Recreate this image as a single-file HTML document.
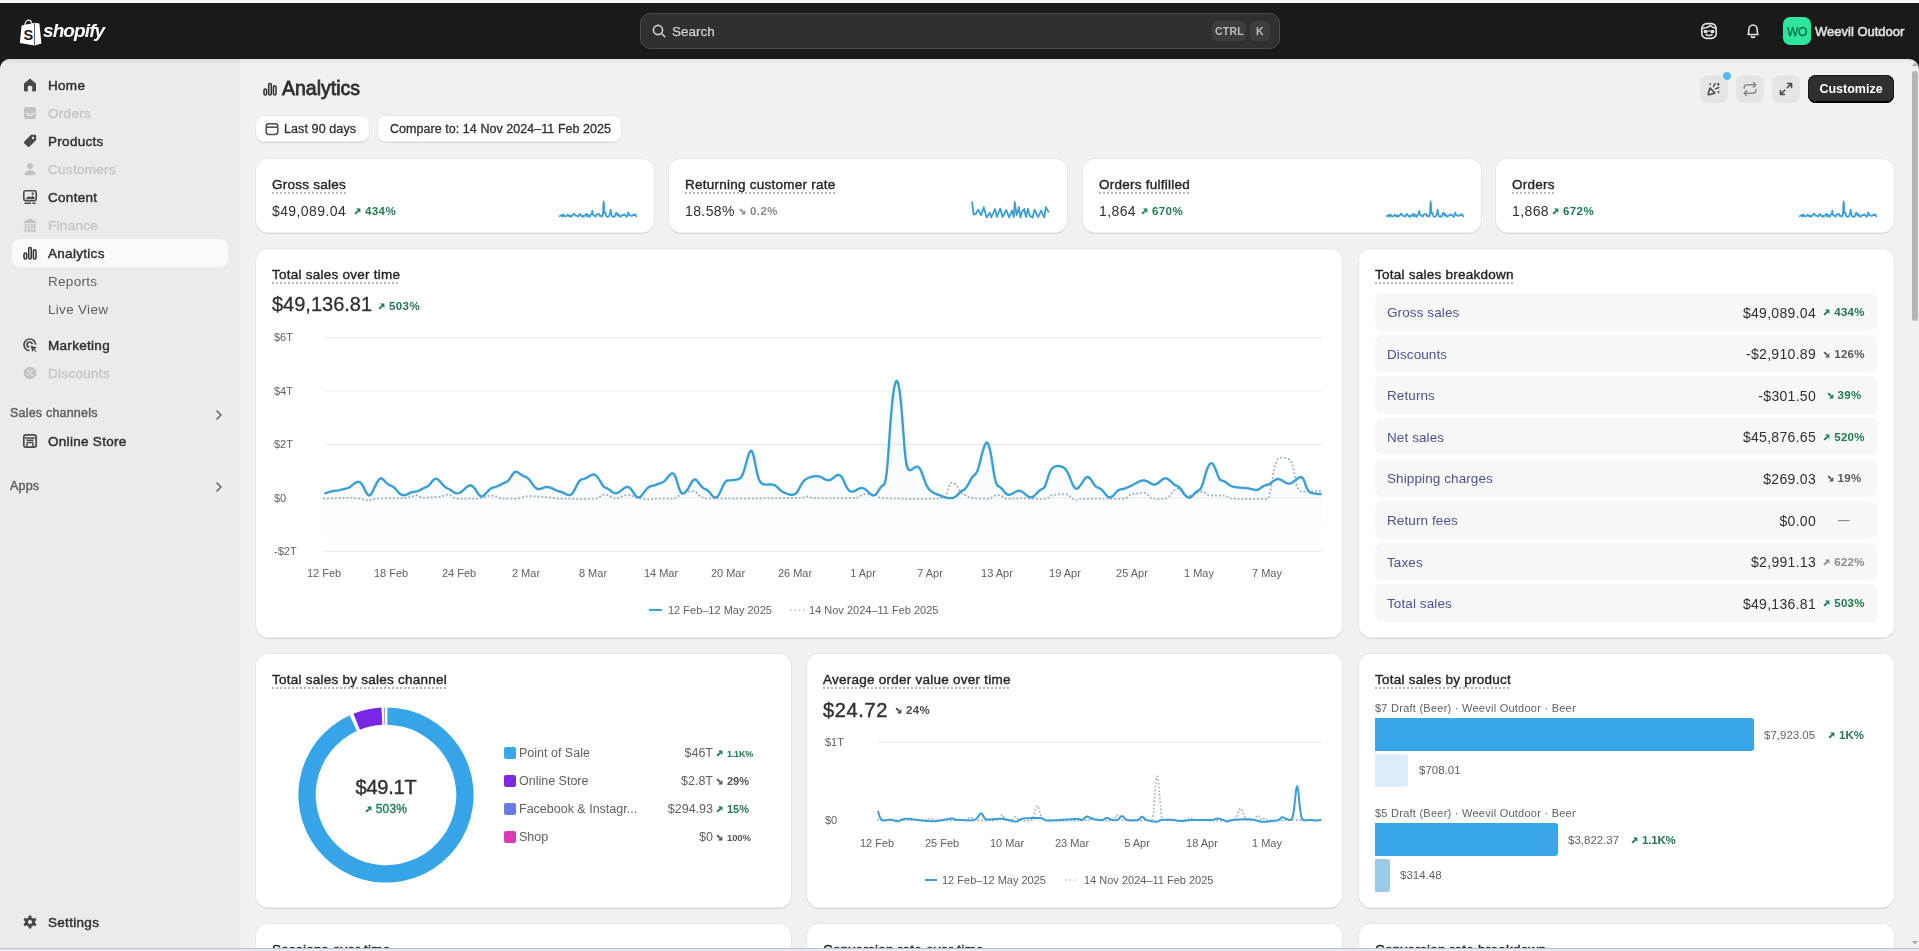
<!DOCTYPE html>
<html><head><meta charset="utf-8">
<style>
*{box-sizing:border-box;margin:0;padding:0}
html,body{width:1919px;height:951px;overflow:hidden;background:#f8f8fa;font-family:"Liberation Sans",sans-serif;color:#303030;-webkit-font-smoothing:antialiased}
.t,.ttl,.tx,.sect{will-change:transform}
.abs{position:absolute}
#hdr{position:absolute;left:0;top:3px;width:1919px;height:75px;background:#1a1a1a}
#app{position:absolute;left:0;top:59px;width:1919px;height:892px;background:#f1f1f1;border-radius:10px 10px 0 0;overflow:hidden}
#side{position:absolute;left:0;top:0;width:240px;height:892px;background:#ebebeb}
#app:before{content:"";position:absolute;left:0;top:0;width:100%;height:5px;background:linear-gradient(rgba(0,0,0,0.06),rgba(0,0,0,0));z-index:5}
.nav{position:absolute;left:12px;width:216px;height:28px;border-radius:8px}
.nav .ic{position:absolute;left:10px;top:6px;width:16px;height:16px}
.nav .tx{position:absolute;left:36px;top:1px;line-height:28px;font-size:13.5px;font-weight:normal;-webkit-text-stroke:0.45px currentColor;color:#303030;letter-spacing:0.3px}
.nav.dim .tx{color:#c6c6c6}
.nav.sub .tx{-webkit-text-stroke:0;color:#616161}
.sect{position:absolute;left:10px;font-size:12.5px;font-weight:normal;-webkit-text-stroke:0.45px currentColor;color:#616161}
.card{position:absolute;background:#fff;border-radius:12px;box-shadow:0 1px 0 rgba(26,26,26,.09),inset 0 -1px 0 rgba(0,0,0,.06),0 0 0 1px rgba(0,0,0,.035)}
.ttl{position:absolute;font-size:13.5px;font-weight:normal;-webkit-text-stroke:0.4px currentColor;letter-spacing:0.25px;margin-top:1px;color:#262626;line-height:16px;padding-bottom:0.5px;white-space:nowrap;background:linear-gradient(to right,#b9b9b9 50%,rgba(0,0,0,0) 50%) left bottom/4px 2px repeat-x}
.t{position:absolute;white-space:nowrap}
.g{color:#1f7a50}
.gr{color:#616161}
</style></head><body>
<div id="hdr">
  <!-- shopify logo -->
  <svg class="abs" style="left:19px;top:15px" width="24" height="28" viewBox="0 0 24 28">
    <path d="M2.6 7.6 L15.5 4.8 L20.4 5.6 L22.4 25.4 L15.6 27.4 L0.8 24.9 Z" fill="#fff"/>
    <path d="M15.5 5.2 L15.6 27.2" stroke="#1a1a1a" stroke-width="0.7"/>
    <path d="M5.8 7.8 C5.9 4.6 7.6 2.2 9.6 2.2 C11.3 2.2 12.3 3.6 12.6 5.6" stroke="#fff" stroke-width="1.3" fill="none"/>
    <path d="M9.8 3.2 C10.8 3.6 11.6 4.6 11.8 6" stroke="#1a1a1a" stroke-width="0.6" fill="none"/>
    <text x="4.6" y="22.4" font-family="Liberation Sans" font-weight="bold" font-size="14.5" fill="#1a1a1a">S</text>
  </svg>
  <div class="t" style="left:43px;top:17px;font-size:19px;font-weight:bold;font-style:italic;color:#fff;letter-spacing:-0.9px">shopify</div>
  <!-- search -->
  <div class="abs" style="left:640px;top:10px;width:640px;height:36px;border-radius:10px;background:#303030;border:1px solid #4a4a4a"></div>
  <svg class="abs" style="left:652px;top:21px" width="14" height="14" viewBox="0 0 14 14"><circle cx="6" cy="6" r="4.6" stroke="#cfcfcf" stroke-width="1.6" fill="none"/><path d="M9.5 9.5 L12.8 12.8" stroke="#cfcfcf" stroke-width="1.6" stroke-linecap="round"/></svg>
  <div class="t" style="left:672px;top:21px;font-size:13.5px;-webkit-text-stroke:0.25px currentColor;color:#cfcfcf">Search</div>
  <div class="abs" style="left:1212px;top:18px;width:34px;height:20px;border-radius:5px;background:#3d3d3d"></div>
  <div class="t" style="left:1215px;top:22px;font-size:10.5px;font-weight:bold;color:#bcbcbc;letter-spacing:0.2px">CTRL</div>
  <div class="abs" style="left:1250px;top:18px;width:20px;height:20px;border-radius:5px;background:#3d3d3d"></div>
  <div class="t" style="left:1256px;top:22px;font-size:10.5px;font-weight:bold;color:#bcbcbc">K</div>
  <!-- icons right -->
  <svg class="abs" style="left:1700px;top:19px" width="18" height="18" viewBox="0 0 18 18"><rect x="1.8" y="1.6" width="14.4" height="14.8" rx="5" stroke="#e3e3e3" stroke-width="1.6" fill="none"/><path d="M2.2 6.2 C5 6.4 8 5.6 10.5 3.6 C11.5 5 13.5 6 15.8 6.2" stroke="#e3e3e3" stroke-width="1.6" fill="none"/><rect x="3.6" y="8" width="4" height="3" rx="1.2" fill="#e3e3e3"/><rect x="10.4" y="8" width="4" height="3" rx="1.2" fill="#e3e3e3"/><path d="M7.6 9 H10.4" stroke="#e3e3e3" stroke-width="1.2"/><path d="M6 12.4 C7.5 13.9 10.5 13.9 12 12.4" stroke="#e3e3e3" stroke-width="1.6" fill="none" stroke-linecap="round"/></svg>
  <svg class="abs" style="left:1744px;top:19px" width="18" height="18" viewBox="0 0 18 18"><path d="M4 12.5 C4.8 11.5 4.8 10 4.8 7.8 C4.8 5 6.6 3 9 3 C11.4 3 13.2 5 13.2 7.8 C13.2 10 13.2 11.5 14 12.5 Z" stroke="#e3e3e3" stroke-width="1.6" fill="none" stroke-linejoin="round"/><path d="M7.4 14.6 C7.8 15.6 10.2 15.6 10.6 14.6" stroke="#e3e3e3" stroke-width="1.6" fill="none" stroke-linecap="round"/></svg>
  <div class="abs" style="left:1783px;top:14px;width:28px;height:28px;border-radius:7px;background:#2ee59d"></div>
  <div class="t" style="left:1785px;top:22px;width:24px;text-align:center;font-size:12px;-webkit-text-stroke:0.25px currentColor;color:#0b6a44;letter-spacing:-0.4px">WO</div>
  <div class="t" style="left:1815px;top:21px;font-size:13px;-webkit-text-stroke:0.55px currentColor;color:#e3e3e3;letter-spacing:0px">Weevil Outdoor</div>
</div>

<div id="app">
  <div id="side">
    <!-- nav items: top positions relative to app (y-58) -->
    <div class="nav" style="top:12px"><svg class="ic" viewBox="0 0 16 16"><path d="M8 1.6 L14 6.4 V13.2 C14 13.9 13.5 14.4 12.8 14.4 H10.2 V10.2 C10.2 9.2 9.4 8.8 8 8.8 C6.6 8.8 5.8 9.2 5.8 10.2 V14.4 H3.2 C2.5 14.4 2 13.9 2 13.2 V6.4 Z" fill="#4a4a4a"/></svg><div class="tx">Home</div></div>
    <div class="nav dim" style="top:40px"><svg class="ic" viewBox="0 0 16 16"><rect x="2" y="2" width="12" height="12" rx="2.5" fill="#c2c2c2"/><path d="M3.5 8.5 H6 C6.3 10 7 10.6 8 10.6 C9 10.6 9.7 10 10 8.5 H12.5" stroke="#ebebeb" stroke-width="1.4" fill="none"/></svg><div class="tx">Orders</div></div>
    <div class="nav" style="top:68px"><svg class="ic" viewBox="0 0 16 16"><path d="M9 1.8 H13 C13.7 1.8 14.2 2.3 14.2 3 V7 L7.6 13.6 C7 14.2 6.2 14.2 5.6 13.6 L2.4 10.4 C1.8 9.8 1.8 9 2.4 8.4 Z" fill="#4a4a4a"/><circle cx="11" cy="5" r="1.2" fill="#ebebeb"/></svg><div class="tx">Products</div></div>
    <div class="nav dim" style="top:96px"><svg class="ic" viewBox="0 0 16 16"><circle cx="8" cy="5" r="3" fill="#c2c2c2"/><path d="M2.5 14.2 C2.5 10.8 5 9.2 8 9.2 C11 9.2 13.5 10.8 13.5 14.2 Z" fill="#c2c2c2"/></svg><div class="tx">Customers</div></div>
    <div class="nav" style="top:124px"><svg class="ic" viewBox="0 0 16 16"><rect x="1.8" y="1.8" width="12.4" height="9.8" rx="1.6" stroke="#4a4a4a" stroke-width="1.6" fill="none"/><path d="M3.5 10 L6.5 7 L8.5 8.6 L10.5 6.6 L12.5 8.8 V10 Z" fill="#4a4a4a"/><circle cx="10.8" cy="4.6" r="1.2" fill="#4a4a4a"/><path d="M2.5 14.2 H9 M10.5 14.2 H13.5" stroke="#4a4a4a" stroke-width="1.5"/></svg><div class="tx">Content</div></div>
    <div class="nav dim" style="top:152px"><svg class="ic" viewBox="0 0 16 16"><path d="M8 1.5 L14.2 4.8 V6.2 H1.8 V4.8 Z" fill="#c2c2c2"/><rect x="2.8" y="7" width="1.8" height="5.2" fill="#c2c2c2"/><rect x="5.9" y="7" width="1.8" height="5.2" fill="#c2c2c2"/><rect x="8.9" y="7" width="1.8" height="5.2" fill="#c2c2c2"/><rect x="11.6" y="7" width="1.8" height="5.2" fill="#c2c2c2"/><rect x="1.8" y="12.8" width="12.4" height="1.8" fill="#c2c2c2"/></svg><div class="tx">Finance</div></div>
    <div class="nav" style="top:180px;background:#fafafa"><svg class="ic" viewBox="0 0 16 16"><rect x="2" y="8" width="2.6" height="6" rx="1.3" stroke="#303030" stroke-width="1.5" fill="none"/><rect x="6.7" y="2.5" width="2.6" height="11.5" rx="1.3" stroke="#303030" stroke-width="1.5" fill="none"/><rect x="11.4" y="4.8" width="2.6" height="9.2" rx="1.3" stroke="#303030" stroke-width="1.5" fill="none"/></svg><div class="tx">Analytics</div></div>
    <div class="nav sub" style="top:208px"><div class="tx">Reports</div></div>
    <div class="nav sub" style="top:236px"><div class="tx">Live View</div></div>
    <div class="nav" style="top:272px"><svg class="ic" viewBox="0 0 16 16"><path d="M13.6 7.6 A5.8 5.8 0 1 0 7.4 13.6" stroke="#4a4a4a" stroke-width="1.7" fill="none"/><path d="M10.2 7.2 A2.6 2.6 0 1 0 7.2 10.2" stroke="#4a4a4a" stroke-width="1.7" fill="none"/><path d="M8.4 8.4 L15 10.6 L12.4 11.8 L14.6 14.2 L13.8 15 L11.6 12.6 L10.4 15 Z" fill="#4a4a4a"/></svg><div class="tx">Marketing</div></div>
    <div class="nav dim" style="top:300px"><svg class="ic" viewBox="0 0 16 16"><path d="M8 1.2 L9.8 2.6 L12 2.4 L12.6 4.6 L14.6 5.8 L13.8 8 L14.6 10.2 L12.6 11.4 L12 13.6 L9.8 13.4 L8 14.8 L6.2 13.4 L4 13.6 L3.4 11.4 L1.4 10.2 L2.2 8 L1.4 5.8 L3.4 4.6 L4 2.4 L6.2 2.6 Z" fill="#c2c2c2"/><path d="M5.6 10.4 L10.4 5.6" stroke="#ebebeb" stroke-width="1.3"/><circle cx="6" cy="6" r="1" fill="#ebebeb"/><circle cx="10" cy="10" r="1" fill="#ebebeb"/></svg><div class="tx">Discounts</div></div>
    <div class="sect" style="top:347px;letter-spacing:0.2px">Sales channels</div>
    <svg class="abs" style="left:214px;top:350px" width="10" height="12" viewBox="0 0 10 12"><path d="M3 2 L7 6 L3 10" stroke="#616161" stroke-width="1.5" fill="none" stroke-linecap="round" stroke-linejoin="round"/></svg>
    <div class="nav" style="top:368px"><svg class="ic" viewBox="0 0 16 16"><rect x="1.8" y="1.8" width="12.4" height="12.4" rx="2.2" stroke="#4a4a4a" stroke-width="1.7" fill="none"/><path d="M3 5 H13 M4.5 7.3 H11.5 M5 9.5 V13.5 M11 9.5 V13.5 M5 9.5 H11" stroke="#4a4a4a" stroke-width="1.5"/></svg><div class="tx">Online Store</div></div>
    <div class="sect" style="top:419.5px;letter-spacing:0.2px">Apps</div>
    <svg class="abs" style="left:214px;top:422px" width="10" height="12" viewBox="0 0 10 12"><path d="M3 2 L7 6 L3 10" stroke="#616161" stroke-width="1.5" fill="none" stroke-linecap="round" stroke-linejoin="round"/></svg>
    <div class="nav" style="top:849px"><svg class="ic" viewBox="0 0 16 16"><path d="M6.8 1.5 H9.2 L9.7 3.5 L11.3 4.4 L13.3 3.8 L14.5 5.9 L13 7.3 V8.7 L14.5 10.1 L13.3 12.2 L11.3 11.6 L9.7 12.5 L9.2 14.5 H6.8 L6.3 12.5 L4.7 11.6 L2.7 12.2 L1.5 10.1 L3 8.7 V7.3 L1.5 5.9 L2.7 3.8 L4.7 4.4 L6.3 3.5 Z" fill="#4a4a4a"/><circle cx="8" cy="8" r="2" fill="#ebebeb"/></svg><div class="tx">Settings</div></div>
  </div>
</div>
<!-- MAIN -->
<!-- page header -->
<svg class="abs" style="left:262px;top:81px" width="16" height="16" viewBox="0 0 16 16"><rect x="2" y="8" width="2.6" height="6" rx="1.3" stroke="#303030" stroke-width="1.5" fill="none"/><rect x="6.7" y="2.5" width="2.6" height="11.5" rx="1.3" stroke="#303030" stroke-width="1.5" fill="none"/><rect x="11.4" y="4.8" width="2.6" height="9.2" rx="1.3" stroke="#303030" stroke-width="1.5" fill="none"/></svg>
<div class="t" style="left:282px;top:77px;font-size:19.5px;-webkit-text-stroke:0.8px currentColor;color:#303030">Analytics</div>

<div class="card" style="left:256px;top:116px;width:113px;height:26px;border-radius:8px"></div>
<svg class="abs" style="left:264px;top:121px" width="16" height="16" viewBox="0 0 16 16"><rect x="2.2" y="2.8" width="11.6" height="10.6" rx="2.6" stroke="#4a4a4a" stroke-width="1.5" fill="none"/><path d="M2.5 6.2 H13.5" stroke="#4a4a4a" stroke-width="1.5"/></svg>
<div class="t" style="left:284px;top:122px;font-size:12.5px;-webkit-text-stroke:0.3px currentColor;letter-spacing:0.1px;color:#303030">Last 90 days</div>
<div class="card" style="left:378px;top:116px;width:243px;height:26px;border-radius:8px"></div>
<div class="t" style="left:390px;top:122px;font-size:12.5px;-webkit-text-stroke:0.3px currentColor;letter-spacing:0.05px;color:#303030">Compare to: 14 Nov 2024–11 Feb 2025</div>

<div class="abs" style="left:1700px;top:75px;width:28px;height:28px;border-radius:8px;background:#e5e5e5"></div>
<svg class="abs" style="left:1705px;top:80px" width="18" height="18" viewBox="0 0 18 18"><path d="M5 8 L3.2 13.8 C3 14.5 3.5 15 4.2 14.8 L10 13 Z" stroke="#4a4a4a" stroke-width="1.5" fill="none" stroke-linejoin="round"/><circle cx="5.2" cy="4.2" r="0.9" fill="#4a4a4a"/><path d="M8.5 6.5 L10 3.5 M10.5 8.8 L13.8 7.5" stroke="#4a4a4a" stroke-width="1.4" stroke-linecap="round"/><path d="M13.2 2.2 L13.8 3.6 L15.2 4.2 L13.8 4.8 L13.2 6.2 L12.6 4.8 L11.2 4.2 L12.6 3.6 Z" fill="#4a4a4a"/><path d="M13.5 10.5 L14 11.6 L15.1 12.1 L14 12.6 L13.5 13.7 L13 12.6 L11.9 12.1 L13 11.6 Z" fill="#4a4a4a"/></svg>
<div class="abs" style="left:1722px;top:71px;width:10px;height:10px;border-radius:50%;background:#55b8f2;border:1px solid #f1f1f1"></div>
<div class="abs" style="left:1736px;top:75px;width:28px;height:28px;border-radius:8px;background:#e5e5e5"></div>
<svg class="abs" style="left:1741px;top:80px" width="18" height="18" viewBox="0 0 18 18"><path d="M12.5 2.5 L14.8 4.8 L12.5 7.1 M14.5 4.8 H6 C4.3 4.8 3.2 5.9 3.2 7.6 V8.2" stroke="#8a8a8a" stroke-width="1.5" fill="none" stroke-linecap="round" stroke-linejoin="round"/><path d="M5.5 15.5 L3.2 13.2 L5.5 10.9 M3.5 13.2 H12 C13.7 13.2 14.8 12.1 14.8 10.4 V9.8" stroke="#8a8a8a" stroke-width="1.5" fill="none" stroke-linecap="round" stroke-linejoin="round"/></svg>
<div class="abs" style="left:1772px;top:75px;width:28px;height:28px;border-radius:8px;background:#e5e5e5"></div>
<svg class="abs" style="left:1777px;top:80px" width="18" height="18" viewBox="0 0 18 18"><path d="M10.5 3.5 H14.5 V7.5 M14.2 3.8 L10.2 7.8 M7.5 14.5 H3.5 V10.5 M3.8 14.2 L7.8 10.2" stroke="#4a4a4a" stroke-width="1.6" fill="none" stroke-linecap="round" stroke-linejoin="round"/></svg>
<div class="abs" style="left:1808px;top:75px;width:86px;height:28px;border-radius:8px;background:#303030;box-shadow:inset 0 -2px 0 #000, inset 0 0 0 1px #1a1a1a, inset 0 1px 0 #4a4a4a"></div>
<div class="t" style="left:1808px;top:81.5px;width:86px;text-align:center;font-size:12.5px;font-weight:bold;color:#fff">Customize</div>

<!-- metric cards -->
<div class="card" style="left:256px;top:159px;width:398px;height:74px"></div>
<div class="ttl" style="left:272px;top:176px">Gross sales</div>
<div class="t" style="left:272px;top:203px;font-size:14px;letter-spacing:0.4px;color:#303030">$49,089.04</div>
<div class="t g" style="left:354px;top:205px;font-size:11.5px;font-weight:bold;letter-spacing:0.4px"><svg width="7" height="7" viewBox="0 0 7 7" style="display:inline-block;vertical-align:0px;margin-right:4px"><path d="M1.1 5.9 L4.2 2.8" stroke="currentColor" stroke-width="1.9"/><path d="M2.0 0.6 H6.4 V5.0 Z" fill="currentColor"/></svg>434%</div>

<div class="card" style="left:669px;top:159px;width:398px;height:74px"></div>
<div class="ttl" style="left:685px;top:176px">Returning customer rate</div>
<div class="t" style="left:685px;top:203px;font-size:14px;letter-spacing:0.4px;color:#303030">18.58%</div>
<div class="t gr" style="left:739px;top:205px;font-size:11.5px;font-weight:bold;letter-spacing:0.4px;color:#8a8a8a"><svg width="7" height="7" viewBox="0 0 7 7" style="display:inline-block;vertical-align:0px;margin-right:4px"><path d="M1.1 1.1 L4.2 4.2" stroke="currentColor" stroke-width="1.9"/><path d="M2.0 6.4 H6.4 V2.0 Z" fill="currentColor"/></svg>0.2%</div>

<div class="card" style="left:1083px;top:159px;width:398px;height:74px"></div>
<div class="ttl" style="left:1099px;top:176px">Orders fulfilled</div>
<div class="t" style="left:1099px;top:203px;font-size:14px;letter-spacing:0.4px;color:#303030">1,864</div>
<div class="t g" style="left:1141px;top:205px;font-size:11.5px;font-weight:bold;letter-spacing:0.4px"><svg width="7" height="7" viewBox="0 0 7 7" style="display:inline-block;vertical-align:0px;margin-right:4px"><path d="M1.1 5.9 L4.2 2.8" stroke="currentColor" stroke-width="1.9"/><path d="M2.0 0.6 H6.4 V5.0 Z" fill="currentColor"/></svg>670%</div>

<div class="card" style="left:1496px;top:159px;width:398px;height:74px"></div>
<div class="ttl" style="left:1512px;top:176px">Orders</div>
<div class="t" style="left:1512px;top:203px;font-size:14px;letter-spacing:0.4px;color:#303030">1,868</div>
<div class="t g" style="left:1552px;top:205px;font-size:11.5px;font-weight:bold;letter-spacing:0.4px"><svg width="7" height="7" viewBox="0 0 7 7" style="display:inline-block;vertical-align:0px;margin-right:4px"><path d="M1.1 5.9 L4.2 2.8" stroke="currentColor" stroke-width="1.9"/><path d="M2.0 0.6 H6.4 V5.0 Z" fill="currentColor"/></svg>672%</div>

<svg class="abs" style="left:0;top:0" width="1919" height="240"><path d="M324.2 493.40 L324.7 493.31 L325.7 493.07 L326.7 492.78 L327.7 492.46 L328.7 492.14 L329.7 491.83 L330.7 491.53 L331.7 491.25 L332.7 491.02 L333.7 490.84 L334.7 490.72 L335.7 490.66 L336.7 490.61 L337.7 490.51 L338.7 490.35 L339.7 490.13 L340.7 489.87 L341.7 489.59 L342.7 489.31 L343.7 489.05 L344.7 488.82 L345.7 488.63 L346.7 488.43 L347.7 488.15 L348.7 487.72 L349.7 487.15 L350.7 486.45 L351.7 485.67 L352.7 484.87 L353.7 484.08 L354.7 483.33 L355.7 482.67 L356.7 482.15 L357.7 481.83 L358.7 481.80 L359.7 482.12 L360.7 482.84 L361.7 483.99 L362.7 485.51 L363.7 487.35 L364.7 489.37 L365.7 491.38 L366.7 493.19 L367.7 494.56 L368.7 495.29 L369.7 495.26 L370.7 494.46 L371.7 493.03 L372.7 491.20 L373.7 489.19 L374.7 487.15 L375.7 485.12 L376.7 483.16 L377.7 481.34 L378.7 479.85 L379.7 478.83 L380.7 478.39 L381.7 478.53 L382.7 479.14 L383.7 480.06 L384.7 481.15 L385.7 482.23 L386.7 483.19 L387.7 483.98 L388.7 484.60 L389.7 485.11 L390.7 485.56 L391.7 486.03 L392.7 486.57 L393.7 487.25 L394.7 488.09 L395.7 489.10 L396.7 490.23 L397.7 491.41 L398.7 492.53 L399.7 493.53 L400.7 494.32 L401.7 494.87 L402.7 495.17 L403.7 495.24 L404.7 495.12 L405.7 494.86 L406.7 494.50 L407.7 494.08 L408.7 493.62 L409.7 493.15 L410.7 492.70 L411.7 492.31 L412.7 492.01 L413.7 491.82 L414.7 491.68 L415.7 491.55 L416.7 491.34 L417.7 491.03 L418.7 490.62 L419.7 490.14 L420.7 489.63 L421.7 489.10 L422.7 488.57 L423.7 488.07 L424.7 487.62 L425.7 487.23 L426.7 486.83 L427.7 486.31 L428.7 485.55 L429.7 484.52 L430.7 483.31 L431.7 482.03 L432.7 480.83 L433.7 479.83 L434.7 479.13 L435.7 478.80 L436.7 478.88 L437.7 479.34 L438.7 480.10 L439.7 481.09 L440.7 482.21 L441.7 483.40 L442.7 484.58 L443.7 485.67 L444.7 486.61 L445.7 487.38 L446.7 487.98 L447.7 488.49 L448.7 488.99 L449.7 489.54 L450.7 490.16 L451.7 490.84 L452.7 491.52 L453.7 492.16 L454.7 492.70 L455.7 493.11 L456.7 493.34 L457.7 493.37 L458.7 493.19 L459.7 492.79 L460.7 492.21 L461.7 491.49 L462.7 490.67 L463.7 489.79 L464.7 488.88 L465.7 487.98 L466.7 487.13 L467.7 486.37 L468.7 485.79 L469.7 485.44 L470.7 485.39 L471.7 485.70 L472.7 486.37 L473.7 487.36 L474.7 488.57 L475.7 489.95 L476.7 491.47 L477.7 493.03 L478.7 494.49 L479.7 495.61 L480.7 496.27 L481.7 496.41 L482.7 496.09 L483.7 495.43 L484.7 494.55 L485.7 493.53 L486.7 492.44 L487.7 491.35 L488.7 490.32 L489.7 489.40 L490.7 488.64 L491.7 488.07 L492.7 487.66 L493.7 487.38 L494.7 487.13 L495.7 486.84 L496.7 486.49 L497.7 486.08 L498.7 485.61 L499.7 485.12 L500.7 484.61 L501.7 484.09 L502.7 483.59 L503.7 483.11 L504.7 482.66 L505.7 482.22 L506.7 481.72 L507.7 481.05 L508.7 480.10 L509.7 478.84 L510.7 477.34 L511.7 475.74 L512.7 474.23 L513.7 473.00 L514.7 472.17 L515.7 471.80 L516.7 471.86 L517.7 472.25 L518.7 472.87 L519.7 473.62 L520.7 474.40 L521.7 475.11 L522.7 475.70 L523.7 476.16 L524.7 476.53 L525.7 476.90 L526.7 477.37 L527.7 478.05 L528.7 478.97 L529.7 480.12 L530.7 481.46 L531.7 482.89 L532.7 484.33 L533.7 485.68 L534.7 486.87 L535.7 487.84 L536.7 488.54 L537.7 488.95 L538.7 489.09 L539.7 489.01 L540.7 488.76 L541.7 488.40 L542.7 488.00 L543.7 487.61 L544.7 487.29 L545.7 487.07 L546.7 486.98 L547.7 487.03 L548.7 487.21 L549.7 487.48 L550.7 487.82 L551.7 488.21 L552.7 488.64 L553.7 489.10 L554.7 489.57 L555.7 490.04 L556.7 490.50 L557.7 490.91 L558.7 491.26 L559.7 491.53 L560.7 491.76 L561.7 492.01 L562.7 492.36 L563.7 492.83 L564.7 493.38 L565.7 493.95 L566.7 494.47 L567.7 494.90 L568.7 495.15 L569.7 495.17 L570.7 494.86 L571.7 494.16 L572.7 493.03 L573.7 491.50 L574.7 489.66 L575.7 487.63 L576.7 485.56 L577.7 483.61 L578.7 481.95 L579.7 480.67 L580.7 479.81 L581.7 479.32 L582.7 479.05 L583.7 478.84 L584.7 478.57 L585.7 478.18 L586.7 477.66 L587.7 477.07 L588.7 476.45 L589.7 475.85 L590.7 475.30 L591.7 474.85 L592.7 474.57 L593.7 474.51 L594.7 474.74 L595.7 475.28 L596.7 476.16 L597.7 477.35 L598.7 478.81 L599.7 480.46 L600.7 482.21 L601.7 483.89 L602.7 485.37 L603.7 486.52 L604.7 487.30 L605.7 487.81 L606.7 488.20 L607.7 488.64 L608.7 489.21 L609.7 489.92 L610.7 490.72 L611.7 491.51 L612.7 492.22 L613.7 492.78 L614.7 493.14 L615.7 493.27 L616.7 493.15 L617.7 492.80 L618.7 492.28 L619.7 491.63 L620.7 490.90 L621.7 490.12 L622.7 489.32 L623.7 488.56 L624.7 487.88 L625.7 487.33 L626.7 486.98 L627.7 486.89 L628.7 487.13 L629.7 487.73 L630.7 488.66 L631.7 489.89 L632.7 491.36 L633.7 492.94 L634.7 494.49 L635.7 495.83 L636.7 496.84 L637.7 497.41 L638.7 497.51 L639.7 497.16 L640.7 496.44 L641.7 495.43 L642.7 494.23 L643.7 492.92 L644.7 491.58 L645.7 490.26 L646.7 489.04 L647.7 488.00 L648.7 487.17 L649.7 486.58 L650.7 486.20 L651.7 485.95 L652.7 485.74 L653.7 485.52 L654.7 485.23 L655.7 484.88 L656.7 484.49 L657.7 484.09 L658.7 483.71 L659.7 483.37 L660.7 483.05 L661.7 482.72 L662.7 482.28 L663.7 481.66 L664.7 480.82 L665.7 479.78 L666.7 478.60 L667.7 477.35 L668.7 476.12 L669.7 475.00 L670.7 474.08 L671.7 473.50 L672.7 473.38 L673.7 473.92 L674.7 475.25 L675.7 477.46 L676.7 480.45 L677.7 483.89 L678.7 487.26 L679.7 490.05 L680.7 492.00 L681.7 493.09 L682.7 493.47 L683.7 493.31 L684.7 492.74 L685.7 491.84 L686.7 490.64 L687.7 489.18 L688.7 487.51 L689.7 485.71 L690.7 483.91 L691.7 482.21 L692.7 480.78 L693.7 479.78 L694.7 479.35 L695.7 479.57 L696.7 480.36 L697.7 481.51 L698.7 482.83 L699.7 484.16 L700.7 485.45 L701.7 486.64 L702.7 487.65 L703.7 488.41 L704.7 488.95 L705.7 489.38 L706.7 489.86 L707.7 490.53 L708.7 491.42 L709.7 492.53 L710.7 493.76 L711.7 494.99 L712.7 496.11 L713.7 497.00 L714.7 497.54 L715.7 497.65 L716.7 497.23 L717.7 496.27 L718.7 494.83 L719.7 492.99 L720.7 490.90 L721.7 488.67 L722.7 486.46 L723.7 484.43 L724.7 482.74 L725.7 481.53 L726.7 480.82 L727.7 480.51 L728.7 480.42 L729.7 480.37 L730.7 480.30 L731.7 480.20 L732.7 480.08 L733.7 479.97 L734.7 479.84 L735.7 479.70 L736.7 479.53 L737.7 479.31 L738.7 479.00 L739.7 478.53 L740.7 477.73 L741.7 476.40 L742.7 474.37 L743.7 471.65 L744.7 468.38 L745.7 464.79 L746.7 461.09 L747.7 457.52 L748.7 454.37 L749.7 451.99 L750.7 450.80 L751.7 451.13 L752.7 453.08 L753.7 456.52 L754.7 461.07 L755.7 466.18 L756.7 471.16 L757.7 475.42 L758.7 478.66 L759.7 480.92 L760.7 482.40 L761.7 483.32 L762.7 483.90 L763.7 484.25 L764.7 484.45 L765.7 484.56 L766.7 484.59 L767.7 484.59 L768.7 484.56 L769.7 484.53 L770.7 484.51 L771.7 484.53 L772.7 484.64 L773.7 484.87 L774.7 485.26 L775.7 485.86 L776.7 486.67 L777.7 487.65 L778.7 488.70 L779.7 489.71 L780.7 490.58 L781.7 491.28 L782.7 491.86 L783.7 492.35 L784.7 492.80 L785.7 493.22 L786.7 493.61 L787.7 493.96 L788.7 494.27 L789.7 494.52 L790.7 494.70 L791.7 494.79 L792.7 494.78 L793.7 494.60 L794.7 494.21 L795.7 493.53 L796.7 492.49 L797.7 491.08 L798.7 489.36 L799.7 487.45 L800.7 485.53 L801.7 483.76 L802.7 482.25 L803.7 481.04 L804.7 480.10 L805.7 479.35 L806.7 478.74 L807.7 478.22 L808.7 477.77 L809.7 477.39 L810.7 477.06 L811.7 476.78 L812.7 476.54 L813.7 476.36 L814.7 476.22 L815.7 476.13 L816.7 476.11 L817.7 476.18 L818.7 476.36 L819.7 476.65 L820.7 477.04 L821.7 477.51 L822.7 478.04 L823.7 478.58 L824.7 479.11 L825.7 479.57 L826.7 479.94 L827.7 480.17 L828.7 480.22 L829.7 480.06 L830.7 479.69 L831.7 479.13 L832.7 478.41 L833.7 477.61 L834.7 476.78 L835.7 476.01 L836.7 475.37 L837.7 474.95 L838.7 474.83 L839.7 475.10 L840.7 475.85 L841.7 477.08 L842.7 478.76 L843.7 480.79 L844.7 482.98 L845.7 485.17 L846.7 487.18 L847.7 488.87 L848.7 490.16 L849.7 491.02 L850.7 491.49 L851.7 491.63 L852.7 491.53 L853.7 491.26 L854.7 490.86 L855.7 490.38 L856.7 489.87 L857.7 489.35 L858.7 488.87 L859.7 488.46 L860.7 488.17 L861.7 488.03 L862.7 488.10 L863.7 488.38 L864.7 488.87 L865.7 489.56 L866.7 490.40 L867.7 491.34 L868.7 492.32 L869.7 493.28 L870.7 494.15 L871.7 494.84 L872.7 495.28 L873.7 495.37 L874.7 495.09 L875.7 494.41 L876.7 493.37 L877.7 492.02 L878.7 490.47 L879.7 488.85 L880.7 487.36 L881.7 486.22 L882.7 485.53 L883.7 484.90 L884.7 483.36 L885.7 479.52 L886.7 472.30 L887.7 461.53 L888.7 448.11 L889.7 433.69 L890.7 419.94 L891.7 407.98 L892.7 398.22 L893.7 390.65 L894.7 385.17 L895.7 381.84 L896.7 380.81 L897.7 382.14 L898.7 385.78 L899.7 391.66 L900.7 399.86 L901.7 410.59 L902.7 423.61 L903.7 437.49 L904.7 449.97 L905.7 459.31 L906.7 465.20 L907.7 468.37 L908.7 469.78 L909.7 470.19 L910.7 470.02 L911.7 469.54 L912.7 468.88 L913.7 468.15 L914.7 467.45 L915.7 466.89 L916.7 466.58 L917.7 466.66 L918.7 467.25 L919.7 468.43 L920.7 470.20 L921.7 472.50 L922.7 475.18 L923.7 478.05 L924.7 480.88 L925.7 483.46 L926.7 485.66 L927.7 487.44 L928.7 488.85 L929.7 489.97 L930.7 490.87 L931.7 491.62 L932.7 492.26 L933.7 492.81 L934.7 493.29 L935.7 493.73 L936.7 494.14 L937.7 494.54 L938.7 494.93 L939.7 495.32 L940.7 495.71 L941.7 496.08 L942.7 496.44 L943.7 496.78 L944.7 497.10 L945.7 497.38 L946.7 497.63 L947.7 497.85 L948.7 498.01 L949.7 498.11 L950.7 498.15 L951.7 498.08 L952.7 497.90 L953.7 497.56 L954.7 497.05 L955.7 496.38 L956.7 495.56 L957.7 494.62 L958.7 493.62 L959.7 492.63 L960.7 491.74 L961.7 491.01 L962.7 490.43 L963.7 489.90 L964.7 489.22 L965.7 488.22 L966.7 486.86 L967.7 485.21 L968.7 483.38 L969.7 481.49 L970.7 479.67 L971.7 478.03 L972.7 476.69 L973.7 475.68 L974.7 474.86 L975.7 473.89 L976.7 472.38 L977.7 470.05 L978.7 466.88 L979.7 463.12 L980.7 459.10 L981.7 455.13 L982.7 451.38 L983.7 447.99 L984.7 445.19 L985.7 443.25 L986.7 442.46 L987.7 443.01 L988.7 444.99 L989.7 448.39 L990.7 453.13 L991.7 458.97 L992.7 465.45 L993.7 471.88 L994.7 477.50 L995.7 481.74 L996.7 484.39 L997.7 485.74 L998.7 486.37 L999.7 486.88 L1000.7 487.61 L1001.7 488.63 L1002.7 489.84 L1003.7 491.10 L1004.7 492.28 L1005.7 493.28 L1006.7 494.06 L1007.7 494.56 L1008.7 494.78 L1009.7 494.73 L1010.7 494.45 L1011.7 494.01 L1012.7 493.47 L1013.7 492.88 L1014.7 492.28 L1015.7 491.73 L1016.7 491.27 L1017.7 490.94 L1018.7 490.78 L1019.7 490.82 L1020.7 491.07 L1021.7 491.52 L1022.7 492.15 L1023.7 492.89 L1024.7 493.71 L1025.7 494.56 L1026.7 495.39 L1027.7 496.14 L1028.7 496.77 L1029.7 497.20 L1030.7 497.40 L1031.7 497.32 L1032.7 496.96 L1033.7 496.35 L1034.7 495.52 L1035.7 494.52 L1036.7 493.42 L1037.7 492.28 L1038.7 491.21 L1039.7 490.31 L1040.7 489.66 L1041.7 489.23 L1042.7 488.83 L1043.7 488.10 L1044.7 486.69 L1045.7 484.45 L1046.7 481.51 L1047.7 478.25 L1048.7 475.10 L1049.7 472.40 L1050.7 470.31 L1051.7 468.81 L1052.7 467.78 L1053.7 467.09 L1054.7 466.63 L1055.7 466.32 L1056.7 466.14 L1057.7 466.06 L1058.7 466.07 L1059.7 466.17 L1060.7 466.37 L1061.7 466.67 L1062.7 467.08 L1063.7 467.63 L1064.7 468.37 L1065.7 469.38 L1066.7 470.74 L1067.7 472.50 L1068.7 474.63 L1069.7 477.05 L1070.7 479.61 L1071.7 482.14 L1072.7 484.44 L1073.7 486.35 L1074.7 487.73 L1075.7 488.51 L1076.7 488.68 L1077.7 488.31 L1078.7 487.48 L1079.7 486.32 L1080.7 484.92 L1081.7 483.38 L1082.7 481.80 L1083.7 480.27 L1084.7 478.90 L1085.7 477.81 L1086.7 477.11 L1087.7 476.89 L1088.7 477.19 L1089.7 477.98 L1090.7 479.18 L1091.7 480.67 L1092.7 482.31 L1093.7 483.90 L1094.7 485.27 L1095.7 486.33 L1096.7 487.05 L1097.7 487.52 L1098.7 487.88 L1099.7 488.29 L1100.7 488.88 L1101.7 489.71 L1102.7 490.77 L1103.7 491.99 L1104.7 493.27 L1105.7 494.52 L1106.7 495.65 L1107.7 496.57 L1108.7 497.19 L1109.7 497.45 L1110.7 497.32 L1111.7 496.84 L1112.7 496.06 L1113.7 495.07 L1114.7 493.96 L1115.7 492.81 L1116.7 491.73 L1117.7 490.80 L1118.7 490.09 L1119.7 489.60 L1120.7 489.30 L1121.7 489.12 L1122.7 488.96 L1123.7 488.75 L1124.7 488.47 L1125.7 488.12 L1126.7 487.73 L1127.7 487.31 L1128.7 486.87 L1129.7 486.42 L1130.7 485.97 L1131.7 485.50 L1132.7 485.01 L1133.7 484.48 L1134.7 483.93 L1135.7 483.37 L1136.7 482.80 L1137.7 482.25 L1138.7 481.75 L1139.7 481.29 L1140.7 480.91 L1141.7 480.62 L1142.7 480.45 L1143.7 480.42 L1144.7 480.54 L1145.7 480.80 L1146.7 481.20 L1147.7 481.69 L1148.7 482.24 L1149.7 482.82 L1150.7 483.37 L1151.7 483.86 L1152.7 484.24 L1153.7 484.47 L1154.7 484.51 L1155.7 484.34 L1156.7 483.94 L1157.7 483.34 L1158.7 482.58 L1159.7 481.72 L1160.7 480.83 L1161.7 479.98 L1162.7 479.24 L1163.7 478.68 L1164.7 478.36 L1165.7 478.31 L1166.7 478.53 L1167.7 478.99 L1168.7 479.65 L1169.7 480.45 L1170.7 481.35 L1171.7 482.30 L1172.7 483.23 L1173.7 484.08 L1174.7 484.79 L1175.7 485.35 L1176.7 485.81 L1177.7 486.29 L1178.7 486.92 L1179.7 487.79 L1180.7 488.91 L1181.7 490.23 L1182.7 491.65 L1183.7 493.09 L1184.7 494.45 L1185.7 495.65 L1186.7 496.62 L1187.7 497.28 L1188.7 497.59 L1189.7 497.52 L1190.7 497.11 L1191.7 496.42 L1192.7 495.53 L1193.7 494.50 L1194.7 493.42 L1195.7 492.38 L1196.7 491.50 L1197.7 490.84 L1198.7 490.35 L1199.7 489.72 L1200.7 488.56 L1201.7 486.59 L1202.7 483.83 L1203.7 480.53 L1204.7 477.01 L1205.7 473.57 L1206.7 470.44 L1207.7 467.77 L1208.7 465.65 L1209.7 464.15 L1210.7 463.36 L1211.7 463.32 L1212.7 464.02 L1213.7 465.39 L1214.7 467.32 L1215.7 469.72 L1216.7 472.42 L1217.7 475.12 L1218.7 477.43 L1219.7 479.07 L1220.7 480.04 L1221.7 480.52 L1222.7 480.83 L1223.7 481.17 L1224.7 481.66 L1225.7 482.30 L1226.7 483.04 L1227.7 483.80 L1228.7 484.54 L1229.7 485.21 L1230.7 485.77 L1231.7 486.23 L1232.7 486.58 L1233.7 486.85 L1234.7 487.04 L1235.7 487.20 L1236.7 487.31 L1237.7 487.41 L1238.7 487.50 L1239.7 487.58 L1240.7 487.67 L1241.7 487.75 L1242.7 487.83 L1243.7 487.89 L1244.7 487.95 L1245.7 488.03 L1246.7 488.13 L1247.7 488.27 L1248.7 488.46 L1249.7 488.67 L1250.7 488.91 L1251.7 489.16 L1252.7 489.41 L1253.7 489.64 L1254.7 489.85 L1255.7 489.97 L1256.7 489.95 L1257.7 489.73 L1258.7 489.30 L1259.7 488.71 L1260.7 488.03 L1261.7 487.32 L1262.7 486.64 L1263.7 486.03 L1264.7 485.54 L1265.7 485.20 L1266.7 484.96 L1267.7 484.73 L1268.7 484.42 L1269.7 483.95 L1270.7 483.30 L1271.7 482.53 L1272.7 481.70 L1273.7 480.89 L1274.7 480.17 L1275.7 479.59 L1276.7 479.20 L1277.7 479.03 L1278.7 479.07 L1279.7 479.33 L1280.7 479.75 L1281.7 480.29 L1282.7 480.90 L1283.7 481.53 L1284.7 482.15 L1285.7 482.70 L1286.7 483.16 L1287.7 483.48 L1288.7 483.62 L1289.7 483.56 L1290.7 483.31 L1291.7 482.87 L1292.7 482.29 L1293.7 481.59 L1294.7 480.82 L1295.7 480.01 L1296.7 479.19 L1297.7 478.42 L1298.7 477.76 L1299.7 477.28 L1300.7 477.07 L1301.7 477.27 L1302.7 478.06 L1303.7 479.65 L1304.7 482.05 L1305.7 484.95 L1306.7 487.72 L1307.7 489.86 L1308.7 491.25 L1309.7 492.08 L1310.7 492.58 L1311.7 492.91 L1312.7 493.16 L1313.7 493.35 L1314.7 493.51 L1315.7 493.64 L1316.7 493.75 L1317.7 493.85 L1318.7 493.94 L1319.7 494.02 L1320.7 494.10 L1321.7 494.17" transform="translate(559.0 217) scale(0.0781 0.1300) translate(-324.2 -498)" stroke="#3a9fd6" stroke-width="1.7" fill="none" vector-effect="non-scaling-stroke"/><path d="M324.2 493.40 L324.7 493.31 L325.7 493.07 L326.7 492.78 L327.7 492.46 L328.7 492.14 L329.7 491.83 L330.7 491.53 L331.7 491.25 L332.7 491.02 L333.7 490.84 L334.7 490.72 L335.7 490.66 L336.7 490.61 L337.7 490.51 L338.7 490.35 L339.7 490.13 L340.7 489.87 L341.7 489.59 L342.7 489.31 L343.7 489.05 L344.7 488.82 L345.7 488.63 L346.7 488.43 L347.7 488.15 L348.7 487.72 L349.7 487.15 L350.7 486.45 L351.7 485.67 L352.7 484.87 L353.7 484.08 L354.7 483.33 L355.7 482.67 L356.7 482.15 L357.7 481.83 L358.7 481.80 L359.7 482.12 L360.7 482.84 L361.7 483.99 L362.7 485.51 L363.7 487.35 L364.7 489.37 L365.7 491.38 L366.7 493.19 L367.7 494.56 L368.7 495.29 L369.7 495.26 L370.7 494.46 L371.7 493.03 L372.7 491.20 L373.7 489.19 L374.7 487.15 L375.7 485.12 L376.7 483.16 L377.7 481.34 L378.7 479.85 L379.7 478.83 L380.7 478.39 L381.7 478.53 L382.7 479.14 L383.7 480.06 L384.7 481.15 L385.7 482.23 L386.7 483.19 L387.7 483.98 L388.7 484.60 L389.7 485.11 L390.7 485.56 L391.7 486.03 L392.7 486.57 L393.7 487.25 L394.7 488.09 L395.7 489.10 L396.7 490.23 L397.7 491.41 L398.7 492.53 L399.7 493.53 L400.7 494.32 L401.7 494.87 L402.7 495.17 L403.7 495.24 L404.7 495.12 L405.7 494.86 L406.7 494.50 L407.7 494.08 L408.7 493.62 L409.7 493.15 L410.7 492.70 L411.7 492.31 L412.7 492.01 L413.7 491.82 L414.7 491.68 L415.7 491.55 L416.7 491.34 L417.7 491.03 L418.7 490.62 L419.7 490.14 L420.7 489.63 L421.7 489.10 L422.7 488.57 L423.7 488.07 L424.7 487.62 L425.7 487.23 L426.7 486.83 L427.7 486.31 L428.7 485.55 L429.7 484.52 L430.7 483.31 L431.7 482.03 L432.7 480.83 L433.7 479.83 L434.7 479.13 L435.7 478.80 L436.7 478.88 L437.7 479.34 L438.7 480.10 L439.7 481.09 L440.7 482.21 L441.7 483.40 L442.7 484.58 L443.7 485.67 L444.7 486.61 L445.7 487.38 L446.7 487.98 L447.7 488.49 L448.7 488.99 L449.7 489.54 L450.7 490.16 L451.7 490.84 L452.7 491.52 L453.7 492.16 L454.7 492.70 L455.7 493.11 L456.7 493.34 L457.7 493.37 L458.7 493.19 L459.7 492.79 L460.7 492.21 L461.7 491.49 L462.7 490.67 L463.7 489.79 L464.7 488.88 L465.7 487.98 L466.7 487.13 L467.7 486.37 L468.7 485.79 L469.7 485.44 L470.7 485.39 L471.7 485.70 L472.7 486.37 L473.7 487.36 L474.7 488.57 L475.7 489.95 L476.7 491.47 L477.7 493.03 L478.7 494.49 L479.7 495.61 L480.7 496.27 L481.7 496.41 L482.7 496.09 L483.7 495.43 L484.7 494.55 L485.7 493.53 L486.7 492.44 L487.7 491.35 L488.7 490.32 L489.7 489.40 L490.7 488.64 L491.7 488.07 L492.7 487.66 L493.7 487.38 L494.7 487.13 L495.7 486.84 L496.7 486.49 L497.7 486.08 L498.7 485.61 L499.7 485.12 L500.7 484.61 L501.7 484.09 L502.7 483.59 L503.7 483.11 L504.7 482.66 L505.7 482.22 L506.7 481.72 L507.7 481.05 L508.7 480.10 L509.7 478.84 L510.7 477.34 L511.7 475.74 L512.7 474.23 L513.7 473.00 L514.7 472.17 L515.7 471.80 L516.7 471.86 L517.7 472.25 L518.7 472.87 L519.7 473.62 L520.7 474.40 L521.7 475.11 L522.7 475.70 L523.7 476.16 L524.7 476.53 L525.7 476.90 L526.7 477.37 L527.7 478.05 L528.7 478.97 L529.7 480.12 L530.7 481.46 L531.7 482.89 L532.7 484.33 L533.7 485.68 L534.7 486.87 L535.7 487.84 L536.7 488.54 L537.7 488.95 L538.7 489.09 L539.7 489.01 L540.7 488.76 L541.7 488.40 L542.7 488.00 L543.7 487.61 L544.7 487.29 L545.7 487.07 L546.7 486.98 L547.7 487.03 L548.7 487.21 L549.7 487.48 L550.7 487.82 L551.7 488.21 L552.7 488.64 L553.7 489.10 L554.7 489.57 L555.7 490.04 L556.7 490.50 L557.7 490.91 L558.7 491.26 L559.7 491.53 L560.7 491.76 L561.7 492.01 L562.7 492.36 L563.7 492.83 L564.7 493.38 L565.7 493.95 L566.7 494.47 L567.7 494.90 L568.7 495.15 L569.7 495.17 L570.7 494.86 L571.7 494.16 L572.7 493.03 L573.7 491.50 L574.7 489.66 L575.7 487.63 L576.7 485.56 L577.7 483.61 L578.7 481.95 L579.7 480.67 L580.7 479.81 L581.7 479.32 L582.7 479.05 L583.7 478.84 L584.7 478.57 L585.7 478.18 L586.7 477.66 L587.7 477.07 L588.7 476.45 L589.7 475.85 L590.7 475.30 L591.7 474.85 L592.7 474.57 L593.7 474.51 L594.7 474.74 L595.7 475.28 L596.7 476.16 L597.7 477.35 L598.7 478.81 L599.7 480.46 L600.7 482.21 L601.7 483.89 L602.7 485.37 L603.7 486.52 L604.7 487.30 L605.7 487.81 L606.7 488.20 L607.7 488.64 L608.7 489.21 L609.7 489.92 L610.7 490.72 L611.7 491.51 L612.7 492.22 L613.7 492.78 L614.7 493.14 L615.7 493.27 L616.7 493.15 L617.7 492.80 L618.7 492.28 L619.7 491.63 L620.7 490.90 L621.7 490.12 L622.7 489.32 L623.7 488.56 L624.7 487.88 L625.7 487.33 L626.7 486.98 L627.7 486.89 L628.7 487.13 L629.7 487.73 L630.7 488.66 L631.7 489.89 L632.7 491.36 L633.7 492.94 L634.7 494.49 L635.7 495.83 L636.7 496.84 L637.7 497.41 L638.7 497.51 L639.7 497.16 L640.7 496.44 L641.7 495.43 L642.7 494.23 L643.7 492.92 L644.7 491.58 L645.7 490.26 L646.7 489.04 L647.7 488.00 L648.7 487.17 L649.7 486.58 L650.7 486.20 L651.7 485.95 L652.7 485.74 L653.7 485.52 L654.7 485.23 L655.7 484.88 L656.7 484.49 L657.7 484.09 L658.7 483.71 L659.7 483.37 L660.7 483.05 L661.7 482.72 L662.7 482.28 L663.7 481.66 L664.7 480.82 L665.7 479.78 L666.7 478.60 L667.7 477.35 L668.7 476.12 L669.7 475.00 L670.7 474.08 L671.7 473.50 L672.7 473.38 L673.7 473.92 L674.7 475.25 L675.7 477.46 L676.7 480.45 L677.7 483.89 L678.7 487.26 L679.7 490.05 L680.7 492.00 L681.7 493.09 L682.7 493.47 L683.7 493.31 L684.7 492.74 L685.7 491.84 L686.7 490.64 L687.7 489.18 L688.7 487.51 L689.7 485.71 L690.7 483.91 L691.7 482.21 L692.7 480.78 L693.7 479.78 L694.7 479.35 L695.7 479.57 L696.7 480.36 L697.7 481.51 L698.7 482.83 L699.7 484.16 L700.7 485.45 L701.7 486.64 L702.7 487.65 L703.7 488.41 L704.7 488.95 L705.7 489.38 L706.7 489.86 L707.7 490.53 L708.7 491.42 L709.7 492.53 L710.7 493.76 L711.7 494.99 L712.7 496.11 L713.7 497.00 L714.7 497.54 L715.7 497.65 L716.7 497.23 L717.7 496.27 L718.7 494.83 L719.7 492.99 L720.7 490.90 L721.7 488.67 L722.7 486.46 L723.7 484.43 L724.7 482.74 L725.7 481.53 L726.7 480.82 L727.7 480.51 L728.7 480.42 L729.7 480.37 L730.7 480.30 L731.7 480.20 L732.7 480.08 L733.7 479.97 L734.7 479.84 L735.7 479.70 L736.7 479.53 L737.7 479.31 L738.7 479.00 L739.7 478.53 L740.7 477.73 L741.7 476.40 L742.7 474.37 L743.7 471.65 L744.7 468.38 L745.7 464.79 L746.7 461.09 L747.7 457.52 L748.7 454.37 L749.7 451.99 L750.7 450.80 L751.7 451.13 L752.7 453.08 L753.7 456.52 L754.7 461.07 L755.7 466.18 L756.7 471.16 L757.7 475.42 L758.7 478.66 L759.7 480.92 L760.7 482.40 L761.7 483.32 L762.7 483.90 L763.7 484.25 L764.7 484.45 L765.7 484.56 L766.7 484.59 L767.7 484.59 L768.7 484.56 L769.7 484.53 L770.7 484.51 L771.7 484.53 L772.7 484.64 L773.7 484.87 L774.7 485.26 L775.7 485.86 L776.7 486.67 L777.7 487.65 L778.7 488.70 L779.7 489.71 L780.7 490.58 L781.7 491.28 L782.7 491.86 L783.7 492.35 L784.7 492.80 L785.7 493.22 L786.7 493.61 L787.7 493.96 L788.7 494.27 L789.7 494.52 L790.7 494.70 L791.7 494.79 L792.7 494.78 L793.7 494.60 L794.7 494.21 L795.7 493.53 L796.7 492.49 L797.7 491.08 L798.7 489.36 L799.7 487.45 L800.7 485.53 L801.7 483.76 L802.7 482.25 L803.7 481.04 L804.7 480.10 L805.7 479.35 L806.7 478.74 L807.7 478.22 L808.7 477.77 L809.7 477.39 L810.7 477.06 L811.7 476.78 L812.7 476.54 L813.7 476.36 L814.7 476.22 L815.7 476.13 L816.7 476.11 L817.7 476.18 L818.7 476.36 L819.7 476.65 L820.7 477.04 L821.7 477.51 L822.7 478.04 L823.7 478.58 L824.7 479.11 L825.7 479.57 L826.7 479.94 L827.7 480.17 L828.7 480.22 L829.7 480.06 L830.7 479.69 L831.7 479.13 L832.7 478.41 L833.7 477.61 L834.7 476.78 L835.7 476.01 L836.7 475.37 L837.7 474.95 L838.7 474.83 L839.7 475.10 L840.7 475.85 L841.7 477.08 L842.7 478.76 L843.7 480.79 L844.7 482.98 L845.7 485.17 L846.7 487.18 L847.7 488.87 L848.7 490.16 L849.7 491.02 L850.7 491.49 L851.7 491.63 L852.7 491.53 L853.7 491.26 L854.7 490.86 L855.7 490.38 L856.7 489.87 L857.7 489.35 L858.7 488.87 L859.7 488.46 L860.7 488.17 L861.7 488.03 L862.7 488.10 L863.7 488.38 L864.7 488.87 L865.7 489.56 L866.7 490.40 L867.7 491.34 L868.7 492.32 L869.7 493.28 L870.7 494.15 L871.7 494.84 L872.7 495.28 L873.7 495.37 L874.7 495.09 L875.7 494.41 L876.7 493.37 L877.7 492.02 L878.7 490.47 L879.7 488.85 L880.7 487.36 L881.7 486.22 L882.7 485.53 L883.7 484.90 L884.7 483.36 L885.7 479.52 L886.7 472.30 L887.7 461.53 L888.7 448.11 L889.7 433.69 L890.7 419.94 L891.7 407.98 L892.7 398.22 L893.7 390.65 L894.7 385.17 L895.7 381.84 L896.7 380.81 L897.7 382.14 L898.7 385.78 L899.7 391.66 L900.7 399.86 L901.7 410.59 L902.7 423.61 L903.7 437.49 L904.7 449.97 L905.7 459.31 L906.7 465.20 L907.7 468.37 L908.7 469.78 L909.7 470.19 L910.7 470.02 L911.7 469.54 L912.7 468.88 L913.7 468.15 L914.7 467.45 L915.7 466.89 L916.7 466.58 L917.7 466.66 L918.7 467.25 L919.7 468.43 L920.7 470.20 L921.7 472.50 L922.7 475.18 L923.7 478.05 L924.7 480.88 L925.7 483.46 L926.7 485.66 L927.7 487.44 L928.7 488.85 L929.7 489.97 L930.7 490.87 L931.7 491.62 L932.7 492.26 L933.7 492.81 L934.7 493.29 L935.7 493.73 L936.7 494.14 L937.7 494.54 L938.7 494.93 L939.7 495.32 L940.7 495.71 L941.7 496.08 L942.7 496.44 L943.7 496.78 L944.7 497.10 L945.7 497.38 L946.7 497.63 L947.7 497.85 L948.7 498.01 L949.7 498.11 L950.7 498.15 L951.7 498.08 L952.7 497.90 L953.7 497.56 L954.7 497.05 L955.7 496.38 L956.7 495.56 L957.7 494.62 L958.7 493.62 L959.7 492.63 L960.7 491.74 L961.7 491.01 L962.7 490.43 L963.7 489.90 L964.7 489.22 L965.7 488.22 L966.7 486.86 L967.7 485.21 L968.7 483.38 L969.7 481.49 L970.7 479.67 L971.7 478.03 L972.7 476.69 L973.7 475.68 L974.7 474.86 L975.7 473.89 L976.7 472.38 L977.7 470.05 L978.7 466.88 L979.7 463.12 L980.7 459.10 L981.7 455.13 L982.7 451.38 L983.7 447.99 L984.7 445.19 L985.7 443.25 L986.7 442.46 L987.7 443.01 L988.7 444.99 L989.7 448.39 L990.7 453.13 L991.7 458.97 L992.7 465.45 L993.7 471.88 L994.7 477.50 L995.7 481.74 L996.7 484.39 L997.7 485.74 L998.7 486.37 L999.7 486.88 L1000.7 487.61 L1001.7 488.63 L1002.7 489.84 L1003.7 491.10 L1004.7 492.28 L1005.7 493.28 L1006.7 494.06 L1007.7 494.56 L1008.7 494.78 L1009.7 494.73 L1010.7 494.45 L1011.7 494.01 L1012.7 493.47 L1013.7 492.88 L1014.7 492.28 L1015.7 491.73 L1016.7 491.27 L1017.7 490.94 L1018.7 490.78 L1019.7 490.82 L1020.7 491.07 L1021.7 491.52 L1022.7 492.15 L1023.7 492.89 L1024.7 493.71 L1025.7 494.56 L1026.7 495.39 L1027.7 496.14 L1028.7 496.77 L1029.7 497.20 L1030.7 497.40 L1031.7 497.32 L1032.7 496.96 L1033.7 496.35 L1034.7 495.52 L1035.7 494.52 L1036.7 493.42 L1037.7 492.28 L1038.7 491.21 L1039.7 490.31 L1040.7 489.66 L1041.7 489.23 L1042.7 488.83 L1043.7 488.10 L1044.7 486.69 L1045.7 484.45 L1046.7 481.51 L1047.7 478.25 L1048.7 475.10 L1049.7 472.40 L1050.7 470.31 L1051.7 468.81 L1052.7 467.78 L1053.7 467.09 L1054.7 466.63 L1055.7 466.32 L1056.7 466.14 L1057.7 466.06 L1058.7 466.07 L1059.7 466.17 L1060.7 466.37 L1061.7 466.67 L1062.7 467.08 L1063.7 467.63 L1064.7 468.37 L1065.7 469.38 L1066.7 470.74 L1067.7 472.50 L1068.7 474.63 L1069.7 477.05 L1070.7 479.61 L1071.7 482.14 L1072.7 484.44 L1073.7 486.35 L1074.7 487.73 L1075.7 488.51 L1076.7 488.68 L1077.7 488.31 L1078.7 487.48 L1079.7 486.32 L1080.7 484.92 L1081.7 483.38 L1082.7 481.80 L1083.7 480.27 L1084.7 478.90 L1085.7 477.81 L1086.7 477.11 L1087.7 476.89 L1088.7 477.19 L1089.7 477.98 L1090.7 479.18 L1091.7 480.67 L1092.7 482.31 L1093.7 483.90 L1094.7 485.27 L1095.7 486.33 L1096.7 487.05 L1097.7 487.52 L1098.7 487.88 L1099.7 488.29 L1100.7 488.88 L1101.7 489.71 L1102.7 490.77 L1103.7 491.99 L1104.7 493.27 L1105.7 494.52 L1106.7 495.65 L1107.7 496.57 L1108.7 497.19 L1109.7 497.45 L1110.7 497.32 L1111.7 496.84 L1112.7 496.06 L1113.7 495.07 L1114.7 493.96 L1115.7 492.81 L1116.7 491.73 L1117.7 490.80 L1118.7 490.09 L1119.7 489.60 L1120.7 489.30 L1121.7 489.12 L1122.7 488.96 L1123.7 488.75 L1124.7 488.47 L1125.7 488.12 L1126.7 487.73 L1127.7 487.31 L1128.7 486.87 L1129.7 486.42 L1130.7 485.97 L1131.7 485.50 L1132.7 485.01 L1133.7 484.48 L1134.7 483.93 L1135.7 483.37 L1136.7 482.80 L1137.7 482.25 L1138.7 481.75 L1139.7 481.29 L1140.7 480.91 L1141.7 480.62 L1142.7 480.45 L1143.7 480.42 L1144.7 480.54 L1145.7 480.80 L1146.7 481.20 L1147.7 481.69 L1148.7 482.24 L1149.7 482.82 L1150.7 483.37 L1151.7 483.86 L1152.7 484.24 L1153.7 484.47 L1154.7 484.51 L1155.7 484.34 L1156.7 483.94 L1157.7 483.34 L1158.7 482.58 L1159.7 481.72 L1160.7 480.83 L1161.7 479.98 L1162.7 479.24 L1163.7 478.68 L1164.7 478.36 L1165.7 478.31 L1166.7 478.53 L1167.7 478.99 L1168.7 479.65 L1169.7 480.45 L1170.7 481.35 L1171.7 482.30 L1172.7 483.23 L1173.7 484.08 L1174.7 484.79 L1175.7 485.35 L1176.7 485.81 L1177.7 486.29 L1178.7 486.92 L1179.7 487.79 L1180.7 488.91 L1181.7 490.23 L1182.7 491.65 L1183.7 493.09 L1184.7 494.45 L1185.7 495.65 L1186.7 496.62 L1187.7 497.28 L1188.7 497.59 L1189.7 497.52 L1190.7 497.11 L1191.7 496.42 L1192.7 495.53 L1193.7 494.50 L1194.7 493.42 L1195.7 492.38 L1196.7 491.50 L1197.7 490.84 L1198.7 490.35 L1199.7 489.72 L1200.7 488.56 L1201.7 486.59 L1202.7 483.83 L1203.7 480.53 L1204.7 477.01 L1205.7 473.57 L1206.7 470.44 L1207.7 467.77 L1208.7 465.65 L1209.7 464.15 L1210.7 463.36 L1211.7 463.32 L1212.7 464.02 L1213.7 465.39 L1214.7 467.32 L1215.7 469.72 L1216.7 472.42 L1217.7 475.12 L1218.7 477.43 L1219.7 479.07 L1220.7 480.04 L1221.7 480.52 L1222.7 480.83 L1223.7 481.17 L1224.7 481.66 L1225.7 482.30 L1226.7 483.04 L1227.7 483.80 L1228.7 484.54 L1229.7 485.21 L1230.7 485.77 L1231.7 486.23 L1232.7 486.58 L1233.7 486.85 L1234.7 487.04 L1235.7 487.20 L1236.7 487.31 L1237.7 487.41 L1238.7 487.50 L1239.7 487.58 L1240.7 487.67 L1241.7 487.75 L1242.7 487.83 L1243.7 487.89 L1244.7 487.95 L1245.7 488.03 L1246.7 488.13 L1247.7 488.27 L1248.7 488.46 L1249.7 488.67 L1250.7 488.91 L1251.7 489.16 L1252.7 489.41 L1253.7 489.64 L1254.7 489.85 L1255.7 489.97 L1256.7 489.95 L1257.7 489.73 L1258.7 489.30 L1259.7 488.71 L1260.7 488.03 L1261.7 487.32 L1262.7 486.64 L1263.7 486.03 L1264.7 485.54 L1265.7 485.20 L1266.7 484.96 L1267.7 484.73 L1268.7 484.42 L1269.7 483.95 L1270.7 483.30 L1271.7 482.53 L1272.7 481.70 L1273.7 480.89 L1274.7 480.17 L1275.7 479.59 L1276.7 479.20 L1277.7 479.03 L1278.7 479.07 L1279.7 479.33 L1280.7 479.75 L1281.7 480.29 L1282.7 480.90 L1283.7 481.53 L1284.7 482.15 L1285.7 482.70 L1286.7 483.16 L1287.7 483.48 L1288.7 483.62 L1289.7 483.56 L1290.7 483.31 L1291.7 482.87 L1292.7 482.29 L1293.7 481.59 L1294.7 480.82 L1295.7 480.01 L1296.7 479.19 L1297.7 478.42 L1298.7 477.76 L1299.7 477.28 L1300.7 477.07 L1301.7 477.27 L1302.7 478.06 L1303.7 479.65 L1304.7 482.05 L1305.7 484.95 L1306.7 487.72 L1307.7 489.86 L1308.7 491.25 L1309.7 492.08 L1310.7 492.58 L1311.7 492.91 L1312.7 493.16 L1313.7 493.35 L1314.7 493.51 L1315.7 493.64 L1316.7 493.75 L1317.7 493.85 L1318.7 493.94 L1319.7 494.02 L1320.7 494.10 L1321.7 494.17" transform="translate(1386.0 217) scale(0.0781 0.1300) translate(-324.2 -498)" stroke="#3a9fd6" stroke-width="1.7" fill="none" vector-effect="non-scaling-stroke"/><path d="M324.2 493.40 L324.7 493.31 L325.7 493.07 L326.7 492.78 L327.7 492.46 L328.7 492.14 L329.7 491.83 L330.7 491.53 L331.7 491.25 L332.7 491.02 L333.7 490.84 L334.7 490.72 L335.7 490.66 L336.7 490.61 L337.7 490.51 L338.7 490.35 L339.7 490.13 L340.7 489.87 L341.7 489.59 L342.7 489.31 L343.7 489.05 L344.7 488.82 L345.7 488.63 L346.7 488.43 L347.7 488.15 L348.7 487.72 L349.7 487.15 L350.7 486.45 L351.7 485.67 L352.7 484.87 L353.7 484.08 L354.7 483.33 L355.7 482.67 L356.7 482.15 L357.7 481.83 L358.7 481.80 L359.7 482.12 L360.7 482.84 L361.7 483.99 L362.7 485.51 L363.7 487.35 L364.7 489.37 L365.7 491.38 L366.7 493.19 L367.7 494.56 L368.7 495.29 L369.7 495.26 L370.7 494.46 L371.7 493.03 L372.7 491.20 L373.7 489.19 L374.7 487.15 L375.7 485.12 L376.7 483.16 L377.7 481.34 L378.7 479.85 L379.7 478.83 L380.7 478.39 L381.7 478.53 L382.7 479.14 L383.7 480.06 L384.7 481.15 L385.7 482.23 L386.7 483.19 L387.7 483.98 L388.7 484.60 L389.7 485.11 L390.7 485.56 L391.7 486.03 L392.7 486.57 L393.7 487.25 L394.7 488.09 L395.7 489.10 L396.7 490.23 L397.7 491.41 L398.7 492.53 L399.7 493.53 L400.7 494.32 L401.7 494.87 L402.7 495.17 L403.7 495.24 L404.7 495.12 L405.7 494.86 L406.7 494.50 L407.7 494.08 L408.7 493.62 L409.7 493.15 L410.7 492.70 L411.7 492.31 L412.7 492.01 L413.7 491.82 L414.7 491.68 L415.7 491.55 L416.7 491.34 L417.7 491.03 L418.7 490.62 L419.7 490.14 L420.7 489.63 L421.7 489.10 L422.7 488.57 L423.7 488.07 L424.7 487.62 L425.7 487.23 L426.7 486.83 L427.7 486.31 L428.7 485.55 L429.7 484.52 L430.7 483.31 L431.7 482.03 L432.7 480.83 L433.7 479.83 L434.7 479.13 L435.7 478.80 L436.7 478.88 L437.7 479.34 L438.7 480.10 L439.7 481.09 L440.7 482.21 L441.7 483.40 L442.7 484.58 L443.7 485.67 L444.7 486.61 L445.7 487.38 L446.7 487.98 L447.7 488.49 L448.7 488.99 L449.7 489.54 L450.7 490.16 L451.7 490.84 L452.7 491.52 L453.7 492.16 L454.7 492.70 L455.7 493.11 L456.7 493.34 L457.7 493.37 L458.7 493.19 L459.7 492.79 L460.7 492.21 L461.7 491.49 L462.7 490.67 L463.7 489.79 L464.7 488.88 L465.7 487.98 L466.7 487.13 L467.7 486.37 L468.7 485.79 L469.7 485.44 L470.7 485.39 L471.7 485.70 L472.7 486.37 L473.7 487.36 L474.7 488.57 L475.7 489.95 L476.7 491.47 L477.7 493.03 L478.7 494.49 L479.7 495.61 L480.7 496.27 L481.7 496.41 L482.7 496.09 L483.7 495.43 L484.7 494.55 L485.7 493.53 L486.7 492.44 L487.7 491.35 L488.7 490.32 L489.7 489.40 L490.7 488.64 L491.7 488.07 L492.7 487.66 L493.7 487.38 L494.7 487.13 L495.7 486.84 L496.7 486.49 L497.7 486.08 L498.7 485.61 L499.7 485.12 L500.7 484.61 L501.7 484.09 L502.7 483.59 L503.7 483.11 L504.7 482.66 L505.7 482.22 L506.7 481.72 L507.7 481.05 L508.7 480.10 L509.7 478.84 L510.7 477.34 L511.7 475.74 L512.7 474.23 L513.7 473.00 L514.7 472.17 L515.7 471.80 L516.7 471.86 L517.7 472.25 L518.7 472.87 L519.7 473.62 L520.7 474.40 L521.7 475.11 L522.7 475.70 L523.7 476.16 L524.7 476.53 L525.7 476.90 L526.7 477.37 L527.7 478.05 L528.7 478.97 L529.7 480.12 L530.7 481.46 L531.7 482.89 L532.7 484.33 L533.7 485.68 L534.7 486.87 L535.7 487.84 L536.7 488.54 L537.7 488.95 L538.7 489.09 L539.7 489.01 L540.7 488.76 L541.7 488.40 L542.7 488.00 L543.7 487.61 L544.7 487.29 L545.7 487.07 L546.7 486.98 L547.7 487.03 L548.7 487.21 L549.7 487.48 L550.7 487.82 L551.7 488.21 L552.7 488.64 L553.7 489.10 L554.7 489.57 L555.7 490.04 L556.7 490.50 L557.7 490.91 L558.7 491.26 L559.7 491.53 L560.7 491.76 L561.7 492.01 L562.7 492.36 L563.7 492.83 L564.7 493.38 L565.7 493.95 L566.7 494.47 L567.7 494.90 L568.7 495.15 L569.7 495.17 L570.7 494.86 L571.7 494.16 L572.7 493.03 L573.7 491.50 L574.7 489.66 L575.7 487.63 L576.7 485.56 L577.7 483.61 L578.7 481.95 L579.7 480.67 L580.7 479.81 L581.7 479.32 L582.7 479.05 L583.7 478.84 L584.7 478.57 L585.7 478.18 L586.7 477.66 L587.7 477.07 L588.7 476.45 L589.7 475.85 L590.7 475.30 L591.7 474.85 L592.7 474.57 L593.7 474.51 L594.7 474.74 L595.7 475.28 L596.7 476.16 L597.7 477.35 L598.7 478.81 L599.7 480.46 L600.7 482.21 L601.7 483.89 L602.7 485.37 L603.7 486.52 L604.7 487.30 L605.7 487.81 L606.7 488.20 L607.7 488.64 L608.7 489.21 L609.7 489.92 L610.7 490.72 L611.7 491.51 L612.7 492.22 L613.7 492.78 L614.7 493.14 L615.7 493.27 L616.7 493.15 L617.7 492.80 L618.7 492.28 L619.7 491.63 L620.7 490.90 L621.7 490.12 L622.7 489.32 L623.7 488.56 L624.7 487.88 L625.7 487.33 L626.7 486.98 L627.7 486.89 L628.7 487.13 L629.7 487.73 L630.7 488.66 L631.7 489.89 L632.7 491.36 L633.7 492.94 L634.7 494.49 L635.7 495.83 L636.7 496.84 L637.7 497.41 L638.7 497.51 L639.7 497.16 L640.7 496.44 L641.7 495.43 L642.7 494.23 L643.7 492.92 L644.7 491.58 L645.7 490.26 L646.7 489.04 L647.7 488.00 L648.7 487.17 L649.7 486.58 L650.7 486.20 L651.7 485.95 L652.7 485.74 L653.7 485.52 L654.7 485.23 L655.7 484.88 L656.7 484.49 L657.7 484.09 L658.7 483.71 L659.7 483.37 L660.7 483.05 L661.7 482.72 L662.7 482.28 L663.7 481.66 L664.7 480.82 L665.7 479.78 L666.7 478.60 L667.7 477.35 L668.7 476.12 L669.7 475.00 L670.7 474.08 L671.7 473.50 L672.7 473.38 L673.7 473.92 L674.7 475.25 L675.7 477.46 L676.7 480.45 L677.7 483.89 L678.7 487.26 L679.7 490.05 L680.7 492.00 L681.7 493.09 L682.7 493.47 L683.7 493.31 L684.7 492.74 L685.7 491.84 L686.7 490.64 L687.7 489.18 L688.7 487.51 L689.7 485.71 L690.7 483.91 L691.7 482.21 L692.7 480.78 L693.7 479.78 L694.7 479.35 L695.7 479.57 L696.7 480.36 L697.7 481.51 L698.7 482.83 L699.7 484.16 L700.7 485.45 L701.7 486.64 L702.7 487.65 L703.7 488.41 L704.7 488.95 L705.7 489.38 L706.7 489.86 L707.7 490.53 L708.7 491.42 L709.7 492.53 L710.7 493.76 L711.7 494.99 L712.7 496.11 L713.7 497.00 L714.7 497.54 L715.7 497.65 L716.7 497.23 L717.7 496.27 L718.7 494.83 L719.7 492.99 L720.7 490.90 L721.7 488.67 L722.7 486.46 L723.7 484.43 L724.7 482.74 L725.7 481.53 L726.7 480.82 L727.7 480.51 L728.7 480.42 L729.7 480.37 L730.7 480.30 L731.7 480.20 L732.7 480.08 L733.7 479.97 L734.7 479.84 L735.7 479.70 L736.7 479.53 L737.7 479.31 L738.7 479.00 L739.7 478.53 L740.7 477.73 L741.7 476.40 L742.7 474.37 L743.7 471.65 L744.7 468.38 L745.7 464.79 L746.7 461.09 L747.7 457.52 L748.7 454.37 L749.7 451.99 L750.7 450.80 L751.7 451.13 L752.7 453.08 L753.7 456.52 L754.7 461.07 L755.7 466.18 L756.7 471.16 L757.7 475.42 L758.7 478.66 L759.7 480.92 L760.7 482.40 L761.7 483.32 L762.7 483.90 L763.7 484.25 L764.7 484.45 L765.7 484.56 L766.7 484.59 L767.7 484.59 L768.7 484.56 L769.7 484.53 L770.7 484.51 L771.7 484.53 L772.7 484.64 L773.7 484.87 L774.7 485.26 L775.7 485.86 L776.7 486.67 L777.7 487.65 L778.7 488.70 L779.7 489.71 L780.7 490.58 L781.7 491.28 L782.7 491.86 L783.7 492.35 L784.7 492.80 L785.7 493.22 L786.7 493.61 L787.7 493.96 L788.7 494.27 L789.7 494.52 L790.7 494.70 L791.7 494.79 L792.7 494.78 L793.7 494.60 L794.7 494.21 L795.7 493.53 L796.7 492.49 L797.7 491.08 L798.7 489.36 L799.7 487.45 L800.7 485.53 L801.7 483.76 L802.7 482.25 L803.7 481.04 L804.7 480.10 L805.7 479.35 L806.7 478.74 L807.7 478.22 L808.7 477.77 L809.7 477.39 L810.7 477.06 L811.7 476.78 L812.7 476.54 L813.7 476.36 L814.7 476.22 L815.7 476.13 L816.7 476.11 L817.7 476.18 L818.7 476.36 L819.7 476.65 L820.7 477.04 L821.7 477.51 L822.7 478.04 L823.7 478.58 L824.7 479.11 L825.7 479.57 L826.7 479.94 L827.7 480.17 L828.7 480.22 L829.7 480.06 L830.7 479.69 L831.7 479.13 L832.7 478.41 L833.7 477.61 L834.7 476.78 L835.7 476.01 L836.7 475.37 L837.7 474.95 L838.7 474.83 L839.7 475.10 L840.7 475.85 L841.7 477.08 L842.7 478.76 L843.7 480.79 L844.7 482.98 L845.7 485.17 L846.7 487.18 L847.7 488.87 L848.7 490.16 L849.7 491.02 L850.7 491.49 L851.7 491.63 L852.7 491.53 L853.7 491.26 L854.7 490.86 L855.7 490.38 L856.7 489.87 L857.7 489.35 L858.7 488.87 L859.7 488.46 L860.7 488.17 L861.7 488.03 L862.7 488.10 L863.7 488.38 L864.7 488.87 L865.7 489.56 L866.7 490.40 L867.7 491.34 L868.7 492.32 L869.7 493.28 L870.7 494.15 L871.7 494.84 L872.7 495.28 L873.7 495.37 L874.7 495.09 L875.7 494.41 L876.7 493.37 L877.7 492.02 L878.7 490.47 L879.7 488.85 L880.7 487.36 L881.7 486.22 L882.7 485.53 L883.7 484.90 L884.7 483.36 L885.7 479.52 L886.7 472.30 L887.7 461.53 L888.7 448.11 L889.7 433.69 L890.7 419.94 L891.7 407.98 L892.7 398.22 L893.7 390.65 L894.7 385.17 L895.7 381.84 L896.7 380.81 L897.7 382.14 L898.7 385.78 L899.7 391.66 L900.7 399.86 L901.7 410.59 L902.7 423.61 L903.7 437.49 L904.7 449.97 L905.7 459.31 L906.7 465.20 L907.7 468.37 L908.7 469.78 L909.7 470.19 L910.7 470.02 L911.7 469.54 L912.7 468.88 L913.7 468.15 L914.7 467.45 L915.7 466.89 L916.7 466.58 L917.7 466.66 L918.7 467.25 L919.7 468.43 L920.7 470.20 L921.7 472.50 L922.7 475.18 L923.7 478.05 L924.7 480.88 L925.7 483.46 L926.7 485.66 L927.7 487.44 L928.7 488.85 L929.7 489.97 L930.7 490.87 L931.7 491.62 L932.7 492.26 L933.7 492.81 L934.7 493.29 L935.7 493.73 L936.7 494.14 L937.7 494.54 L938.7 494.93 L939.7 495.32 L940.7 495.71 L941.7 496.08 L942.7 496.44 L943.7 496.78 L944.7 497.10 L945.7 497.38 L946.7 497.63 L947.7 497.85 L948.7 498.01 L949.7 498.11 L950.7 498.15 L951.7 498.08 L952.7 497.90 L953.7 497.56 L954.7 497.05 L955.7 496.38 L956.7 495.56 L957.7 494.62 L958.7 493.62 L959.7 492.63 L960.7 491.74 L961.7 491.01 L962.7 490.43 L963.7 489.90 L964.7 489.22 L965.7 488.22 L966.7 486.86 L967.7 485.21 L968.7 483.38 L969.7 481.49 L970.7 479.67 L971.7 478.03 L972.7 476.69 L973.7 475.68 L974.7 474.86 L975.7 473.89 L976.7 472.38 L977.7 470.05 L978.7 466.88 L979.7 463.12 L980.7 459.10 L981.7 455.13 L982.7 451.38 L983.7 447.99 L984.7 445.19 L985.7 443.25 L986.7 442.46 L987.7 443.01 L988.7 444.99 L989.7 448.39 L990.7 453.13 L991.7 458.97 L992.7 465.45 L993.7 471.88 L994.7 477.50 L995.7 481.74 L996.7 484.39 L997.7 485.74 L998.7 486.37 L999.7 486.88 L1000.7 487.61 L1001.7 488.63 L1002.7 489.84 L1003.7 491.10 L1004.7 492.28 L1005.7 493.28 L1006.7 494.06 L1007.7 494.56 L1008.7 494.78 L1009.7 494.73 L1010.7 494.45 L1011.7 494.01 L1012.7 493.47 L1013.7 492.88 L1014.7 492.28 L1015.7 491.73 L1016.7 491.27 L1017.7 490.94 L1018.7 490.78 L1019.7 490.82 L1020.7 491.07 L1021.7 491.52 L1022.7 492.15 L1023.7 492.89 L1024.7 493.71 L1025.7 494.56 L1026.7 495.39 L1027.7 496.14 L1028.7 496.77 L1029.7 497.20 L1030.7 497.40 L1031.7 497.32 L1032.7 496.96 L1033.7 496.35 L1034.7 495.52 L1035.7 494.52 L1036.7 493.42 L1037.7 492.28 L1038.7 491.21 L1039.7 490.31 L1040.7 489.66 L1041.7 489.23 L1042.7 488.83 L1043.7 488.10 L1044.7 486.69 L1045.7 484.45 L1046.7 481.51 L1047.7 478.25 L1048.7 475.10 L1049.7 472.40 L1050.7 470.31 L1051.7 468.81 L1052.7 467.78 L1053.7 467.09 L1054.7 466.63 L1055.7 466.32 L1056.7 466.14 L1057.7 466.06 L1058.7 466.07 L1059.7 466.17 L1060.7 466.37 L1061.7 466.67 L1062.7 467.08 L1063.7 467.63 L1064.7 468.37 L1065.7 469.38 L1066.7 470.74 L1067.7 472.50 L1068.7 474.63 L1069.7 477.05 L1070.7 479.61 L1071.7 482.14 L1072.7 484.44 L1073.7 486.35 L1074.7 487.73 L1075.7 488.51 L1076.7 488.68 L1077.7 488.31 L1078.7 487.48 L1079.7 486.32 L1080.7 484.92 L1081.7 483.38 L1082.7 481.80 L1083.7 480.27 L1084.7 478.90 L1085.7 477.81 L1086.7 477.11 L1087.7 476.89 L1088.7 477.19 L1089.7 477.98 L1090.7 479.18 L1091.7 480.67 L1092.7 482.31 L1093.7 483.90 L1094.7 485.27 L1095.7 486.33 L1096.7 487.05 L1097.7 487.52 L1098.7 487.88 L1099.7 488.29 L1100.7 488.88 L1101.7 489.71 L1102.7 490.77 L1103.7 491.99 L1104.7 493.27 L1105.7 494.52 L1106.7 495.65 L1107.7 496.57 L1108.7 497.19 L1109.7 497.45 L1110.7 497.32 L1111.7 496.84 L1112.7 496.06 L1113.7 495.07 L1114.7 493.96 L1115.7 492.81 L1116.7 491.73 L1117.7 490.80 L1118.7 490.09 L1119.7 489.60 L1120.7 489.30 L1121.7 489.12 L1122.7 488.96 L1123.7 488.75 L1124.7 488.47 L1125.7 488.12 L1126.7 487.73 L1127.7 487.31 L1128.7 486.87 L1129.7 486.42 L1130.7 485.97 L1131.7 485.50 L1132.7 485.01 L1133.7 484.48 L1134.7 483.93 L1135.7 483.37 L1136.7 482.80 L1137.7 482.25 L1138.7 481.75 L1139.7 481.29 L1140.7 480.91 L1141.7 480.62 L1142.7 480.45 L1143.7 480.42 L1144.7 480.54 L1145.7 480.80 L1146.7 481.20 L1147.7 481.69 L1148.7 482.24 L1149.7 482.82 L1150.7 483.37 L1151.7 483.86 L1152.7 484.24 L1153.7 484.47 L1154.7 484.51 L1155.7 484.34 L1156.7 483.94 L1157.7 483.34 L1158.7 482.58 L1159.7 481.72 L1160.7 480.83 L1161.7 479.98 L1162.7 479.24 L1163.7 478.68 L1164.7 478.36 L1165.7 478.31 L1166.7 478.53 L1167.7 478.99 L1168.7 479.65 L1169.7 480.45 L1170.7 481.35 L1171.7 482.30 L1172.7 483.23 L1173.7 484.08 L1174.7 484.79 L1175.7 485.35 L1176.7 485.81 L1177.7 486.29 L1178.7 486.92 L1179.7 487.79 L1180.7 488.91 L1181.7 490.23 L1182.7 491.65 L1183.7 493.09 L1184.7 494.45 L1185.7 495.65 L1186.7 496.62 L1187.7 497.28 L1188.7 497.59 L1189.7 497.52 L1190.7 497.11 L1191.7 496.42 L1192.7 495.53 L1193.7 494.50 L1194.7 493.42 L1195.7 492.38 L1196.7 491.50 L1197.7 490.84 L1198.7 490.35 L1199.7 489.72 L1200.7 488.56 L1201.7 486.59 L1202.7 483.83 L1203.7 480.53 L1204.7 477.01 L1205.7 473.57 L1206.7 470.44 L1207.7 467.77 L1208.7 465.65 L1209.7 464.15 L1210.7 463.36 L1211.7 463.32 L1212.7 464.02 L1213.7 465.39 L1214.7 467.32 L1215.7 469.72 L1216.7 472.42 L1217.7 475.12 L1218.7 477.43 L1219.7 479.07 L1220.7 480.04 L1221.7 480.52 L1222.7 480.83 L1223.7 481.17 L1224.7 481.66 L1225.7 482.30 L1226.7 483.04 L1227.7 483.80 L1228.7 484.54 L1229.7 485.21 L1230.7 485.77 L1231.7 486.23 L1232.7 486.58 L1233.7 486.85 L1234.7 487.04 L1235.7 487.20 L1236.7 487.31 L1237.7 487.41 L1238.7 487.50 L1239.7 487.58 L1240.7 487.67 L1241.7 487.75 L1242.7 487.83 L1243.7 487.89 L1244.7 487.95 L1245.7 488.03 L1246.7 488.13 L1247.7 488.27 L1248.7 488.46 L1249.7 488.67 L1250.7 488.91 L1251.7 489.16 L1252.7 489.41 L1253.7 489.64 L1254.7 489.85 L1255.7 489.97 L1256.7 489.95 L1257.7 489.73 L1258.7 489.30 L1259.7 488.71 L1260.7 488.03 L1261.7 487.32 L1262.7 486.64 L1263.7 486.03 L1264.7 485.54 L1265.7 485.20 L1266.7 484.96 L1267.7 484.73 L1268.7 484.42 L1269.7 483.95 L1270.7 483.30 L1271.7 482.53 L1272.7 481.70 L1273.7 480.89 L1274.7 480.17 L1275.7 479.59 L1276.7 479.20 L1277.7 479.03 L1278.7 479.07 L1279.7 479.33 L1280.7 479.75 L1281.7 480.29 L1282.7 480.90 L1283.7 481.53 L1284.7 482.15 L1285.7 482.70 L1286.7 483.16 L1287.7 483.48 L1288.7 483.62 L1289.7 483.56 L1290.7 483.31 L1291.7 482.87 L1292.7 482.29 L1293.7 481.59 L1294.7 480.82 L1295.7 480.01 L1296.7 479.19 L1297.7 478.42 L1298.7 477.76 L1299.7 477.28 L1300.7 477.07 L1301.7 477.27 L1302.7 478.06 L1303.7 479.65 L1304.7 482.05 L1305.7 484.95 L1306.7 487.72 L1307.7 489.86 L1308.7 491.25 L1309.7 492.08 L1310.7 492.58 L1311.7 492.91 L1312.7 493.16 L1313.7 493.35 L1314.7 493.51 L1315.7 493.64 L1316.7 493.75 L1317.7 493.85 L1318.7 493.94 L1319.7 494.02 L1320.7 494.10 L1321.7 494.17" transform="translate(1799.0 217) scale(0.0781 0.1300) translate(-324.2 -498)" stroke="#3a9fd6" stroke-width="1.7" fill="none" vector-effect="non-scaling-stroke"/><path d="M972.0 201.6 L973.7 214.7 L975.8 213.8 L978.1 209.6 L981.0 215.2 L983.8 207.2 L986.6 217.5 L989.9 212.8 L991.3 217.5 L995.0 209.0 L996.9 217.0 L1000.2 208.6 L1002.6 217.0 L1006.3 210.0 L1009.1 217.5 L1011.9 210.5 L1013.8 217.0 L1014.8 202.0 L1016.6 215.2 L1019.0 207.2 L1020.4 217.5 L1022.3 211.4 L1024.2 209.0 L1026.0 217.0 L1027.9 209.0 L1029.8 215.7 L1032.6 217.5 L1034.5 209.6 L1038.2 217.0 L1041.1 210.5 L1044.3 217.5 L1045.8 207.2 L1049.0 212.4" stroke="#3a9fd6" stroke-width="1.8" fill="none" stroke-linejoin="round"/></svg>

<!-- total sales over time -->
<div class="card" style="left:256px;top:249px;width:1086px;height:389px"></div>
<div class="ttl" style="left:272px;top:266px">Total sales over time</div>
<div class="t" style="left:272px;top:293px;font-size:20px;-webkit-text-stroke:0.3px currentColor;color:#303030">$49,136.81</div>
<div class="t g" style="left:378px;top:300px;font-size:11.5px;font-weight:bold;letter-spacing:0.4px"><svg width="7" height="7" viewBox="0 0 7 7" style="display:inline-block;vertical-align:0px;margin-right:4px"><path d="M1.1 5.9 L4.2 2.8" stroke="currentColor" stroke-width="1.9"/><path d="M2.0 0.6 H6.4 V5.0 Z" fill="currentColor"/></svg>503%</div>
<svg class="abs" style="left:0;top:0" width="1919" height="951">
  <defs><linearGradient id="ga" gradientUnits="userSpaceOnUse" x1="0" y1="380" x2="0" y2="551"><stop offset="0" stop-color="#3a9fd6" stop-opacity="0.07"/><stop offset="0.69" stop-color="#3a9fd6" stop-opacity="0.025"/><stop offset="1" stop-color="#3a9fd6" stop-opacity="0.0"/></linearGradient></defs>
  <g stroke="#ebebeb" stroke-width="1">
    <path d="M324 337.5 H1323 M324 391 H1323 M324 444.5 H1323 M324 498 H1323 M324 551.5 H1323"/>
  </g>
  <path d="M324.2 493.40 L324.7 493.31 L325.7 493.07 L326.7 492.78 L327.7 492.46 L328.7 492.14 L329.7 491.83 L330.7 491.53 L331.7 491.25 L332.7 491.02 L333.7 490.84 L334.7 490.72 L335.7 490.66 L336.7 490.61 L337.7 490.51 L338.7 490.35 L339.7 490.13 L340.7 489.87 L341.7 489.59 L342.7 489.31 L343.7 489.05 L344.7 488.82 L345.7 488.63 L346.7 488.43 L347.7 488.15 L348.7 487.72 L349.7 487.15 L350.7 486.45 L351.7 485.67 L352.7 484.87 L353.7 484.08 L354.7 483.33 L355.7 482.67 L356.7 482.15 L357.7 481.83 L358.7 481.80 L359.7 482.12 L360.7 482.84 L361.7 483.99 L362.7 485.51 L363.7 487.35 L364.7 489.37 L365.7 491.38 L366.7 493.19 L367.7 494.56 L368.7 495.29 L369.7 495.26 L370.7 494.46 L371.7 493.03 L372.7 491.20 L373.7 489.19 L374.7 487.15 L375.7 485.12 L376.7 483.16 L377.7 481.34 L378.7 479.85 L379.7 478.83 L380.7 478.39 L381.7 478.53 L382.7 479.14 L383.7 480.06 L384.7 481.15 L385.7 482.23 L386.7 483.19 L387.7 483.98 L388.7 484.60 L389.7 485.11 L390.7 485.56 L391.7 486.03 L392.7 486.57 L393.7 487.25 L394.7 488.09 L395.7 489.10 L396.7 490.23 L397.7 491.41 L398.7 492.53 L399.7 493.53 L400.7 494.32 L401.7 494.87 L402.7 495.17 L403.7 495.24 L404.7 495.12 L405.7 494.86 L406.7 494.50 L407.7 494.08 L408.7 493.62 L409.7 493.15 L410.7 492.70 L411.7 492.31 L412.7 492.01 L413.7 491.82 L414.7 491.68 L415.7 491.55 L416.7 491.34 L417.7 491.03 L418.7 490.62 L419.7 490.14 L420.7 489.63 L421.7 489.10 L422.7 488.57 L423.7 488.07 L424.7 487.62 L425.7 487.23 L426.7 486.83 L427.7 486.31 L428.7 485.55 L429.7 484.52 L430.7 483.31 L431.7 482.03 L432.7 480.83 L433.7 479.83 L434.7 479.13 L435.7 478.80 L436.7 478.88 L437.7 479.34 L438.7 480.10 L439.7 481.09 L440.7 482.21 L441.7 483.40 L442.7 484.58 L443.7 485.67 L444.7 486.61 L445.7 487.38 L446.7 487.98 L447.7 488.49 L448.7 488.99 L449.7 489.54 L450.7 490.16 L451.7 490.84 L452.7 491.52 L453.7 492.16 L454.7 492.70 L455.7 493.11 L456.7 493.34 L457.7 493.37 L458.7 493.19 L459.7 492.79 L460.7 492.21 L461.7 491.49 L462.7 490.67 L463.7 489.79 L464.7 488.88 L465.7 487.98 L466.7 487.13 L467.7 486.37 L468.7 485.79 L469.7 485.44 L470.7 485.39 L471.7 485.70 L472.7 486.37 L473.7 487.36 L474.7 488.57 L475.7 489.95 L476.7 491.47 L477.7 493.03 L478.7 494.49 L479.7 495.61 L480.7 496.27 L481.7 496.41 L482.7 496.09 L483.7 495.43 L484.7 494.55 L485.7 493.53 L486.7 492.44 L487.7 491.35 L488.7 490.32 L489.7 489.40 L490.7 488.64 L491.7 488.07 L492.7 487.66 L493.7 487.38 L494.7 487.13 L495.7 486.84 L496.7 486.49 L497.7 486.08 L498.7 485.61 L499.7 485.12 L500.7 484.61 L501.7 484.09 L502.7 483.59 L503.7 483.11 L504.7 482.66 L505.7 482.22 L506.7 481.72 L507.7 481.05 L508.7 480.10 L509.7 478.84 L510.7 477.34 L511.7 475.74 L512.7 474.23 L513.7 473.00 L514.7 472.17 L515.7 471.80 L516.7 471.86 L517.7 472.25 L518.7 472.87 L519.7 473.62 L520.7 474.40 L521.7 475.11 L522.7 475.70 L523.7 476.16 L524.7 476.53 L525.7 476.90 L526.7 477.37 L527.7 478.05 L528.7 478.97 L529.7 480.12 L530.7 481.46 L531.7 482.89 L532.7 484.33 L533.7 485.68 L534.7 486.87 L535.7 487.84 L536.7 488.54 L537.7 488.95 L538.7 489.09 L539.7 489.01 L540.7 488.76 L541.7 488.40 L542.7 488.00 L543.7 487.61 L544.7 487.29 L545.7 487.07 L546.7 486.98 L547.7 487.03 L548.7 487.21 L549.7 487.48 L550.7 487.82 L551.7 488.21 L552.7 488.64 L553.7 489.10 L554.7 489.57 L555.7 490.04 L556.7 490.50 L557.7 490.91 L558.7 491.26 L559.7 491.53 L560.7 491.76 L561.7 492.01 L562.7 492.36 L563.7 492.83 L564.7 493.38 L565.7 493.95 L566.7 494.47 L567.7 494.90 L568.7 495.15 L569.7 495.17 L570.7 494.86 L571.7 494.16 L572.7 493.03 L573.7 491.50 L574.7 489.66 L575.7 487.63 L576.7 485.56 L577.7 483.61 L578.7 481.95 L579.7 480.67 L580.7 479.81 L581.7 479.32 L582.7 479.05 L583.7 478.84 L584.7 478.57 L585.7 478.18 L586.7 477.66 L587.7 477.07 L588.7 476.45 L589.7 475.85 L590.7 475.30 L591.7 474.85 L592.7 474.57 L593.7 474.51 L594.7 474.74 L595.7 475.28 L596.7 476.16 L597.7 477.35 L598.7 478.81 L599.7 480.46 L600.7 482.21 L601.7 483.89 L602.7 485.37 L603.7 486.52 L604.7 487.30 L605.7 487.81 L606.7 488.20 L607.7 488.64 L608.7 489.21 L609.7 489.92 L610.7 490.72 L611.7 491.51 L612.7 492.22 L613.7 492.78 L614.7 493.14 L615.7 493.27 L616.7 493.15 L617.7 492.80 L618.7 492.28 L619.7 491.63 L620.7 490.90 L621.7 490.12 L622.7 489.32 L623.7 488.56 L624.7 487.88 L625.7 487.33 L626.7 486.98 L627.7 486.89 L628.7 487.13 L629.7 487.73 L630.7 488.66 L631.7 489.89 L632.7 491.36 L633.7 492.94 L634.7 494.49 L635.7 495.83 L636.7 496.84 L637.7 497.41 L638.7 497.51 L639.7 497.16 L640.7 496.44 L641.7 495.43 L642.7 494.23 L643.7 492.92 L644.7 491.58 L645.7 490.26 L646.7 489.04 L647.7 488.00 L648.7 487.17 L649.7 486.58 L650.7 486.20 L651.7 485.95 L652.7 485.74 L653.7 485.52 L654.7 485.23 L655.7 484.88 L656.7 484.49 L657.7 484.09 L658.7 483.71 L659.7 483.37 L660.7 483.05 L661.7 482.72 L662.7 482.28 L663.7 481.66 L664.7 480.82 L665.7 479.78 L666.7 478.60 L667.7 477.35 L668.7 476.12 L669.7 475.00 L670.7 474.08 L671.7 473.50 L672.7 473.38 L673.7 473.92 L674.7 475.25 L675.7 477.46 L676.7 480.45 L677.7 483.89 L678.7 487.26 L679.7 490.05 L680.7 492.00 L681.7 493.09 L682.7 493.47 L683.7 493.31 L684.7 492.74 L685.7 491.84 L686.7 490.64 L687.7 489.18 L688.7 487.51 L689.7 485.71 L690.7 483.91 L691.7 482.21 L692.7 480.78 L693.7 479.78 L694.7 479.35 L695.7 479.57 L696.7 480.36 L697.7 481.51 L698.7 482.83 L699.7 484.16 L700.7 485.45 L701.7 486.64 L702.7 487.65 L703.7 488.41 L704.7 488.95 L705.7 489.38 L706.7 489.86 L707.7 490.53 L708.7 491.42 L709.7 492.53 L710.7 493.76 L711.7 494.99 L712.7 496.11 L713.7 497.00 L714.7 497.54 L715.7 497.65 L716.7 497.23 L717.7 496.27 L718.7 494.83 L719.7 492.99 L720.7 490.90 L721.7 488.67 L722.7 486.46 L723.7 484.43 L724.7 482.74 L725.7 481.53 L726.7 480.82 L727.7 480.51 L728.7 480.42 L729.7 480.37 L730.7 480.30 L731.7 480.20 L732.7 480.08 L733.7 479.97 L734.7 479.84 L735.7 479.70 L736.7 479.53 L737.7 479.31 L738.7 479.00 L739.7 478.53 L740.7 477.73 L741.7 476.40 L742.7 474.37 L743.7 471.65 L744.7 468.38 L745.7 464.79 L746.7 461.09 L747.7 457.52 L748.7 454.37 L749.7 451.99 L750.7 450.80 L751.7 451.13 L752.7 453.08 L753.7 456.52 L754.7 461.07 L755.7 466.18 L756.7 471.16 L757.7 475.42 L758.7 478.66 L759.7 480.92 L760.7 482.40 L761.7 483.32 L762.7 483.90 L763.7 484.25 L764.7 484.45 L765.7 484.56 L766.7 484.59 L767.7 484.59 L768.7 484.56 L769.7 484.53 L770.7 484.51 L771.7 484.53 L772.7 484.64 L773.7 484.87 L774.7 485.26 L775.7 485.86 L776.7 486.67 L777.7 487.65 L778.7 488.70 L779.7 489.71 L780.7 490.58 L781.7 491.28 L782.7 491.86 L783.7 492.35 L784.7 492.80 L785.7 493.22 L786.7 493.61 L787.7 493.96 L788.7 494.27 L789.7 494.52 L790.7 494.70 L791.7 494.79 L792.7 494.78 L793.7 494.60 L794.7 494.21 L795.7 493.53 L796.7 492.49 L797.7 491.08 L798.7 489.36 L799.7 487.45 L800.7 485.53 L801.7 483.76 L802.7 482.25 L803.7 481.04 L804.7 480.10 L805.7 479.35 L806.7 478.74 L807.7 478.22 L808.7 477.77 L809.7 477.39 L810.7 477.06 L811.7 476.78 L812.7 476.54 L813.7 476.36 L814.7 476.22 L815.7 476.13 L816.7 476.11 L817.7 476.18 L818.7 476.36 L819.7 476.65 L820.7 477.04 L821.7 477.51 L822.7 478.04 L823.7 478.58 L824.7 479.11 L825.7 479.57 L826.7 479.94 L827.7 480.17 L828.7 480.22 L829.7 480.06 L830.7 479.69 L831.7 479.13 L832.7 478.41 L833.7 477.61 L834.7 476.78 L835.7 476.01 L836.7 475.37 L837.7 474.95 L838.7 474.83 L839.7 475.10 L840.7 475.85 L841.7 477.08 L842.7 478.76 L843.7 480.79 L844.7 482.98 L845.7 485.17 L846.7 487.18 L847.7 488.87 L848.7 490.16 L849.7 491.02 L850.7 491.49 L851.7 491.63 L852.7 491.53 L853.7 491.26 L854.7 490.86 L855.7 490.38 L856.7 489.87 L857.7 489.35 L858.7 488.87 L859.7 488.46 L860.7 488.17 L861.7 488.03 L862.7 488.10 L863.7 488.38 L864.7 488.87 L865.7 489.56 L866.7 490.40 L867.7 491.34 L868.7 492.32 L869.7 493.28 L870.7 494.15 L871.7 494.84 L872.7 495.28 L873.7 495.37 L874.7 495.09 L875.7 494.41 L876.7 493.37 L877.7 492.02 L878.7 490.47 L879.7 488.85 L880.7 487.36 L881.7 486.22 L882.7 485.53 L883.7 484.90 L884.7 483.36 L885.7 479.52 L886.7 472.30 L887.7 461.53 L888.7 448.11 L889.7 433.69 L890.7 419.94 L891.7 407.98 L892.7 398.22 L893.7 390.65 L894.7 385.17 L895.7 381.84 L896.7 380.81 L897.7 382.14 L898.7 385.78 L899.7 391.66 L900.7 399.86 L901.7 410.59 L902.7 423.61 L903.7 437.49 L904.7 449.97 L905.7 459.31 L906.7 465.20 L907.7 468.37 L908.7 469.78 L909.7 470.19 L910.7 470.02 L911.7 469.54 L912.7 468.88 L913.7 468.15 L914.7 467.45 L915.7 466.89 L916.7 466.58 L917.7 466.66 L918.7 467.25 L919.7 468.43 L920.7 470.20 L921.7 472.50 L922.7 475.18 L923.7 478.05 L924.7 480.88 L925.7 483.46 L926.7 485.66 L927.7 487.44 L928.7 488.85 L929.7 489.97 L930.7 490.87 L931.7 491.62 L932.7 492.26 L933.7 492.81 L934.7 493.29 L935.7 493.73 L936.7 494.14 L937.7 494.54 L938.7 494.93 L939.7 495.32 L940.7 495.71 L941.7 496.08 L942.7 496.44 L943.7 496.78 L944.7 497.10 L945.7 497.38 L946.7 497.63 L947.7 497.85 L948.7 498.01 L949.7 498.11 L950.7 498.15 L951.7 498.08 L952.7 497.90 L953.7 497.56 L954.7 497.05 L955.7 496.38 L956.7 495.56 L957.7 494.62 L958.7 493.62 L959.7 492.63 L960.7 491.74 L961.7 491.01 L962.7 490.43 L963.7 489.90 L964.7 489.22 L965.7 488.22 L966.7 486.86 L967.7 485.21 L968.7 483.38 L969.7 481.49 L970.7 479.67 L971.7 478.03 L972.7 476.69 L973.7 475.68 L974.7 474.86 L975.7 473.89 L976.7 472.38 L977.7 470.05 L978.7 466.88 L979.7 463.12 L980.7 459.10 L981.7 455.13 L982.7 451.38 L983.7 447.99 L984.7 445.19 L985.7 443.25 L986.7 442.46 L987.7 443.01 L988.7 444.99 L989.7 448.39 L990.7 453.13 L991.7 458.97 L992.7 465.45 L993.7 471.88 L994.7 477.50 L995.7 481.74 L996.7 484.39 L997.7 485.74 L998.7 486.37 L999.7 486.88 L1000.7 487.61 L1001.7 488.63 L1002.7 489.84 L1003.7 491.10 L1004.7 492.28 L1005.7 493.28 L1006.7 494.06 L1007.7 494.56 L1008.7 494.78 L1009.7 494.73 L1010.7 494.45 L1011.7 494.01 L1012.7 493.47 L1013.7 492.88 L1014.7 492.28 L1015.7 491.73 L1016.7 491.27 L1017.7 490.94 L1018.7 490.78 L1019.7 490.82 L1020.7 491.07 L1021.7 491.52 L1022.7 492.15 L1023.7 492.89 L1024.7 493.71 L1025.7 494.56 L1026.7 495.39 L1027.7 496.14 L1028.7 496.77 L1029.7 497.20 L1030.7 497.40 L1031.7 497.32 L1032.7 496.96 L1033.7 496.35 L1034.7 495.52 L1035.7 494.52 L1036.7 493.42 L1037.7 492.28 L1038.7 491.21 L1039.7 490.31 L1040.7 489.66 L1041.7 489.23 L1042.7 488.83 L1043.7 488.10 L1044.7 486.69 L1045.7 484.45 L1046.7 481.51 L1047.7 478.25 L1048.7 475.10 L1049.7 472.40 L1050.7 470.31 L1051.7 468.81 L1052.7 467.78 L1053.7 467.09 L1054.7 466.63 L1055.7 466.32 L1056.7 466.14 L1057.7 466.06 L1058.7 466.07 L1059.7 466.17 L1060.7 466.37 L1061.7 466.67 L1062.7 467.08 L1063.7 467.63 L1064.7 468.37 L1065.7 469.38 L1066.7 470.74 L1067.7 472.50 L1068.7 474.63 L1069.7 477.05 L1070.7 479.61 L1071.7 482.14 L1072.7 484.44 L1073.7 486.35 L1074.7 487.73 L1075.7 488.51 L1076.7 488.68 L1077.7 488.31 L1078.7 487.48 L1079.7 486.32 L1080.7 484.92 L1081.7 483.38 L1082.7 481.80 L1083.7 480.27 L1084.7 478.90 L1085.7 477.81 L1086.7 477.11 L1087.7 476.89 L1088.7 477.19 L1089.7 477.98 L1090.7 479.18 L1091.7 480.67 L1092.7 482.31 L1093.7 483.90 L1094.7 485.27 L1095.7 486.33 L1096.7 487.05 L1097.7 487.52 L1098.7 487.88 L1099.7 488.29 L1100.7 488.88 L1101.7 489.71 L1102.7 490.77 L1103.7 491.99 L1104.7 493.27 L1105.7 494.52 L1106.7 495.65 L1107.7 496.57 L1108.7 497.19 L1109.7 497.45 L1110.7 497.32 L1111.7 496.84 L1112.7 496.06 L1113.7 495.07 L1114.7 493.96 L1115.7 492.81 L1116.7 491.73 L1117.7 490.80 L1118.7 490.09 L1119.7 489.60 L1120.7 489.30 L1121.7 489.12 L1122.7 488.96 L1123.7 488.75 L1124.7 488.47 L1125.7 488.12 L1126.7 487.73 L1127.7 487.31 L1128.7 486.87 L1129.7 486.42 L1130.7 485.97 L1131.7 485.50 L1132.7 485.01 L1133.7 484.48 L1134.7 483.93 L1135.7 483.37 L1136.7 482.80 L1137.7 482.25 L1138.7 481.75 L1139.7 481.29 L1140.7 480.91 L1141.7 480.62 L1142.7 480.45 L1143.7 480.42 L1144.7 480.54 L1145.7 480.80 L1146.7 481.20 L1147.7 481.69 L1148.7 482.24 L1149.7 482.82 L1150.7 483.37 L1151.7 483.86 L1152.7 484.24 L1153.7 484.47 L1154.7 484.51 L1155.7 484.34 L1156.7 483.94 L1157.7 483.34 L1158.7 482.58 L1159.7 481.72 L1160.7 480.83 L1161.7 479.98 L1162.7 479.24 L1163.7 478.68 L1164.7 478.36 L1165.7 478.31 L1166.7 478.53 L1167.7 478.99 L1168.7 479.65 L1169.7 480.45 L1170.7 481.35 L1171.7 482.30 L1172.7 483.23 L1173.7 484.08 L1174.7 484.79 L1175.7 485.35 L1176.7 485.81 L1177.7 486.29 L1178.7 486.92 L1179.7 487.79 L1180.7 488.91 L1181.7 490.23 L1182.7 491.65 L1183.7 493.09 L1184.7 494.45 L1185.7 495.65 L1186.7 496.62 L1187.7 497.28 L1188.7 497.59 L1189.7 497.52 L1190.7 497.11 L1191.7 496.42 L1192.7 495.53 L1193.7 494.50 L1194.7 493.42 L1195.7 492.38 L1196.7 491.50 L1197.7 490.84 L1198.7 490.35 L1199.7 489.72 L1200.7 488.56 L1201.7 486.59 L1202.7 483.83 L1203.7 480.53 L1204.7 477.01 L1205.7 473.57 L1206.7 470.44 L1207.7 467.77 L1208.7 465.65 L1209.7 464.15 L1210.7 463.36 L1211.7 463.32 L1212.7 464.02 L1213.7 465.39 L1214.7 467.32 L1215.7 469.72 L1216.7 472.42 L1217.7 475.12 L1218.7 477.43 L1219.7 479.07 L1220.7 480.04 L1221.7 480.52 L1222.7 480.83 L1223.7 481.17 L1224.7 481.66 L1225.7 482.30 L1226.7 483.04 L1227.7 483.80 L1228.7 484.54 L1229.7 485.21 L1230.7 485.77 L1231.7 486.23 L1232.7 486.58 L1233.7 486.85 L1234.7 487.04 L1235.7 487.20 L1236.7 487.31 L1237.7 487.41 L1238.7 487.50 L1239.7 487.58 L1240.7 487.67 L1241.7 487.75 L1242.7 487.83 L1243.7 487.89 L1244.7 487.95 L1245.7 488.03 L1246.7 488.13 L1247.7 488.27 L1248.7 488.46 L1249.7 488.67 L1250.7 488.91 L1251.7 489.16 L1252.7 489.41 L1253.7 489.64 L1254.7 489.85 L1255.7 489.97 L1256.7 489.95 L1257.7 489.73 L1258.7 489.30 L1259.7 488.71 L1260.7 488.03 L1261.7 487.32 L1262.7 486.64 L1263.7 486.03 L1264.7 485.54 L1265.7 485.20 L1266.7 484.96 L1267.7 484.73 L1268.7 484.42 L1269.7 483.95 L1270.7 483.30 L1271.7 482.53 L1272.7 481.70 L1273.7 480.89 L1274.7 480.17 L1275.7 479.59 L1276.7 479.20 L1277.7 479.03 L1278.7 479.07 L1279.7 479.33 L1280.7 479.75 L1281.7 480.29 L1282.7 480.90 L1283.7 481.53 L1284.7 482.15 L1285.7 482.70 L1286.7 483.16 L1287.7 483.48 L1288.7 483.62 L1289.7 483.56 L1290.7 483.31 L1291.7 482.87 L1292.7 482.29 L1293.7 481.59 L1294.7 480.82 L1295.7 480.01 L1296.7 479.19 L1297.7 478.42 L1298.7 477.76 L1299.7 477.28 L1300.7 477.07 L1301.7 477.27 L1302.7 478.06 L1303.7 479.65 L1304.7 482.05 L1305.7 484.95 L1306.7 487.72 L1307.7 489.86 L1308.7 491.25 L1309.7 492.08 L1310.7 492.58 L1311.7 492.91 L1312.7 493.16 L1313.7 493.35 L1314.7 493.51 L1315.7 493.64 L1316.7 493.75 L1317.7 493.85 L1318.7 493.94 L1319.7 494.02 L1320.7 494.10 L1321.7 494.17 L1322.4 551 L324.2 551 Z" fill="url(#ga)"/>
  <path d="M324.0 498.59 L324.5 498.58 L325.5 498.55 L326.5 498.52 L327.5 498.48 L328.5 498.45 L329.5 498.42 L330.5 498.38 L331.5 498.35 L332.5 498.31 L333.5 498.28 L334.5 498.24 L335.5 498.21 L336.5 498.18 L337.5 498.15 L338.5 498.12 L339.5 498.09 L340.5 498.06 L341.5 498.03 L342.5 498.00 L343.5 497.98 L344.5 497.96 L345.5 497.94 L346.5 497.92 L347.5 497.91 L348.5 497.91 L349.5 497.91 L350.5 497.92 L351.5 497.94 L352.5 497.97 L353.5 498.01 L354.5 498.07 L355.5 498.15 L356.5 498.24 L357.5 498.35 L358.5 498.47 L359.5 498.61 L360.5 498.76 L361.5 498.92 L362.5 499.13 L363.5 499.37 L364.5 499.64 L365.5 499.91 L366.5 500.15 L367.5 500.33 L368.5 500.40 L369.5 500.33 L370.5 500.10 L371.5 499.76 L372.5 499.41 L373.5 499.12 L374.5 498.91 L375.5 498.76 L376.5 498.65 L377.5 498.58 L378.5 498.52 L379.5 498.48 L380.5 498.45 L381.5 498.43 L382.5 498.41 L383.5 498.39 L384.5 498.38 L385.5 498.37 L386.5 498.36 L387.5 498.35 L388.5 498.34 L389.5 498.34 L390.5 498.33 L391.5 498.32 L392.5 498.31 L393.5 498.30 L394.5 498.29 L395.5 498.28 L396.5 498.26 L397.5 498.25 L398.5 498.23 L399.5 498.20 L400.5 498.17 L401.5 498.14 L402.5 498.09 L403.5 498.04 L404.5 497.97 L405.5 497.89 L406.5 497.78 L407.5 497.64 L408.5 497.47 L409.5 497.27 L410.5 497.03 L411.5 496.76 L412.5 496.45 L413.5 496.12 L414.5 495.78 L415.5 495.45 L416.5 495.19 L417.5 495.17 L418.5 495.61 L419.5 496.46 L420.5 497.23 L421.5 497.61 L422.5 497.72 L423.5 497.73 L424.5 497.72 L425.5 497.69 L426.5 497.65 L427.5 497.60 L428.5 497.55 L429.5 497.49 L430.5 497.43 L431.5 497.36 L432.5 497.29 L433.5 497.21 L434.5 497.13 L435.5 497.05 L436.5 496.96 L437.5 496.87 L438.5 496.78 L439.5 496.67 L440.5 496.55 L441.5 496.39 L442.5 496.13 L443.5 495.72 L444.5 495.24 L445.5 494.87 L446.5 494.72 L447.5 494.77 L448.5 494.91 L449.5 495.12 L450.5 495.38 L451.5 495.76 L452.5 496.37 L453.5 497.18 L454.5 497.90 L455.5 498.32 L456.5 498.51 L457.5 498.61 L458.5 498.67 L459.5 498.72 L460.5 498.76 L461.5 498.79 L462.5 498.82 L463.5 498.84 L464.5 498.85 L465.5 498.86 L466.5 498.87 L467.5 498.88 L468.5 498.87 L469.5 498.87 L470.5 498.86 L471.5 498.85 L472.5 498.83 L473.5 498.80 L474.5 498.77 L475.5 498.73 L476.5 498.67 L477.5 498.60 L478.5 498.51 L479.5 498.38 L480.5 498.22 L481.5 498.02 L482.5 497.78 L483.5 497.51 L484.5 497.21 L485.5 496.90 L486.5 496.59 L487.5 496.31 L488.5 496.09 L489.5 495.92 L490.5 495.82 L491.5 495.78 L492.5 495.79 L493.5 495.87 L494.5 496.00 L495.5 496.23 L496.5 496.60 L497.5 497.13 L498.5 497.70 L499.5 498.13 L500.5 498.39 L501.5 498.53 L502.5 498.61 L503.5 498.66 L504.5 498.70 L505.5 498.72 L506.5 498.74 L507.5 498.75 L508.5 498.76 L509.5 498.76 L510.5 498.75 L511.5 498.74 L512.5 498.73 L513.5 498.70 L514.5 498.67 L515.5 498.64 L516.5 498.59 L517.5 498.52 L518.5 498.41 L519.5 498.24 L520.5 497.98 L521.5 497.64 L522.5 497.26 L523.5 496.91 L524.5 496.64 L525.5 496.45 L526.5 496.33 L527.5 496.24 L528.5 496.18 L529.5 496.14 L530.5 496.12 L531.5 496.12 L532.5 496.13 L533.5 496.15 L534.5 496.19 L535.5 496.23 L536.5 496.28 L537.5 496.35 L538.5 496.41 L539.5 496.48 L540.5 496.56 L541.5 496.64 L542.5 496.72 L543.5 496.81 L544.5 496.89 L545.5 496.98 L546.5 497.07 L547.5 497.17 L548.5 497.26 L549.5 497.36 L550.5 497.46 L551.5 497.57 L552.5 497.71 L553.5 497.94 L554.5 498.22 L555.5 498.44 L556.5 498.55 L557.5 498.59 L558.5 498.62 L559.5 498.64 L560.5 498.66 L561.5 498.68 L562.5 498.70 L563.5 498.71 L564.5 498.73 L565.5 498.75 L566.5 498.76 L567.5 498.78 L568.5 498.79 L569.5 498.80 L570.5 498.82 L571.5 498.83 L572.5 498.84 L573.5 498.85 L574.5 498.86 L575.5 498.87 L576.5 498.87 L577.5 498.88 L578.5 498.89 L579.5 498.89 L580.5 498.89 L581.5 498.89 L582.5 498.89 L583.5 498.89 L584.5 498.89 L585.5 498.88 L586.5 498.87 L587.5 498.86 L588.5 498.85 L589.5 498.83 L590.5 498.81 L591.5 498.78 L592.5 498.75 L593.5 498.70 L594.5 498.65 L595.5 498.56 L596.5 498.45 L597.5 498.24 L598.5 497.85 L599.5 497.13 L600.5 496.17 L601.5 495.36 L602.5 494.94 L603.5 494.77 L604.5 494.73 L605.5 494.77 L606.5 494.87 L607.5 495.07 L608.5 495.37 L609.5 495.81 L610.5 496.36 L611.5 496.97 L612.5 497.54 L613.5 498.00 L614.5 498.31 L615.5 498.46 L616.5 498.46 L617.5 498.32 L618.5 498.05 L619.5 497.68 L620.5 497.23 L621.5 496.73 L622.5 496.23 L623.5 495.77 L624.5 495.39 L625.5 495.13 L626.5 494.98 L627.5 494.95 L628.5 495.01 L629.5 495.15 L630.5 495.35 L631.5 495.60 L632.5 495.91 L633.5 496.26 L634.5 496.63 L635.5 496.99 L636.5 497.32 L637.5 497.60 L638.5 497.85 L639.5 498.08 L640.5 498.30 L641.5 498.50 L642.5 498.70 L643.5 498.89 L644.5 499.07 L645.5 499.24 L646.5 499.39 L647.5 499.52 L648.5 499.61 L649.5 499.65 L650.5 499.60 L651.5 499.45 L652.5 499.22 L653.5 498.99 L654.5 498.80 L655.5 498.68 L656.5 498.61 L657.5 498.58 L658.5 498.57 L659.5 498.58 L660.5 498.59 L661.5 498.61 L662.5 498.62 L663.5 498.65 L664.5 498.67 L665.5 498.69 L666.5 498.70 L667.5 498.72 L668.5 498.73 L669.5 498.73 L670.5 498.72 L671.5 498.69 L672.5 498.63 L673.5 498.52 L674.5 498.31 L675.5 497.93 L676.5 497.34 L677.5 496.65 L678.5 495.95 L679.5 495.27 L680.5 494.60 L681.5 493.95 L682.5 493.32 L683.5 492.76 L684.5 492.29 L685.5 491.93 L686.5 491.69 L687.5 491.54 L688.5 491.46 L689.5 491.43 L690.5 491.41 L691.5 491.38 L692.5 491.34 L693.5 491.29 L694.5 491.32 L695.5 491.63 L696.5 492.51 L697.5 493.85 L698.5 495.03 L699.5 495.67 L700.5 496.03 L701.5 496.64 L702.5 497.49 L703.5 498.15 L704.5 498.48 L705.5 498.58 L706.5 498.60 L707.5 498.61 L708.5 498.61 L709.5 498.62 L710.5 498.62 L711.5 498.62 L712.5 498.62 L713.5 498.62 L714.5 498.62 L715.5 498.62 L716.5 498.62 L717.5 498.62 L718.5 498.62 L719.5 498.62 L720.5 498.61 L721.5 498.61 L722.5 498.61 L723.5 498.61 L724.5 498.60 L725.5 498.60 L726.5 498.60 L727.5 498.59 L728.5 498.59 L729.5 498.59 L730.5 498.58 L731.5 498.58 L732.5 498.57 L733.5 498.57 L734.5 498.56 L735.5 498.56 L736.5 498.55 L737.5 498.55 L738.5 498.54 L739.5 498.54 L740.5 498.53 L741.5 498.53 L742.5 498.52 L743.5 498.52 L744.5 498.51 L745.5 498.50 L746.5 498.50 L747.5 498.49 L748.5 498.48 L749.5 498.48 L750.5 498.47 L751.5 498.46 L752.5 498.45 L753.5 498.45 L754.5 498.44 L755.5 498.43 L756.5 498.42 L757.5 498.41 L758.5 498.41 L759.5 498.40 L760.5 498.39 L761.5 498.38 L762.5 498.37 L763.5 498.36 L764.5 498.35 L765.5 498.34 L766.5 498.33 L767.5 498.32 L768.5 498.31 L769.5 498.30 L770.5 498.29 L771.5 498.28 L772.5 498.27 L773.5 498.26 L774.5 498.25 L775.5 498.24 L776.5 498.22 L777.5 498.21 L778.5 498.20 L779.5 498.19 L780.5 498.17 L781.5 498.16 L782.5 498.14 L783.5 498.13 L784.5 498.12 L785.5 498.10 L786.5 498.08 L787.5 498.07 L788.5 498.05 L789.5 498.03 L790.5 498.01 L791.5 498.00 L792.5 497.98 L793.5 497.95 L794.5 497.93 L795.5 497.91 L796.5 497.88 L797.5 497.86 L798.5 497.83 L799.5 497.79 L800.5 497.76 L801.5 497.71 L802.5 497.66 L803.5 497.59 L804.5 497.46 L805.5 497.17 L806.5 496.68 L807.5 496.37 L808.5 496.59 L809.5 497.09 L810.5 497.51 L811.5 497.77 L812.5 497.93 L813.5 498.03 L814.5 498.10 L815.5 498.15 L816.5 498.19 L817.5 498.22 L818.5 498.25 L819.5 498.27 L820.5 498.29 L821.5 498.31 L822.5 498.32 L823.5 498.33 L824.5 498.34 L825.5 498.35 L826.5 498.36 L827.5 498.36 L828.5 498.36 L829.5 498.37 L830.5 498.37 L831.5 498.37 L832.5 498.36 L833.5 498.36 L834.5 498.36 L835.5 498.35 L836.5 498.34 L837.5 498.33 L838.5 498.32 L839.5 498.31 L840.5 498.30 L841.5 498.29 L842.5 498.27 L843.5 498.25 L844.5 498.23 L845.5 498.21 L846.5 498.19 L847.5 498.16 L848.5 498.13 L849.5 498.10 L850.5 498.06 L851.5 498.02 L852.5 497.98 L853.5 497.92 L854.5 497.86 L855.5 497.78 L856.5 497.67 L857.5 497.51 L858.5 497.24 L859.5 496.76 L860.5 496.00 L861.5 495.14 L862.5 494.52 L863.5 494.22 L864.5 494.12 L865.5 494.10 L866.5 494.10 L867.5 494.13 L868.5 494.18 L869.5 494.24 L870.5 494.32 L871.5 494.40 L872.5 494.50 L873.5 494.62 L874.5 494.77 L875.5 495.00 L876.5 495.38 L877.5 496.01 L878.5 496.88 L879.5 497.60 L880.5 497.94 L881.5 498.06 L882.5 498.12 L883.5 498.16 L884.5 498.20 L885.5 498.24 L886.5 498.27 L887.5 498.31 L888.5 498.35 L889.5 498.38 L890.5 498.42 L891.5 498.45 L892.5 498.48 L893.5 498.51 L894.5 498.55 L895.5 498.58 L896.5 498.61 L897.5 498.63 L898.5 498.66 L899.5 498.69 L900.5 498.72 L901.5 498.74 L902.5 498.76 L903.5 498.79 L904.5 498.81 L905.5 498.83 L906.5 498.85 L907.5 498.87 L908.5 498.88 L909.5 498.90 L910.5 498.91 L911.5 498.93 L912.5 498.94 L913.5 498.95 L914.5 498.96 L915.5 498.97 L916.5 498.97 L917.5 498.98 L918.5 498.98 L919.5 498.98 L920.5 498.97 L921.5 498.97 L922.5 498.96 L923.5 498.95 L924.5 498.94 L925.5 498.93 L926.5 498.91 L927.5 498.89 L928.5 498.87 L929.5 498.84 L930.5 498.80 L931.5 498.77 L932.5 498.72 L933.5 498.68 L934.5 498.62 L935.5 498.56 L936.5 498.49 L937.5 498.40 L938.5 498.31 L939.5 498.20 L940.5 498.07 L941.5 497.91 L942.5 497.71 L943.5 497.45 L944.5 497.09 L945.5 496.40 L946.5 494.73 L947.5 491.49 L948.5 487.57 L949.5 484.68 L950.5 483.30 L951.5 482.83 L952.5 482.80 L953.5 483.01 L954.5 483.45 L955.5 484.14 L956.5 485.14 L957.5 486.47 L958.5 488.14 L959.5 490.00 L960.5 491.77 L961.5 493.15 L962.5 493.96 L963.5 494.36 L964.5 494.68 L965.5 495.15 L966.5 495.76 L967.5 496.40 L968.5 496.96 L969.5 497.39 L970.5 497.72 L971.5 497.95 L972.5 498.13 L973.5 498.26 L974.5 498.36 L975.5 498.46 L976.5 498.53 L977.5 498.60 L978.5 498.66 L979.5 498.71 L980.5 498.74 L981.5 498.77 L982.5 498.79 L983.5 498.80 L984.5 498.80 L985.5 498.78 L986.5 498.75 L987.5 498.68 L988.5 498.57 L989.5 498.38 L990.5 498.07 L991.5 497.61 L992.5 497.00 L993.5 496.32 L994.5 495.71 L995.5 495.27 L996.5 495.05 L997.5 494.99 L998.5 495.07 L999.5 495.25 L1000.5 495.56 L1001.5 496.08 L1002.5 496.81 L1003.5 497.57 L1004.5 498.13 L1005.5 498.45 L1006.5 498.61 L1007.5 498.68 L1008.5 498.71 L1009.5 498.72 L1010.5 498.71 L1011.5 498.69 L1012.5 498.66 L1013.5 498.63 L1014.5 498.59 L1015.5 498.55 L1016.5 498.51 L1017.5 498.47 L1018.5 498.43 L1019.5 498.39 L1020.5 498.36 L1021.5 498.33 L1022.5 498.32 L1023.5 498.31 L1024.5 498.31 L1025.5 498.33 L1026.5 498.35 L1027.5 498.39 L1028.5 498.43 L1029.5 498.48 L1030.5 498.53 L1031.5 498.59 L1032.5 498.65 L1033.5 498.71 L1034.5 498.76 L1035.5 498.81 L1036.5 498.85 L1037.5 498.88 L1038.5 498.91 L1039.5 498.93 L1040.5 498.96 L1041.5 498.98 L1042.5 498.99 L1043.5 498.98 L1044.5 498.94 L1045.5 498.85 L1046.5 498.64 L1047.5 498.20 L1048.5 497.47 L1049.5 496.57 L1050.5 495.79 L1051.5 495.29 L1052.5 495.00 L1053.5 494.83 L1054.5 494.71 L1055.5 494.61 L1056.5 494.53 L1057.5 494.46 L1058.5 494.40 L1059.5 494.35 L1060.5 494.31 L1061.5 494.28 L1062.5 494.26 L1063.5 494.25 L1064.5 494.25 L1065.5 494.28 L1066.5 494.35 L1067.5 494.56 L1068.5 495.02 L1069.5 495.75 L1070.5 496.64 L1071.5 497.58 L1072.5 498.51 L1073.5 499.36 L1074.5 500.03 L1075.5 500.38 L1076.5 500.32 L1077.5 499.95 L1078.5 499.55 L1079.5 499.27 L1080.5 499.10 L1081.5 499.00 L1082.5 498.93 L1083.5 498.88 L1084.5 498.85 L1085.5 498.83 L1086.5 498.81 L1087.5 498.80 L1088.5 498.79 L1089.5 498.79 L1090.5 498.79 L1091.5 498.79 L1092.5 498.79 L1093.5 498.79 L1094.5 498.80 L1095.5 498.80 L1096.5 498.81 L1097.5 498.81 L1098.5 498.82 L1099.5 498.82 L1100.5 498.83 L1101.5 498.84 L1102.5 498.84 L1103.5 498.85 L1104.5 498.86 L1105.5 498.86 L1106.5 498.87 L1107.5 498.87 L1108.5 498.87 L1109.5 498.87 L1110.5 498.88 L1111.5 498.88 L1112.5 498.87 L1113.5 498.87 L1114.5 498.87 L1115.5 498.86 L1116.5 498.85 L1117.5 498.84 L1118.5 498.82 L1119.5 498.80 L1120.5 498.77 L1121.5 498.73 L1122.5 498.68 L1123.5 498.62 L1124.5 498.52 L1125.5 498.34 L1126.5 497.93 L1127.5 497.13 L1128.5 496.07 L1129.5 495.19 L1130.5 494.71 L1131.5 494.44 L1132.5 494.25 L1133.5 494.07 L1134.5 493.90 L1135.5 493.75 L1136.5 493.60 L1137.5 493.46 L1138.5 493.32 L1139.5 493.20 L1140.5 493.08 L1141.5 492.98 L1142.5 492.89 L1143.5 492.83 L1144.5 492.82 L1145.5 492.93 L1146.5 493.28 L1147.5 494.10 L1148.5 495.43 L1149.5 496.83 L1150.5 497.73 L1151.5 498.16 L1152.5 498.37 L1153.5 498.52 L1154.5 498.64 L1155.5 498.74 L1156.5 498.83 L1157.5 498.90 L1158.5 498.95 L1159.5 499.00 L1160.5 499.02 L1161.5 499.03 L1162.5 499.01 L1163.5 498.96 L1164.5 498.87 L1165.5 498.71 L1166.5 498.44 L1167.5 497.98 L1168.5 497.24 L1169.5 496.16 L1170.5 494.80 L1171.5 493.35 L1172.5 492.05 L1173.5 490.96 L1174.5 490.08 L1175.5 489.41 L1176.5 489.00 L1177.5 488.84 L1178.5 488.98 L1179.5 489.50 L1180.5 490.47 L1181.5 491.85 L1182.5 493.34 L1183.5 494.60 L1184.5 495.45 L1185.5 495.91 L1186.5 496.07 L1187.5 496.03 L1188.5 495.86 L1189.5 495.61 L1190.5 495.31 L1191.5 494.98 L1192.5 494.62 L1193.5 494.25 L1194.5 493.87 L1195.5 493.49 L1196.5 493.11 L1197.5 492.75 L1198.5 492.40 L1199.5 492.09 L1200.5 491.84 L1201.5 491.67 L1202.5 491.65 L1203.5 491.85 L1204.5 492.36 L1205.5 493.13 L1206.5 493.95 L1207.5 494.60 L1208.5 495.01 L1209.5 495.24 L1210.5 495.37 L1211.5 495.44 L1212.5 495.48 L1213.5 495.50 L1214.5 495.51 L1215.5 495.51 L1216.5 495.51 L1217.5 495.50 L1218.5 495.49 L1219.5 495.48 L1220.5 495.48 L1221.5 495.48 L1222.5 495.50 L1223.5 495.54 L1224.5 495.61 L1225.5 495.78 L1226.5 496.18 L1227.5 496.87 L1228.5 497.63 L1229.5 498.16 L1230.5 498.43 L1231.5 498.57 L1232.5 498.66 L1233.5 498.73 L1234.5 498.78 L1235.5 498.82 L1236.5 498.86 L1237.5 498.90 L1238.5 498.93 L1239.5 498.95 L1240.5 498.98 L1241.5 499.00 L1242.5 499.02 L1243.5 499.04 L1244.5 499.05 L1245.5 499.07 L1246.5 499.08 L1247.5 499.09 L1248.5 499.10 L1249.5 499.11 L1250.5 499.12 L1251.5 499.12 L1252.5 499.13 L1253.5 499.13 L1254.5 499.13 L1255.5 499.13 L1256.5 499.12 L1257.5 499.12 L1258.5 499.11 L1259.5 499.10 L1260.5 499.09 L1261.5 499.08 L1262.5 499.06 L1263.5 499.04 L1264.5 499.02 L1265.5 499.02 L1266.5 499.03 L1267.5 498.84 L1268.5 497.82 L1269.5 495.12 L1270.5 490.38 L1271.5 484.22 L1272.5 477.82 L1273.5 472.09 L1274.5 467.35 L1275.5 463.68 L1276.5 461.15 L1277.5 459.58 L1278.5 458.66 L1279.5 458.14 L1280.5 457.86 L1281.5 457.71 L1282.5 457.67 L1283.5 457.70 L1284.5 457.80 L1285.5 457.97 L1286.5 458.21 L1287.5 458.52 L1288.5 458.94 L1289.5 459.53 L1290.5 460.50 L1291.5 462.20 L1292.5 465.04 L1293.5 469.10 L1294.5 474.04 L1295.5 479.24 L1296.5 483.83 L1297.5 487.13 L1298.5 489.20 L1299.5 490.44 L1300.5 491.20 L1301.5 491.60 L1302.5 491.70 L1303.5 491.63 L1304.5 491.52 L1305.5 491.43 L1306.5 491.36 L1307.5 491.28 L1308.5 491.20 L1309.5 491.13 L1310.5 491.08 L1311.5 491.03 L1312.5 491.00 L1313.5 490.98 L1314.5 490.97 L1315.5 490.97 L1316.5 490.97 L1317.5 490.97 L1318.5 490.98 L1319.5 490.99 L1320.5 490.99" stroke="#9eafbd" stroke-width="2" fill="none" stroke-dasharray="0.1 3.8" stroke-linecap="round"/>
  <path d="M324.2 493.40 L324.7 493.31 L325.7 493.07 L326.7 492.78 L327.7 492.46 L328.7 492.14 L329.7 491.83 L330.7 491.53 L331.7 491.25 L332.7 491.02 L333.7 490.84 L334.7 490.72 L335.7 490.66 L336.7 490.61 L337.7 490.51 L338.7 490.35 L339.7 490.13 L340.7 489.87 L341.7 489.59 L342.7 489.31 L343.7 489.05 L344.7 488.82 L345.7 488.63 L346.7 488.43 L347.7 488.15 L348.7 487.72 L349.7 487.15 L350.7 486.45 L351.7 485.67 L352.7 484.87 L353.7 484.08 L354.7 483.33 L355.7 482.67 L356.7 482.15 L357.7 481.83 L358.7 481.80 L359.7 482.12 L360.7 482.84 L361.7 483.99 L362.7 485.51 L363.7 487.35 L364.7 489.37 L365.7 491.38 L366.7 493.19 L367.7 494.56 L368.7 495.29 L369.7 495.26 L370.7 494.46 L371.7 493.03 L372.7 491.20 L373.7 489.19 L374.7 487.15 L375.7 485.12 L376.7 483.16 L377.7 481.34 L378.7 479.85 L379.7 478.83 L380.7 478.39 L381.7 478.53 L382.7 479.14 L383.7 480.06 L384.7 481.15 L385.7 482.23 L386.7 483.19 L387.7 483.98 L388.7 484.60 L389.7 485.11 L390.7 485.56 L391.7 486.03 L392.7 486.57 L393.7 487.25 L394.7 488.09 L395.7 489.10 L396.7 490.23 L397.7 491.41 L398.7 492.53 L399.7 493.53 L400.7 494.32 L401.7 494.87 L402.7 495.17 L403.7 495.24 L404.7 495.12 L405.7 494.86 L406.7 494.50 L407.7 494.08 L408.7 493.62 L409.7 493.15 L410.7 492.70 L411.7 492.31 L412.7 492.01 L413.7 491.82 L414.7 491.68 L415.7 491.55 L416.7 491.34 L417.7 491.03 L418.7 490.62 L419.7 490.14 L420.7 489.63 L421.7 489.10 L422.7 488.57 L423.7 488.07 L424.7 487.62 L425.7 487.23 L426.7 486.83 L427.7 486.31 L428.7 485.55 L429.7 484.52 L430.7 483.31 L431.7 482.03 L432.7 480.83 L433.7 479.83 L434.7 479.13 L435.7 478.80 L436.7 478.88 L437.7 479.34 L438.7 480.10 L439.7 481.09 L440.7 482.21 L441.7 483.40 L442.7 484.58 L443.7 485.67 L444.7 486.61 L445.7 487.38 L446.7 487.98 L447.7 488.49 L448.7 488.99 L449.7 489.54 L450.7 490.16 L451.7 490.84 L452.7 491.52 L453.7 492.16 L454.7 492.70 L455.7 493.11 L456.7 493.34 L457.7 493.37 L458.7 493.19 L459.7 492.79 L460.7 492.21 L461.7 491.49 L462.7 490.67 L463.7 489.79 L464.7 488.88 L465.7 487.98 L466.7 487.13 L467.7 486.37 L468.7 485.79 L469.7 485.44 L470.7 485.39 L471.7 485.70 L472.7 486.37 L473.7 487.36 L474.7 488.57 L475.7 489.95 L476.7 491.47 L477.7 493.03 L478.7 494.49 L479.7 495.61 L480.7 496.27 L481.7 496.41 L482.7 496.09 L483.7 495.43 L484.7 494.55 L485.7 493.53 L486.7 492.44 L487.7 491.35 L488.7 490.32 L489.7 489.40 L490.7 488.64 L491.7 488.07 L492.7 487.66 L493.7 487.38 L494.7 487.13 L495.7 486.84 L496.7 486.49 L497.7 486.08 L498.7 485.61 L499.7 485.12 L500.7 484.61 L501.7 484.09 L502.7 483.59 L503.7 483.11 L504.7 482.66 L505.7 482.22 L506.7 481.72 L507.7 481.05 L508.7 480.10 L509.7 478.84 L510.7 477.34 L511.7 475.74 L512.7 474.23 L513.7 473.00 L514.7 472.17 L515.7 471.80 L516.7 471.86 L517.7 472.25 L518.7 472.87 L519.7 473.62 L520.7 474.40 L521.7 475.11 L522.7 475.70 L523.7 476.16 L524.7 476.53 L525.7 476.90 L526.7 477.37 L527.7 478.05 L528.7 478.97 L529.7 480.12 L530.7 481.46 L531.7 482.89 L532.7 484.33 L533.7 485.68 L534.7 486.87 L535.7 487.84 L536.7 488.54 L537.7 488.95 L538.7 489.09 L539.7 489.01 L540.7 488.76 L541.7 488.40 L542.7 488.00 L543.7 487.61 L544.7 487.29 L545.7 487.07 L546.7 486.98 L547.7 487.03 L548.7 487.21 L549.7 487.48 L550.7 487.82 L551.7 488.21 L552.7 488.64 L553.7 489.10 L554.7 489.57 L555.7 490.04 L556.7 490.50 L557.7 490.91 L558.7 491.26 L559.7 491.53 L560.7 491.76 L561.7 492.01 L562.7 492.36 L563.7 492.83 L564.7 493.38 L565.7 493.95 L566.7 494.47 L567.7 494.90 L568.7 495.15 L569.7 495.17 L570.7 494.86 L571.7 494.16 L572.7 493.03 L573.7 491.50 L574.7 489.66 L575.7 487.63 L576.7 485.56 L577.7 483.61 L578.7 481.95 L579.7 480.67 L580.7 479.81 L581.7 479.32 L582.7 479.05 L583.7 478.84 L584.7 478.57 L585.7 478.18 L586.7 477.66 L587.7 477.07 L588.7 476.45 L589.7 475.85 L590.7 475.30 L591.7 474.85 L592.7 474.57 L593.7 474.51 L594.7 474.74 L595.7 475.28 L596.7 476.16 L597.7 477.35 L598.7 478.81 L599.7 480.46 L600.7 482.21 L601.7 483.89 L602.7 485.37 L603.7 486.52 L604.7 487.30 L605.7 487.81 L606.7 488.20 L607.7 488.64 L608.7 489.21 L609.7 489.92 L610.7 490.72 L611.7 491.51 L612.7 492.22 L613.7 492.78 L614.7 493.14 L615.7 493.27 L616.7 493.15 L617.7 492.80 L618.7 492.28 L619.7 491.63 L620.7 490.90 L621.7 490.12 L622.7 489.32 L623.7 488.56 L624.7 487.88 L625.7 487.33 L626.7 486.98 L627.7 486.89 L628.7 487.13 L629.7 487.73 L630.7 488.66 L631.7 489.89 L632.7 491.36 L633.7 492.94 L634.7 494.49 L635.7 495.83 L636.7 496.84 L637.7 497.41 L638.7 497.51 L639.7 497.16 L640.7 496.44 L641.7 495.43 L642.7 494.23 L643.7 492.92 L644.7 491.58 L645.7 490.26 L646.7 489.04 L647.7 488.00 L648.7 487.17 L649.7 486.58 L650.7 486.20 L651.7 485.95 L652.7 485.74 L653.7 485.52 L654.7 485.23 L655.7 484.88 L656.7 484.49 L657.7 484.09 L658.7 483.71 L659.7 483.37 L660.7 483.05 L661.7 482.72 L662.7 482.28 L663.7 481.66 L664.7 480.82 L665.7 479.78 L666.7 478.60 L667.7 477.35 L668.7 476.12 L669.7 475.00 L670.7 474.08 L671.7 473.50 L672.7 473.38 L673.7 473.92 L674.7 475.25 L675.7 477.46 L676.7 480.45 L677.7 483.89 L678.7 487.26 L679.7 490.05 L680.7 492.00 L681.7 493.09 L682.7 493.47 L683.7 493.31 L684.7 492.74 L685.7 491.84 L686.7 490.64 L687.7 489.18 L688.7 487.51 L689.7 485.71 L690.7 483.91 L691.7 482.21 L692.7 480.78 L693.7 479.78 L694.7 479.35 L695.7 479.57 L696.7 480.36 L697.7 481.51 L698.7 482.83 L699.7 484.16 L700.7 485.45 L701.7 486.64 L702.7 487.65 L703.7 488.41 L704.7 488.95 L705.7 489.38 L706.7 489.86 L707.7 490.53 L708.7 491.42 L709.7 492.53 L710.7 493.76 L711.7 494.99 L712.7 496.11 L713.7 497.00 L714.7 497.54 L715.7 497.65 L716.7 497.23 L717.7 496.27 L718.7 494.83 L719.7 492.99 L720.7 490.90 L721.7 488.67 L722.7 486.46 L723.7 484.43 L724.7 482.74 L725.7 481.53 L726.7 480.82 L727.7 480.51 L728.7 480.42 L729.7 480.37 L730.7 480.30 L731.7 480.20 L732.7 480.08 L733.7 479.97 L734.7 479.84 L735.7 479.70 L736.7 479.53 L737.7 479.31 L738.7 479.00 L739.7 478.53 L740.7 477.73 L741.7 476.40 L742.7 474.37 L743.7 471.65 L744.7 468.38 L745.7 464.79 L746.7 461.09 L747.7 457.52 L748.7 454.37 L749.7 451.99 L750.7 450.80 L751.7 451.13 L752.7 453.08 L753.7 456.52 L754.7 461.07 L755.7 466.18 L756.7 471.16 L757.7 475.42 L758.7 478.66 L759.7 480.92 L760.7 482.40 L761.7 483.32 L762.7 483.90 L763.7 484.25 L764.7 484.45 L765.7 484.56 L766.7 484.59 L767.7 484.59 L768.7 484.56 L769.7 484.53 L770.7 484.51 L771.7 484.53 L772.7 484.64 L773.7 484.87 L774.7 485.26 L775.7 485.86 L776.7 486.67 L777.7 487.65 L778.7 488.70 L779.7 489.71 L780.7 490.58 L781.7 491.28 L782.7 491.86 L783.7 492.35 L784.7 492.80 L785.7 493.22 L786.7 493.61 L787.7 493.96 L788.7 494.27 L789.7 494.52 L790.7 494.70 L791.7 494.79 L792.7 494.78 L793.7 494.60 L794.7 494.21 L795.7 493.53 L796.7 492.49 L797.7 491.08 L798.7 489.36 L799.7 487.45 L800.7 485.53 L801.7 483.76 L802.7 482.25 L803.7 481.04 L804.7 480.10 L805.7 479.35 L806.7 478.74 L807.7 478.22 L808.7 477.77 L809.7 477.39 L810.7 477.06 L811.7 476.78 L812.7 476.54 L813.7 476.36 L814.7 476.22 L815.7 476.13 L816.7 476.11 L817.7 476.18 L818.7 476.36 L819.7 476.65 L820.7 477.04 L821.7 477.51 L822.7 478.04 L823.7 478.58 L824.7 479.11 L825.7 479.57 L826.7 479.94 L827.7 480.17 L828.7 480.22 L829.7 480.06 L830.7 479.69 L831.7 479.13 L832.7 478.41 L833.7 477.61 L834.7 476.78 L835.7 476.01 L836.7 475.37 L837.7 474.95 L838.7 474.83 L839.7 475.10 L840.7 475.85 L841.7 477.08 L842.7 478.76 L843.7 480.79 L844.7 482.98 L845.7 485.17 L846.7 487.18 L847.7 488.87 L848.7 490.16 L849.7 491.02 L850.7 491.49 L851.7 491.63 L852.7 491.53 L853.7 491.26 L854.7 490.86 L855.7 490.38 L856.7 489.87 L857.7 489.35 L858.7 488.87 L859.7 488.46 L860.7 488.17 L861.7 488.03 L862.7 488.10 L863.7 488.38 L864.7 488.87 L865.7 489.56 L866.7 490.40 L867.7 491.34 L868.7 492.32 L869.7 493.28 L870.7 494.15 L871.7 494.84 L872.7 495.28 L873.7 495.37 L874.7 495.09 L875.7 494.41 L876.7 493.37 L877.7 492.02 L878.7 490.47 L879.7 488.85 L880.7 487.36 L881.7 486.22 L882.7 485.53 L883.7 484.90 L884.7 483.36 L885.7 479.52 L886.7 472.30 L887.7 461.53 L888.7 448.11 L889.7 433.69 L890.7 419.94 L891.7 407.98 L892.7 398.22 L893.7 390.65 L894.7 385.17 L895.7 381.84 L896.7 380.81 L897.7 382.14 L898.7 385.78 L899.7 391.66 L900.7 399.86 L901.7 410.59 L902.7 423.61 L903.7 437.49 L904.7 449.97 L905.7 459.31 L906.7 465.20 L907.7 468.37 L908.7 469.78 L909.7 470.19 L910.7 470.02 L911.7 469.54 L912.7 468.88 L913.7 468.15 L914.7 467.45 L915.7 466.89 L916.7 466.58 L917.7 466.66 L918.7 467.25 L919.7 468.43 L920.7 470.20 L921.7 472.50 L922.7 475.18 L923.7 478.05 L924.7 480.88 L925.7 483.46 L926.7 485.66 L927.7 487.44 L928.7 488.85 L929.7 489.97 L930.7 490.87 L931.7 491.62 L932.7 492.26 L933.7 492.81 L934.7 493.29 L935.7 493.73 L936.7 494.14 L937.7 494.54 L938.7 494.93 L939.7 495.32 L940.7 495.71 L941.7 496.08 L942.7 496.44 L943.7 496.78 L944.7 497.10 L945.7 497.38 L946.7 497.63 L947.7 497.85 L948.7 498.01 L949.7 498.11 L950.7 498.15 L951.7 498.08 L952.7 497.90 L953.7 497.56 L954.7 497.05 L955.7 496.38 L956.7 495.56 L957.7 494.62 L958.7 493.62 L959.7 492.63 L960.7 491.74 L961.7 491.01 L962.7 490.43 L963.7 489.90 L964.7 489.22 L965.7 488.22 L966.7 486.86 L967.7 485.21 L968.7 483.38 L969.7 481.49 L970.7 479.67 L971.7 478.03 L972.7 476.69 L973.7 475.68 L974.7 474.86 L975.7 473.89 L976.7 472.38 L977.7 470.05 L978.7 466.88 L979.7 463.12 L980.7 459.10 L981.7 455.13 L982.7 451.38 L983.7 447.99 L984.7 445.19 L985.7 443.25 L986.7 442.46 L987.7 443.01 L988.7 444.99 L989.7 448.39 L990.7 453.13 L991.7 458.97 L992.7 465.45 L993.7 471.88 L994.7 477.50 L995.7 481.74 L996.7 484.39 L997.7 485.74 L998.7 486.37 L999.7 486.88 L1000.7 487.61 L1001.7 488.63 L1002.7 489.84 L1003.7 491.10 L1004.7 492.28 L1005.7 493.28 L1006.7 494.06 L1007.7 494.56 L1008.7 494.78 L1009.7 494.73 L1010.7 494.45 L1011.7 494.01 L1012.7 493.47 L1013.7 492.88 L1014.7 492.28 L1015.7 491.73 L1016.7 491.27 L1017.7 490.94 L1018.7 490.78 L1019.7 490.82 L1020.7 491.07 L1021.7 491.52 L1022.7 492.15 L1023.7 492.89 L1024.7 493.71 L1025.7 494.56 L1026.7 495.39 L1027.7 496.14 L1028.7 496.77 L1029.7 497.20 L1030.7 497.40 L1031.7 497.32 L1032.7 496.96 L1033.7 496.35 L1034.7 495.52 L1035.7 494.52 L1036.7 493.42 L1037.7 492.28 L1038.7 491.21 L1039.7 490.31 L1040.7 489.66 L1041.7 489.23 L1042.7 488.83 L1043.7 488.10 L1044.7 486.69 L1045.7 484.45 L1046.7 481.51 L1047.7 478.25 L1048.7 475.10 L1049.7 472.40 L1050.7 470.31 L1051.7 468.81 L1052.7 467.78 L1053.7 467.09 L1054.7 466.63 L1055.7 466.32 L1056.7 466.14 L1057.7 466.06 L1058.7 466.07 L1059.7 466.17 L1060.7 466.37 L1061.7 466.67 L1062.7 467.08 L1063.7 467.63 L1064.7 468.37 L1065.7 469.38 L1066.7 470.74 L1067.7 472.50 L1068.7 474.63 L1069.7 477.05 L1070.7 479.61 L1071.7 482.14 L1072.7 484.44 L1073.7 486.35 L1074.7 487.73 L1075.7 488.51 L1076.7 488.68 L1077.7 488.31 L1078.7 487.48 L1079.7 486.32 L1080.7 484.92 L1081.7 483.38 L1082.7 481.80 L1083.7 480.27 L1084.7 478.90 L1085.7 477.81 L1086.7 477.11 L1087.7 476.89 L1088.7 477.19 L1089.7 477.98 L1090.7 479.18 L1091.7 480.67 L1092.7 482.31 L1093.7 483.90 L1094.7 485.27 L1095.7 486.33 L1096.7 487.05 L1097.7 487.52 L1098.7 487.88 L1099.7 488.29 L1100.7 488.88 L1101.7 489.71 L1102.7 490.77 L1103.7 491.99 L1104.7 493.27 L1105.7 494.52 L1106.7 495.65 L1107.7 496.57 L1108.7 497.19 L1109.7 497.45 L1110.7 497.32 L1111.7 496.84 L1112.7 496.06 L1113.7 495.07 L1114.7 493.96 L1115.7 492.81 L1116.7 491.73 L1117.7 490.80 L1118.7 490.09 L1119.7 489.60 L1120.7 489.30 L1121.7 489.12 L1122.7 488.96 L1123.7 488.75 L1124.7 488.47 L1125.7 488.12 L1126.7 487.73 L1127.7 487.31 L1128.7 486.87 L1129.7 486.42 L1130.7 485.97 L1131.7 485.50 L1132.7 485.01 L1133.7 484.48 L1134.7 483.93 L1135.7 483.37 L1136.7 482.80 L1137.7 482.25 L1138.7 481.75 L1139.7 481.29 L1140.7 480.91 L1141.7 480.62 L1142.7 480.45 L1143.7 480.42 L1144.7 480.54 L1145.7 480.80 L1146.7 481.20 L1147.7 481.69 L1148.7 482.24 L1149.7 482.82 L1150.7 483.37 L1151.7 483.86 L1152.7 484.24 L1153.7 484.47 L1154.7 484.51 L1155.7 484.34 L1156.7 483.94 L1157.7 483.34 L1158.7 482.58 L1159.7 481.72 L1160.7 480.83 L1161.7 479.98 L1162.7 479.24 L1163.7 478.68 L1164.7 478.36 L1165.7 478.31 L1166.7 478.53 L1167.7 478.99 L1168.7 479.65 L1169.7 480.45 L1170.7 481.35 L1171.7 482.30 L1172.7 483.23 L1173.7 484.08 L1174.7 484.79 L1175.7 485.35 L1176.7 485.81 L1177.7 486.29 L1178.7 486.92 L1179.7 487.79 L1180.7 488.91 L1181.7 490.23 L1182.7 491.65 L1183.7 493.09 L1184.7 494.45 L1185.7 495.65 L1186.7 496.62 L1187.7 497.28 L1188.7 497.59 L1189.7 497.52 L1190.7 497.11 L1191.7 496.42 L1192.7 495.53 L1193.7 494.50 L1194.7 493.42 L1195.7 492.38 L1196.7 491.50 L1197.7 490.84 L1198.7 490.35 L1199.7 489.72 L1200.7 488.56 L1201.7 486.59 L1202.7 483.83 L1203.7 480.53 L1204.7 477.01 L1205.7 473.57 L1206.7 470.44 L1207.7 467.77 L1208.7 465.65 L1209.7 464.15 L1210.7 463.36 L1211.7 463.32 L1212.7 464.02 L1213.7 465.39 L1214.7 467.32 L1215.7 469.72 L1216.7 472.42 L1217.7 475.12 L1218.7 477.43 L1219.7 479.07 L1220.7 480.04 L1221.7 480.52 L1222.7 480.83 L1223.7 481.17 L1224.7 481.66 L1225.7 482.30 L1226.7 483.04 L1227.7 483.80 L1228.7 484.54 L1229.7 485.21 L1230.7 485.77 L1231.7 486.23 L1232.7 486.58 L1233.7 486.85 L1234.7 487.04 L1235.7 487.20 L1236.7 487.31 L1237.7 487.41 L1238.7 487.50 L1239.7 487.58 L1240.7 487.67 L1241.7 487.75 L1242.7 487.83 L1243.7 487.89 L1244.7 487.95 L1245.7 488.03 L1246.7 488.13 L1247.7 488.27 L1248.7 488.46 L1249.7 488.67 L1250.7 488.91 L1251.7 489.16 L1252.7 489.41 L1253.7 489.64 L1254.7 489.85 L1255.7 489.97 L1256.7 489.95 L1257.7 489.73 L1258.7 489.30 L1259.7 488.71 L1260.7 488.03 L1261.7 487.32 L1262.7 486.64 L1263.7 486.03 L1264.7 485.54 L1265.7 485.20 L1266.7 484.96 L1267.7 484.73 L1268.7 484.42 L1269.7 483.95 L1270.7 483.30 L1271.7 482.53 L1272.7 481.70 L1273.7 480.89 L1274.7 480.17 L1275.7 479.59 L1276.7 479.20 L1277.7 479.03 L1278.7 479.07 L1279.7 479.33 L1280.7 479.75 L1281.7 480.29 L1282.7 480.90 L1283.7 481.53 L1284.7 482.15 L1285.7 482.70 L1286.7 483.16 L1287.7 483.48 L1288.7 483.62 L1289.7 483.56 L1290.7 483.31 L1291.7 482.87 L1292.7 482.29 L1293.7 481.59 L1294.7 480.82 L1295.7 480.01 L1296.7 479.19 L1297.7 478.42 L1298.7 477.76 L1299.7 477.28 L1300.7 477.07 L1301.7 477.27 L1302.7 478.06 L1303.7 479.65 L1304.7 482.05 L1305.7 484.95 L1306.7 487.72 L1307.7 489.86 L1308.7 491.25 L1309.7 492.08 L1310.7 492.58 L1311.7 492.91 L1312.7 493.16 L1313.7 493.35 L1314.7 493.51 L1315.7 493.64 L1316.7 493.75 L1317.7 493.85 L1318.7 493.94 L1319.7 494.02 L1320.7 494.10 L1321.7 494.17" stroke="#3a9fd6" stroke-width="2.4" fill="none" stroke-linejoin="round"/>
  <!-- legends -->
  <path d="M649 610 H662" stroke="#3a9fd6" stroke-width="2"/>
  <path d="M791 610 H804" stroke="#a9bccb" stroke-width="1.7" stroke-dasharray="0.1 4.2" stroke-linecap="round"/>
</svg>
<div class="t gr" style="left:274px;top:331px;font-size:11px">$6T</div>
<div class="t gr" style="left:274px;top:385px;font-size:11px">$4T</div>
<div class="t gr" style="left:274px;top:438px;font-size:11px">$2T</div>
<div class="t gr" style="left:274px;top:492px;font-size:11px">$0</div>
<div class="t gr" style="left:274px;top:545px;font-size:11px">-$2T</div>
<div class="t gr" style="left:284px;top:567px;width:80px;text-align:center;font-size:11px">12 Feb</div>
<div class="t gr" style="left:351px;top:567px;width:80px;text-align:center;font-size:11px">18 Feb</div>
<div class="t gr" style="left:419px;top:567px;width:80px;text-align:center;font-size:11px">24 Feb</div>
<div class="t gr" style="left:486px;top:567px;width:80px;text-align:center;font-size:11px">2 Mar</div>
<div class="t gr" style="left:553px;top:567px;width:80px;text-align:center;font-size:11px">8 Mar</div>
<div class="t gr" style="left:621px;top:567px;width:80px;text-align:center;font-size:11px">14 Mar</div>
<div class="t gr" style="left:688px;top:567px;width:80px;text-align:center;font-size:11px">20 Mar</div>
<div class="t gr" style="left:755px;top:567px;width:80px;text-align:center;font-size:11px">26 Mar</div>
<div class="t gr" style="left:823px;top:567px;width:80px;text-align:center;font-size:11px">1 Apr</div>
<div class="t gr" style="left:890px;top:567px;width:80px;text-align:center;font-size:11px">7 Apr</div>
<div class="t gr" style="left:957px;top:567px;width:80px;text-align:center;font-size:11px">13 Apr</div>
<div class="t gr" style="left:1025px;top:567px;width:80px;text-align:center;font-size:11px">19 Apr</div>
<div class="t gr" style="left:1092px;top:567px;width:80px;text-align:center;font-size:11px">25 Apr</div>
<div class="t gr" style="left:1159px;top:567px;width:80px;text-align:center;font-size:11px">1 May</div>
<div class="t gr" style="left:1227px;top:567px;width:80px;text-align:center;font-size:11px">7 May</div>
<div class="t gr" style="left:668px;top:604px;font-size:11px">12 Feb–12 May 2025</div>
<div class="t gr" style="left:809px;top:604px;font-size:11px">14 Nov 2024–11 Feb 2025</div>

<!-- breakdown -->
<div class="card" style="left:1359px;top:249px;width:535px;height:389px"></div>
<div class="ttl" style="left:1375px;top:266px">Total sales breakdown</div>
<div class="abs" style="left:1375px;top:293.0px;width:503px;height:37.5px;border-radius:8px;background:#f7f7f7"></div><div class="t" style="left:1387px;top:305.0px;font-size:13.5px;letter-spacing:0.1px;color:#4a5494">Gross sales</div><div class="t" style="left:1616px;top:304.5px;width:200px;text-align:right;font-size:14px;letter-spacing:0.3px;color:#303030">$49,089.04</div><div class="t" style="left:1815px;top:306.0px;width:58px;text-align:center;font-size:11.5px;font-weight:bold;letter-spacing:0.3px;color:#1f7a50"><svg width="7" height="7" viewBox="0 0 7 7" style="display:inline-block;vertical-align:0px;margin-right:4px"><path d="M1.1 5.9 L4.2 2.8" stroke="currentColor" stroke-width="1.9"/><path d="M2.0 0.6 H6.4 V5.0 Z" fill="currentColor"/></svg>434%</div><div class="abs" style="left:1375px;top:334.6px;width:503px;height:37.5px;border-radius:8px;background:#f7f7f7"></div><div class="t" style="left:1387px;top:346.6px;font-size:13.5px;letter-spacing:0.1px;color:#4a5494">Discounts</div><div class="t" style="left:1616px;top:346.1px;width:200px;text-align:right;font-size:14px;letter-spacing:0.3px;color:#303030">-$2,910.89</div><div class="t" style="left:1815px;top:347.6px;width:58px;text-align:center;font-size:11.5px;font-weight:bold;letter-spacing:0.3px;color:#5a5a5a"><svg width="7" height="7" viewBox="0 0 7 7" style="display:inline-block;vertical-align:0px;margin-right:4px"><path d="M1.1 1.1 L4.2 4.2" stroke="currentColor" stroke-width="1.9"/><path d="M2.0 6.4 H6.4 V2.0 Z" fill="currentColor"/></svg>126%</div><div class="abs" style="left:1375px;top:376.2px;width:503px;height:37.5px;border-radius:8px;background:#f7f7f7"></div><div class="t" style="left:1387px;top:388.2px;font-size:13.5px;letter-spacing:0.1px;color:#4a5494">Returns</div><div class="t" style="left:1616px;top:387.7px;width:200px;text-align:right;font-size:14px;letter-spacing:0.3px;color:#303030">-$301.50</div><div class="t" style="left:1815px;top:389.2px;width:58px;text-align:center;font-size:11.5px;font-weight:bold;letter-spacing:0.3px;color:#1f7a50"><svg width="7" height="7" viewBox="0 0 7 7" style="display:inline-block;vertical-align:0px;margin-right:4px"><path d="M1.1 1.1 L4.2 4.2" stroke="currentColor" stroke-width="1.9"/><path d="M2.0 6.4 H6.4 V2.0 Z" fill="currentColor"/></svg>39%</div><div class="abs" style="left:1375px;top:417.8px;width:503px;height:37.5px;border-radius:8px;background:#f7f7f7"></div><div class="t" style="left:1387px;top:429.8px;font-size:13.5px;letter-spacing:0.1px;color:#4a5494">Net sales</div><div class="t" style="left:1616px;top:429.3px;width:200px;text-align:right;font-size:14px;letter-spacing:0.3px;color:#303030">$45,876.65</div><div class="t" style="left:1815px;top:430.8px;width:58px;text-align:center;font-size:11.5px;font-weight:bold;letter-spacing:0.3px;color:#1f7a50"><svg width="7" height="7" viewBox="0 0 7 7" style="display:inline-block;vertical-align:0px;margin-right:4px"><path d="M1.1 5.9 L4.2 2.8" stroke="currentColor" stroke-width="1.9"/><path d="M2.0 0.6 H6.4 V5.0 Z" fill="currentColor"/></svg>520%</div><div class="abs" style="left:1375px;top:459.4px;width:503px;height:37.5px;border-radius:8px;background:#f7f7f7"></div><div class="t" style="left:1387px;top:471.4px;font-size:13.5px;letter-spacing:0.1px;color:#4a5494">Shipping charges</div><div class="t" style="left:1616px;top:470.9px;width:200px;text-align:right;font-size:14px;letter-spacing:0.3px;color:#303030">$269.03</div><div class="t" style="left:1815px;top:472.4px;width:58px;text-align:center;font-size:11.5px;font-weight:bold;letter-spacing:0.3px;color:#5a5a5a"><svg width="7" height="7" viewBox="0 0 7 7" style="display:inline-block;vertical-align:0px;margin-right:4px"><path d="M1.1 1.1 L4.2 4.2" stroke="currentColor" stroke-width="1.9"/><path d="M2.0 6.4 H6.4 V2.0 Z" fill="currentColor"/></svg>19%</div><div class="abs" style="left:1375px;top:501.0px;width:503px;height:37.5px;border-radius:8px;background:#f7f7f7"></div><div class="t" style="left:1387px;top:513.0px;font-size:13.5px;letter-spacing:0.1px;color:#4a5494">Return fees</div><div class="t" style="left:1616px;top:512.5px;width:200px;text-align:right;font-size:14px;letter-spacing:0.3px;color:#303030">$0.00</div><div class="t" style="left:1815px;top:514.0px;width:58px;text-align:center;font-size:11.5px;font-weight:bold;letter-spacing:0.3px;color:#8a8a8a">—</div><div class="abs" style="left:1375px;top:542.6px;width:503px;height:37.5px;border-radius:8px;background:#f7f7f7"></div><div class="t" style="left:1387px;top:554.6px;font-size:13.5px;letter-spacing:0.1px;color:#4a5494">Taxes</div><div class="t" style="left:1616px;top:554.1px;width:200px;text-align:right;font-size:14px;letter-spacing:0.3px;color:#303030">$2,991.13</div><div class="t" style="left:1815px;top:555.6px;width:58px;text-align:center;font-size:11.5px;font-weight:bold;letter-spacing:0.3px;color:#8a8a8a"><svg width="7" height="7" viewBox="0 0 7 7" style="display:inline-block;vertical-align:0px;margin-right:4px"><path d="M1.1 5.9 L4.2 2.8" stroke="currentColor" stroke-width="1.9"/><path d="M2.0 0.6 H6.4 V5.0 Z" fill="currentColor"/></svg>622%</div><div class="abs" style="left:1375px;top:584.2px;width:503px;height:37.5px;border-radius:8px;background:#f7f7f7"></div><div class="t" style="left:1387px;top:596.2px;font-size:13.5px;letter-spacing:0.1px;color:#4a5494">Total sales</div><div class="t" style="left:1616px;top:595.7px;width:200px;text-align:right;font-size:14px;letter-spacing:0.3px;color:#303030">$49,136.81</div><div class="t" style="left:1815px;top:597.2px;width:58px;text-align:center;font-size:11.5px;font-weight:bold;letter-spacing:0.3px;color:#1f7a50"><svg width="7" height="7" viewBox="0 0 7 7" style="display:inline-block;vertical-align:0px;margin-right:4px"><path d="M1.1 5.9 L4.2 2.8" stroke="currentColor" stroke-width="1.9"/><path d="M2.0 0.6 H6.4 V5.0 Z" fill="currentColor"/></svg>503%</div>

<!-- row 2 -->
<div class="card" style="left:256px;top:654px;width:535px;height:254px"></div>
<div class="ttl" style="left:272px;top:671px">Total sales by sales channel</div>
<svg class="abs" style="left:296px;top:705px" width="180" height="180" viewBox="0 0 180 180">
  <path d="M91.53 2.41 A87.6 87.6 0 1 1 53.67 10.29 L60.85 26.03 A70.3 70.3 0 1 0 91.23 19.71 Z" fill="#36a5e8"/><path d="M57.47 8.66 A87.6 87.6 0 0 1 85.42 2.52 L86.32 19.80 A70.3 70.3 0 0 0 63.89 24.73 Z" fill="#7a26e6"/><path d="M88.01 2.42 A87.6 87.6 0 0 1 88.93 2.41 L89.14 19.71 A70.3 70.3 0 0 0 88.41 19.72 Z" fill="#8a8fa8"/>
</svg>
<div class="t" style="left:296px;top:775.5px;width:180px;text-align:center;font-size:20px;-webkit-text-stroke:0.4px currentColor;letter-spacing:-0.2px;color:#303030">$49.1T</div>
<div class="t g" style="left:296px;top:802px;width:180px;text-align:center;font-size:12px;-webkit-text-stroke:0.35px currentColor;letter-spacing:0.2px"><svg width="7" height="7" viewBox="0 0 7 7" style="display:inline-block;vertical-align:0px;margin-right:4px"><path d="M1.1 5.9 L4.2 2.8" stroke="currentColor" stroke-width="1.9"/><path d="M2.0 0.6 H6.4 V5.0 Z" fill="currentColor"/></svg>503%</div>
<div class="abs" style="left:504px;top:747px;width:11.5px;height:11.5px;border-radius:2px;background:#3aa7e8"></div>
<div class="abs" style="left:504px;top:775px;width:11.5px;height:11.5px;border-radius:2px;background:#7a2ae0"></div>
<div class="abs" style="left:504px;top:803px;width:11.5px;height:11.5px;border-radius:2px;background:#6b7be0"></div>
<div class="abs" style="left:504px;top:831px;width:11.5px;height:11.5px;border-radius:2px;background:#d93ab4"></div>
<div class="t gr" style="left:519px;top:746px;font-size:12.5px">Point of Sale</div>
<div class="t gr" style="left:519px;top:774px;font-size:12.5px">Online Store</div>
<div class="t gr" style="left:519px;top:802px;font-size:12.5px">Facebook &amp; Instagr...</div>
<div class="t gr" style="left:519px;top:830px;font-size:12.5px">Shop</div>
<div class="t gr" style="left:613px;top:746px;width:100px;text-align:right;font-size:12.5px">$46T</div>
<div class="t gr" style="left:613px;top:774px;width:100px;text-align:right;font-size:12.5px">$2.8T</div>
<div class="t gr" style="left:613px;top:802px;width:100px;text-align:right;font-size:12.5px">$294.93</div>
<div class="t gr" style="left:613px;top:830px;width:100px;text-align:right;font-size:12.5px">$0</div>
<div class="t g" style="left:716px;top:748.5px;font-size:9px;font-weight:bold;letter-spacing:-0.2px"><svg width="7" height="7" viewBox="0 0 7 7" style="display:inline-block;vertical-align:0px;margin-right:4px"><path d="M1.1 5.9 L4.2 2.8" stroke="currentColor" stroke-width="1.9"/><path d="M2.0 0.6 H6.4 V5.0 Z" fill="currentColor"/></svg>1.1K%</div>
<div class="t" style="left:716px;top:775px;font-size:11px;font-weight:bold;color:#555"><svg width="7" height="7" viewBox="0 0 7 7" style="display:inline-block;vertical-align:0px;margin-right:4px"><path d="M1.1 1.1 L4.2 4.2" stroke="currentColor" stroke-width="1.9"/><path d="M2.0 6.4 H6.4 V2.0 Z" fill="currentColor"/></svg>29%</div>
<div class="t g" style="left:716px;top:803px;font-size:11px;font-weight:bold"><svg width="7" height="7" viewBox="0 0 7 7" style="display:inline-block;vertical-align:0px;margin-right:4px"><path d="M1.1 5.9 L4.2 2.8" stroke="currentColor" stroke-width="1.9"/><path d="M2.0 0.6 H6.4 V5.0 Z" fill="currentColor"/></svg>15%</div>
<div class="t" style="left:716px;top:832px;font-size:9.5px;font-weight:bold;letter-spacing:-0.1px;color:#555"><svg width="7" height="7" viewBox="0 0 7 7" style="display:inline-block;vertical-align:0px;margin-right:4px"><path d="M1.1 1.1 L4.2 4.2" stroke="currentColor" stroke-width="1.9"/><path d="M2.0 6.4 H6.4 V2.0 Z" fill="currentColor"/></svg>100%</div>

<div class="card" style="left:807px;top:654px;width:535px;height:254px"></div>
<div class="ttl" style="left:823px;top:671px">Average order value over time</div>
<svg class="abs" style="left:0;top:0" width="1919" height="951">
  <path d="M877 742.5 H1322 M877 820 H1322" stroke="#ebebeb" stroke-width="1"/>
  <path d="M877.8 820.00 L878.3 820.00 L879.3 820.01 L880.3 820.01 L881.3 820.02 L882.3 820.03 L883.3 820.03 L884.3 820.04 L885.3 820.05 L886.3 820.06 L887.3 820.07 L888.3 820.08 L889.3 820.09 L890.3 820.10 L891.3 820.11 L892.3 820.12 L893.3 820.13 L894.3 820.14 L895.3 820.14 L896.3 820.15 L897.3 820.16 L898.3 820.17 L899.3 820.17 L900.3 820.18 L901.3 820.19 L902.3 820.19 L903.3 820.20 L904.3 820.21 L905.3 820.21 L906.3 820.21 L907.3 820.22 L908.3 820.22 L909.3 820.22 L910.3 820.22 L911.3 820.22 L912.3 820.22 L913.3 820.22 L914.3 820.21 L915.3 820.21 L916.3 820.20 L917.3 820.19 L918.3 820.18 L919.3 820.17 L920.3 820.15 L921.3 820.13 L922.3 820.10 L923.3 820.07 L924.3 820.03 L925.3 819.97 L926.3 819.88 L927.3 819.74 L928.3 819.39 L929.3 818.60 L930.3 818.06 L931.3 818.57 L932.3 819.29 L933.3 819.69 L934.3 819.89 L935.3 820.01 L936.3 820.09 L937.3 820.15 L938.3 820.19 L939.3 820.24 L940.3 820.27 L941.3 820.30 L942.3 820.33 L943.3 820.35 L944.3 820.37 L945.3 820.39 L946.3 820.41 L947.3 820.42 L948.3 820.43 L949.3 820.43 L950.3 820.44 L951.3 820.44 L952.3 820.44 L953.3 820.43 L954.3 820.42 L955.3 820.41 L956.3 820.40 L957.3 820.38 L958.3 820.36 L959.3 820.33 L960.3 820.29 L961.3 820.25 L962.3 820.20 L963.3 820.14 L964.3 820.05 L965.3 819.93 L966.3 819.74 L967.3 819.41 L968.3 818.79 L969.3 817.77 L970.3 816.86 L971.3 817.12 L972.3 818.33 L973.3 819.31 L974.3 819.79 L975.3 820.01 L976.3 820.15 L977.3 820.25 L978.3 820.34 L979.3 820.41 L980.3 820.47 L981.3 820.53 L982.3 820.58 L983.3 820.62 L984.3 820.65 L985.3 820.68 L986.3 820.70 L987.3 820.71 L988.3 820.72 L989.3 820.71 L990.3 820.70 L991.3 820.68 L992.3 820.64 L993.3 820.59 L994.3 820.52 L995.3 820.43 L996.3 820.30 L997.3 820.12 L998.3 819.79 L999.3 819.12 L1000.3 817.58 L1001.3 815.33 L1002.3 814.56 L1003.3 816.26 L1004.3 818.52 L1005.3 819.89 L1006.3 820.45 L1007.3 820.65 L1008.3 820.69 L1009.3 820.62 L1010.3 820.46 L1011.3 820.17 L1012.3 819.61 L1013.3 818.58 L1014.3 817.26 L1015.3 816.48 L1016.3 817.01 L1017.3 818.39 L1018.3 819.48 L1019.3 820.02 L1020.3 820.31 L1021.3 820.54 L1022.3 820.75 L1023.3 820.92 L1024.3 821.07 L1025.3 821.18 L1026.3 821.24 L1027.3 821.26 L1028.3 821.21 L1029.3 821.07 L1030.3 820.81 L1031.3 820.31 L1032.3 819.32 L1033.3 817.39 L1034.3 814.11 L1035.3 809.95 L1036.3 806.67 L1037.3 805.66 L1038.3 807.08 L1039.3 810.51 L1040.3 813.88 L1041.3 816.99 L1042.3 819.28 L1043.3 819.99 L1044.3 820.17 L1045.3 820.28 L1046.3 820.37 L1047.3 820.45 L1048.3 820.52 L1049.3 820.58 L1050.3 820.63 L1051.3 820.68 L1052.3 820.72 L1053.3 820.75 L1054.3 820.79 L1055.3 820.81 L1056.3 820.84 L1057.3 820.86 L1058.3 820.87 L1059.3 820.89 L1060.3 820.90 L1061.3 820.91 L1062.3 820.91 L1063.3 820.92 L1064.3 820.92 L1065.3 820.92 L1066.3 820.91 L1067.3 820.91 L1068.3 820.90 L1069.3 820.89 L1070.3 820.87 L1071.3 820.86 L1072.3 820.84 L1073.3 820.82 L1074.3 820.79 L1075.3 820.77 L1076.3 820.74 L1077.3 820.71 L1078.3 820.67 L1079.3 820.63 L1080.3 820.58 L1081.3 820.54 L1082.3 820.48 L1083.3 820.42 L1084.3 820.35 L1085.3 820.27 L1086.3 820.18 L1087.3 820.07 L1088.3 819.92 L1089.3 819.69 L1090.3 819.17 L1091.3 818.07 L1092.3 817.45 L1093.3 818.37 L1094.3 819.46 L1095.3 820.01 L1096.3 820.28 L1097.3 820.46 L1098.3 820.59 L1099.3 820.70 L1100.3 820.79 L1101.3 820.86 L1102.3 820.92 L1103.3 820.96 L1104.3 820.98 L1105.3 820.99 L1106.3 820.98 L1107.3 820.96 L1108.3 820.92 L1109.3 820.85 L1110.3 820.76 L1111.3 820.63 L1112.3 820.45 L1113.3 820.16 L1114.3 819.59 L1115.3 818.15 L1116.3 815.68 L1117.3 814.96 L1118.3 817.09 L1119.3 818.88 L1120.3 819.65 L1121.3 820.02 L1122.3 820.24 L1123.3 820.40 L1124.3 820.51 L1125.3 820.59 L1126.3 820.66 L1127.3 820.71 L1128.3 820.75 L1129.3 820.77 L1130.3 820.79 L1131.3 820.80 L1132.3 820.80 L1133.3 820.80 L1134.3 820.79 L1135.3 820.77 L1136.3 820.76 L1137.3 820.73 L1138.3 820.70 L1139.3 820.67 L1140.3 820.63 L1141.3 820.59 L1142.3 820.55 L1143.3 820.50 L1144.3 820.45 L1145.3 820.40 L1146.3 820.34 L1147.3 820.28 L1148.3 820.21 L1149.3 820.14 L1150.3 820.07 L1151.3 819.97 L1152.3 819.25 L1153.3 814.73 L1154.3 801.95 L1155.3 786.24 L1156.3 777.05 L1157.3 776.19 L1158.3 781.16 L1159.3 790.42 L1160.3 803.77 L1161.3 815.21 L1162.3 819.37 L1163.3 820.03 L1164.3 820.18 L1165.3 820.28 L1166.3 820.36 L1167.3 820.43 L1168.3 820.48 L1169.3 820.52 L1170.3 820.56 L1171.3 820.58 L1172.3 820.60 L1173.3 820.61 L1174.3 820.62 L1175.3 820.62 L1176.3 820.62 L1177.3 820.60 L1178.3 820.59 L1179.3 820.56 L1180.3 820.53 L1181.3 820.49 L1182.3 820.44 L1183.3 820.38 L1184.3 820.31 L1185.3 820.21 L1186.3 820.08 L1187.3 819.87 L1188.3 819.46 L1189.3 818.67 L1190.3 817.76 L1191.3 817.82 L1192.3 818.85 L1193.3 819.58 L1194.3 819.87 L1195.3 820.02 L1196.3 820.12 L1197.3 820.21 L1198.3 820.28 L1199.3 820.35 L1200.3 820.41 L1201.3 820.46 L1202.3 820.51 L1203.3 820.56 L1204.3 820.60 L1205.3 820.64 L1206.3 820.68 L1207.3 820.71 L1208.3 820.74 L1209.3 820.77 L1210.3 820.79 L1211.3 820.81 L1212.3 820.83 L1213.3 820.85 L1214.3 820.86 L1215.3 820.87 L1216.3 820.88 L1217.3 820.89 L1218.3 820.89 L1219.3 820.89 L1220.3 820.88 L1221.3 820.87 L1222.3 820.86 L1223.3 820.85 L1224.3 820.82 L1225.3 820.80 L1226.3 820.76 L1227.3 820.73 L1228.3 820.68 L1229.3 820.62 L1230.3 820.56 L1231.3 820.48 L1232.3 820.38 L1233.3 820.26 L1234.3 820.09 L1235.3 819.56 L1236.3 817.73 L1237.3 814.80 L1238.3 812.03 L1239.3 809.51 L1240.3 808.43 L1241.3 808.74 L1242.3 810.41 L1243.3 813.27 L1244.3 816.26 L1245.3 818.37 L1246.3 819.50 L1247.3 820.02 L1248.3 820.27 L1249.3 820.42 L1250.3 820.50 L1251.3 820.50 L1252.3 820.41 L1253.3 820.15 L1254.3 819.53 L1255.3 818.36 L1256.3 816.76 L1257.3 815.47 L1258.3 815.35 L1259.3 816.58 L1260.3 818.42 L1261.3 819.78 L1262.3 820.00 L1263.3 819.17 L1264.3 818.29 L1265.3 818.43 L1266.3 819.31 L1267.3 819.86 L1268.3 820.01 L1269.3 820.07 L1270.3 820.11 L1271.3 820.15 L1272.3 820.18 L1273.3 820.20 L1274.3 820.22 L1275.3 820.24 L1276.3 820.25 L1277.3 820.26 L1278.3 820.27 L1279.3 820.28 L1280.3 820.29 L1281.3 820.29 L1282.3 820.29 L1283.3 820.29 L1284.3 820.30 L1285.3 820.29 L1286.3 820.29 L1287.3 820.29 L1288.3 820.29 L1289.3 820.28 L1290.3 820.28 L1291.3 820.27 L1292.3 820.27 L1293.3 820.26 L1294.3 820.25 L1295.3 820.25 L1296.3 820.24 L1297.3 820.23 L1298.3 820.22 L1299.3 820.21 L1300.3 820.20 L1301.3 820.19 L1302.3 820.18 L1303.3 820.17 L1304.3 820.16 L1305.3 820.15 L1306.3 820.14 L1307.3 820.13 L1308.3 820.12 L1309.3 820.11 L1310.3 820.10 L1311.3 820.09 L1312.3 820.08 L1313.3 820.07 L1314.3 820.05 L1315.3 820.04 L1316.3 820.03 L1317.3 820.03 L1318.3 820.02 L1319.3 820.01 L1320.3 820.00 L1321.3 820.00" stroke="#9eafbd" stroke-width="1.8" fill="none" stroke-dasharray="0.1 3.6" stroke-linecap="round"/>
  <path d="M877.8 811.17 L878.3 812.42 L879.3 815.52 L880.3 818.06 L881.3 819.51 L882.3 820.18 L883.3 820.43 L884.3 820.47 L885.3 820.40 L886.3 820.28 L887.3 820.11 L888.3 819.94 L889.3 819.78 L890.3 819.67 L891.3 819.65 L892.3 819.80 L893.3 820.13 L894.3 820.60 L895.3 821.04 L896.3 821.28 L897.3 821.28 L898.3 821.07 L899.3 820.72 L900.3 820.30 L901.3 819.88 L902.3 819.49 L903.3 819.17 L904.3 818.93 L905.3 818.79 L906.3 818.72 L907.3 818.72 L908.3 818.77 L909.3 818.86 L910.3 818.97 L911.3 819.09 L912.3 819.23 L913.3 819.38 L914.3 819.53 L915.3 819.69 L916.3 819.84 L917.3 819.99 L918.3 820.13 L919.3 820.26 L920.3 820.38 L921.3 820.48 L922.3 820.57 L923.3 820.65 L924.3 820.74 L925.3 820.82 L926.3 820.90 L927.3 820.98 L928.3 821.05 L929.3 821.10 L930.3 821.15 L931.3 821.18 L932.3 821.20 L933.3 821.19 L934.3 821.17 L935.3 821.13 L936.3 821.06 L937.3 820.96 L938.3 820.83 L939.3 820.69 L940.3 820.52 L941.3 820.35 L942.3 820.16 L943.3 819.96 L944.3 819.76 L945.3 819.56 L946.3 819.36 L947.3 819.16 L948.3 818.97 L949.3 818.80 L950.3 818.65 L951.3 818.55 L952.3 818.56 L953.3 818.79 L954.3 819.20 L955.3 819.52 L956.3 819.68 L957.3 819.77 L958.3 819.85 L959.3 819.93 L960.3 820.01 L961.3 820.08 L962.3 820.15 L963.3 820.22 L964.3 820.28 L965.3 820.33 L966.3 820.37 L967.3 820.40 L968.3 820.41 L969.3 820.41 L970.3 820.38 L971.3 820.32 L972.3 820.23 L973.3 820.08 L974.3 819.83 L975.3 819.40 L976.3 818.73 L977.3 817.77 L978.3 816.51 L979.3 815.07 L980.3 813.81 L981.3 813.28 L982.3 814.09 L983.3 816.09 L984.3 817.95 L985.3 818.95 L986.3 819.36 L987.3 819.52 L988.3 819.56 L989.3 819.54 L990.3 819.49 L991.3 819.40 L992.3 819.31 L993.3 819.20 L994.3 819.09 L995.3 818.99 L996.3 818.89 L997.3 818.80 L998.3 818.73 L999.3 818.68 L1000.3 818.67 L1001.3 818.69 L1002.3 818.77 L1003.3 818.89 L1004.3 819.06 L1005.3 819.26 L1006.3 819.48 L1007.3 819.73 L1008.3 819.99 L1009.3 820.26 L1010.3 820.53 L1011.3 820.80 L1012.3 821.06 L1013.3 821.29 L1014.3 821.48 L1015.3 821.61 L1016.3 821.62 L1017.3 821.43 L1018.3 820.89 L1019.3 820.08 L1020.3 819.38 L1021.3 818.95 L1022.3 818.72 L1023.3 818.58 L1024.3 818.48 L1025.3 818.39 L1026.3 818.32 L1027.3 818.26 L1028.3 818.20 L1029.3 818.16 L1030.3 818.12 L1031.3 818.08 L1032.3 818.05 L1033.3 818.03 L1034.3 818.01 L1035.3 817.99 L1036.3 817.99 L1037.3 817.99 L1038.3 818.00 L1039.3 818.02 L1040.3 818.05 L1041.3 818.13 L1042.3 818.36 L1043.3 818.94 L1044.3 819.71 L1045.3 820.21 L1046.3 820.41 L1047.3 820.48 L1048.3 820.50 L1049.3 820.49 L1050.3 820.47 L1051.3 820.44 L1052.3 820.40 L1053.3 820.35 L1054.3 820.30 L1055.3 820.25 L1056.3 820.19 L1057.3 820.13 L1058.3 820.07 L1059.3 820.01 L1060.3 819.95 L1061.3 819.88 L1062.3 819.82 L1063.3 819.75 L1064.3 819.69 L1065.3 819.62 L1066.3 819.56 L1067.3 819.49 L1068.3 819.43 L1069.3 819.37 L1070.3 819.31 L1071.3 819.25 L1072.3 819.19 L1073.3 819.14 L1074.3 819.09 L1075.3 819.05 L1076.3 819.02 L1077.3 819.02 L1078.3 819.05 L1079.3 819.18 L1080.3 819.53 L1081.3 819.97 L1082.3 819.91 L1083.3 819.24 L1084.3 818.32 L1085.3 817.43 L1086.3 816.76 L1087.3 816.51 L1088.3 816.76 L1089.3 817.38 L1090.3 818.03 L1091.3 818.51 L1092.3 818.81 L1093.3 819.03 L1094.3 819.22 L1095.3 819.38 L1096.3 819.53 L1097.3 819.67 L1098.3 819.78 L1099.3 819.88 L1100.3 819.96 L1101.3 819.99 L1102.3 819.93 L1103.3 819.67 L1104.3 819.14 L1105.3 818.48 L1106.3 818.04 L1107.3 818.02 L1108.3 818.33 L1109.3 818.79 L1110.3 819.28 L1111.3 819.70 L1112.3 820.00 L1113.3 820.20 L1114.3 820.32 L1115.3 820.37 L1116.3 820.29 L1117.3 820.01 L1118.3 819.37 L1119.3 818.31 L1120.3 817.10 L1121.3 816.25 L1122.3 816.15 L1123.3 816.82 L1124.3 817.88 L1125.3 818.85 L1126.3 819.50 L1127.3 819.87 L1128.3 820.07 L1129.3 820.20 L1130.3 820.29 L1131.3 820.34 L1132.3 820.38 L1133.3 820.38 L1134.3 820.36 L1135.3 820.31 L1136.3 820.22 L1137.3 820.06 L1138.3 819.74 L1139.3 819.08 L1140.3 818.06 L1141.3 817.06 L1142.3 816.74 L1143.3 817.27 L1144.3 818.29 L1145.3 819.23 L1146.3 819.86 L1147.3 820.26 L1148.3 820.55 L1149.3 820.79 L1150.3 821.00 L1151.3 821.18 L1152.3 821.35 L1153.3 821.49 L1154.3 821.62 L1155.3 821.71 L1156.3 821.75 L1157.3 821.66 L1158.3 821.33 L1159.3 820.77 L1160.3 820.29 L1161.3 820.02 L1162.3 819.89 L1163.3 819.82 L1164.3 819.77 L1165.3 819.74 L1166.3 819.72 L1167.3 819.71 L1168.3 819.71 L1169.3 819.72 L1170.3 819.74 L1171.3 819.77 L1172.3 819.83 L1173.3 819.92 L1174.3 820.06 L1175.3 820.24 L1176.3 820.44 L1177.3 820.63 L1178.3 820.80 L1179.3 820.91 L1180.3 820.97 L1181.3 820.98 L1182.3 820.95 L1183.3 820.88 L1184.3 820.79 L1185.3 820.68 L1186.3 820.57 L1187.3 820.46 L1188.3 820.35 L1189.3 820.25 L1190.3 820.16 L1191.3 820.09 L1192.3 820.04 L1193.3 820.00 L1194.3 819.98 L1195.3 819.96 L1196.3 819.96 L1197.3 819.97 L1198.3 819.97 L1199.3 819.98 L1200.3 820.00 L1201.3 820.01 L1202.3 820.03 L1203.3 820.04 L1204.3 820.06 L1205.3 820.07 L1206.3 820.07 L1207.3 820.08 L1208.3 820.08 L1209.3 820.06 L1210.3 820.04 L1211.3 819.98 L1212.3 819.87 L1213.3 819.66 L1214.3 819.33 L1215.3 818.93 L1216.3 818.64 L1217.3 818.57 L1218.3 818.66 L1219.3 818.83 L1220.3 819.06 L1221.3 819.32 L1222.3 819.61 L1223.3 819.94 L1224.3 820.37 L1225.3 820.91 L1226.3 821.41 L1227.3 821.59 L1228.3 821.33 L1229.3 820.84 L1230.3 820.43 L1231.3 820.16 L1232.3 820.01 L1233.3 819.90 L1234.3 819.82 L1235.3 819.74 L1236.3 819.68 L1237.3 819.62 L1238.3 819.56 L1239.3 819.51 L1240.3 819.46 L1241.3 819.42 L1242.3 819.39 L1243.3 819.36 L1244.3 819.34 L1245.3 819.32 L1246.3 819.31 L1247.3 819.32 L1248.3 819.33 L1249.3 819.35 L1250.3 819.40 L1251.3 819.48 L1252.3 819.61 L1253.3 819.78 L1254.3 820.00 L1255.3 820.25 L1256.3 820.53 L1257.3 820.82 L1258.3 821.09 L1259.3 821.34 L1260.3 821.53 L1261.3 821.67 L1262.3 821.76 L1263.3 821.79 L1264.3 821.79 L1265.3 821.75 L1266.3 821.70 L1267.3 821.64 L1268.3 821.55 L1269.3 821.46 L1270.3 821.36 L1271.3 821.24 L1272.3 821.12 L1273.3 820.98 L1274.3 820.83 L1275.3 820.67 L1276.3 820.50 L1277.3 820.30 L1278.3 820.05 L1279.3 819.56 L1280.3 818.57 L1281.3 817.51 L1282.3 817.17 L1283.3 817.39 L1284.3 817.82 L1285.3 818.31 L1286.3 818.81 L1287.3 819.28 L1288.3 819.67 L1289.3 819.91 L1290.3 819.89 L1291.3 819.41 L1292.3 817.89 L1293.3 814.12 L1294.3 807.01 L1295.3 797.24 L1296.3 788.65 L1297.3 786.26 L1298.3 791.70 L1299.3 801.61 L1300.3 810.85 L1301.3 816.55 L1302.3 819.07 L1303.3 819.99 L1304.3 820.33 L1305.3 820.40 L1306.3 820.33 L1307.3 820.19 L1308.3 820.03 L1309.3 819.90 L1310.3 819.85 L1311.3 819.92 L1312.3 820.08 L1313.3 820.29 L1314.3 820.47 L1315.3 820.55 L1316.3 820.53 L1317.3 820.44 L1318.3 820.31 L1319.3 820.16 L1320.3 820.00 L1321.3 819.89" stroke="#3a9fd6" stroke-width="2" fill="none" stroke-linejoin="round"/>
  <path d="M925 880 H937" stroke="#3a9fd6" stroke-width="2"/>
  <path d="M1066 880 H1078" stroke="#a9bccb" stroke-width="1.7" stroke-dasharray="0.1 4.2" stroke-linecap="round"/>
</svg>
<div class="t" style="left:823px;top:698.5px;font-size:20px;-webkit-text-stroke:0.4px currentColor;letter-spacing:0.65px;color:#303030">$24.72</div>
<div class="t" style="left:895px;top:704px;font-size:11.5px;font-weight:bold;letter-spacing:0.3px;color:#4a4a4a"><svg width="7" height="7" viewBox="0 0 7 7" style="display:inline-block;vertical-align:0px;margin-right:4px"><path d="M1.1 1.1 L4.2 4.2" stroke="currentColor" stroke-width="1.9"/><path d="M2.0 6.4 H6.4 V2.0 Z" fill="currentColor"/></svg>24%</div>
<div class="t gr" style="left:825px;top:736px;font-size:11px">$1T</div>
<div class="t gr" style="left:825px;top:814px;font-size:11px">$0</div>
<div class="t gr" style="left:837px;top:837px;width:80px;text-align:center;font-size:11px">12 Feb</div>
<div class="t gr" style="left:902px;top:837px;width:80px;text-align:center;font-size:11px">25 Feb</div>
<div class="t gr" style="left:967px;top:837px;width:80px;text-align:center;font-size:11px">10 Mar</div>
<div class="t gr" style="left:1032px;top:837px;width:80px;text-align:center;font-size:11px">23 Mar</div>
<div class="t gr" style="left:1097px;top:837px;width:80px;text-align:center;font-size:11px">5 Apr</div>
<div class="t gr" style="left:1162px;top:837px;width:80px;text-align:center;font-size:11px">18 Apr</div>
<div class="t gr" style="left:1227px;top:837px;width:80px;text-align:center;font-size:11px">1 May</div>
<div class="t gr" style="left:942px;top:874px;font-size:11px">12 Feb–12 May 2025</div>
<div class="t gr" style="left:1084px;top:874px;font-size:11px">14 Nov 2024–11 Feb 2025</div>

<div class="card" style="left:1359px;top:654px;width:535px;height:254px"></div>
<div class="ttl" style="left:1375px;top:671px">Total sales by product</div>
<div class="t gr" style="left:1375px;top:702px;font-size:11px;letter-spacing:0.25px">$7 Draft (Beer) · Weevil Outdoor · Beer</div>
<div class="abs" style="left:1375px;top:718px;width:379px;height:33px;border-radius:0 3px 3px 0;background:#37a6e8"></div>
<div class="t gr" style="left:1764px;top:729px;font-size:11.5px">$7,923.05</div>
<div class="t g" style="left:1828px;top:729px;font-size:11.5px;font-weight:bold"><svg width="7" height="7" viewBox="0 0 7 7" style="display:inline-block;vertical-align:0px;margin-right:4px"><path d="M1.1 5.9 L4.2 2.8" stroke="currentColor" stroke-width="1.9"/><path d="M2.0 0.6 H6.4 V5.0 Z" fill="currentColor"/></svg>1K%</div>
<div class="abs" style="left:1375px;top:754px;width:33px;height:33px;border-radius:0 3px 3px 0;background:#ddeefa"></div>
<div class="t gr" style="left:1419px;top:764px;font-size:11.5px">$708.01</div>
<div class="t gr" style="left:1375px;top:807px;font-size:11px;letter-spacing:0.25px">$5 Draft (Beer) · Weevil Outdoor · Beer</div>
<div class="abs" style="left:1375px;top:823px;width:183px;height:33px;border-radius:0 3px 3px 0;background:#37a6e8"></div>
<div class="t gr" style="left:1568px;top:834px;font-size:11.5px">$3,822.37</div>
<div class="t g" style="left:1631px;top:834px;font-size:11.5px;font-weight:bold;letter-spacing:-0.2px"><svg width="7" height="7" viewBox="0 0 7 7" style="display:inline-block;vertical-align:0px;margin-right:4px"><path d="M1.1 5.9 L4.2 2.8" stroke="currentColor" stroke-width="1.9"/><path d="M2.0 0.6 H6.4 V5.0 Z" fill="currentColor"/></svg>1.1K%</div>
<div class="abs" style="left:1375px;top:859px;width:15px;height:33px;border-radius:0 3px 3px 0;background:#9ccbea"></div>
<div class="t gr" style="left:1400px;top:869px;font-size:11.5px">$314.48</div>

<!-- row 3 partial -->
<div class="card" style="left:256px;top:924px;width:535px;height:60px"></div>
<div class="ttl" style="left:272px;top:941px">Sessions over time</div>
<div class="card" style="left:807px;top:924px;width:535px;height:60px"></div>
<div class="ttl" style="left:823px;top:941px">Conversion rate over time</div>
<div class="card" style="left:1359px;top:924px;width:535px;height:60px"></div>
<div class="ttl" style="left:1375px;top:941px">Conversion rate breakdown</div>

<!-- scrollbar -->
<div class="abs" style="left:1912px;top:71px;width:6px;height:250px;border-radius:3px;background:#b5b5b5"></div>
<svg class="abs" style="left:1910px;top:60px" width="10" height="8" viewBox="0 0 10 8"><path d="M2 6 L5 2.5 L8 6 Z" fill="#a8a8a8"/></svg>
<svg class="abs" style="left:1910px;top:939px" width="10" height="8" viewBox="0 0 10 8"><path d="M2 2 L5 5.5 L8 2 Z" fill="#a8a8a8"/></svg>

<div class="abs" style="left:0;top:948px;width:1919px;height:1px;background:#b9c0c8"></div>
<div class="abs" style="left:0;top:949px;width:1919px;height:2px;background:#e4ebf3"></div>
</body></html>
